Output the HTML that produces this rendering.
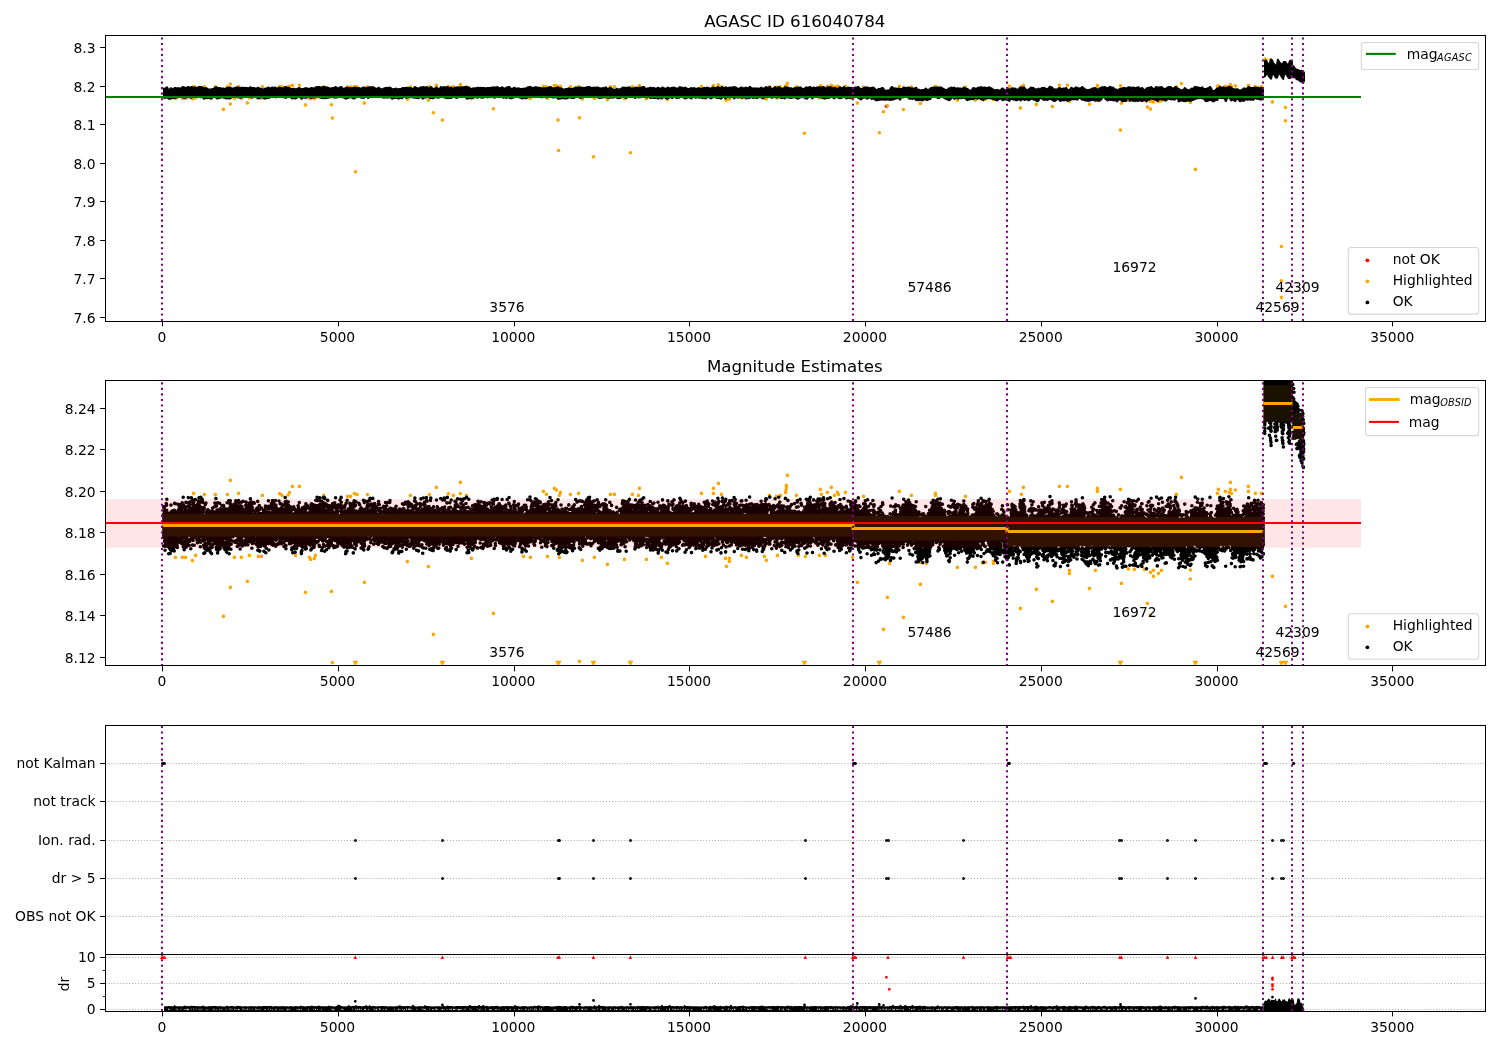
<!DOCTYPE html>
<html lang="en"><head><meta charset="utf-8"><title>AGASC ID 616040784</title>
<style>html,body{margin:0;padding:0;background:#fff}svg{display:block;will-change:transform}</style></head>
<body>
<svg width="1500" height="1050" viewBox="0 0 1500 1050" font-family="'DejaVu Sans','Liberation Sans',sans-serif" fill="#000">
<rect width="1500" height="1050" fill="#fff"/>
<defs>
<clipPath id="c1"><rect x="105.5" y="35.3" width="1380.0" height="285.74"/></clipPath>
<clipPath id="c2"><rect x="105.5" y="380.3" width="1380.0" height="285.66"/></clipPath>
<clipPath id="c3"><rect x="105.5" y="725.3" width="1380.0" height="285.70000000000005"/></clipPath>
</defs>
<g clip-path="url(#c1)">
<circle cx="886.4" cy="106.3" r="1.75" fill="#f00"/><path d="M230.4 84.1h0M193.6 86.5h0M204.4 86.8h0M215.4 86.8h0M227.4 86.8h0M238.6 86.5h0M262.4 86.9h0M279.6 86.6h0M282 86.9h0M289.4 86.4h0M288 86.8h0M292.4 85.2h0M299.4 85.2h0M323.6 86.9h0M347.6 87.1h0M350.6 87.1h0M354.4 86.6h0M357 86.8h0M367.4 86.8h0M410.4 86.9h0M429.4 86.8h0M436.4 85.4h0M448.4 86.6h0M175.4 98.4h0M182.4 98.4h0M185.6 98.4h0M192.4 99h0M195.6 98h0M234.4 98.4h0M241.4 98.4h0M249.4 98h0M258.4 98.2h0M261.4 98.2h0M295.4 98h0M309.4 98.4h0M310.6 98.8h0M314.4 98.6h0M315.4 98h0M407.4 99.2h0M428.4 100.1h0M247.4 102.9h0M230.4 104h0M223.4 109.4h0M305.4 104.9h0M331.4 104.7h0M364.4 103.1h0M433.4 112.7h0M332.4 118h0M460.4 84.5h0M460.4 86.6h0M453.4 86.9h0M466.4 86.9h0M543.4 86.2h0M546.4 86.7h0M554.4 85.6h0M556.4 85.9h0M560.4 86.3h0M559.4 86.9h0M570.4 86.7h0M578.6 86.5h0M610.4 86.7h0M614.4 86.7h0M632.4 86.7h0M639.4 85.6h0M638.4 86.9h0M701.4 86.5h0M713.4 85.6h0M713.4 86.5h0M718.4 84.7h0M721.4 86.7h0M471.4 98.6h0M523.4 98.2h0M530.4 98.4h0M547.4 98.2h0M559.4 98.4h0M582.4 99h0M594.4 98.4h0M607.4 99.7h0M624.4 98.8h0M646.4 98.8h0M661.4 98.4h0M667.4 99.5h0M705.4 98.2h0M725.4 98.6h0M729.4 98.6h0M729.4 99.2h0M726.4 100.1h0M741.4 98h0M746.4 98.4h0M493.4 108.8h0M579.4 117.7h0M787.4 83.2h0M786.4 85h0M786.4 85.4h0M786 85.9h0M785.6 86.4h0M769.4 86.9h0M776.4 87.1h0M780.4 86.9h0M796.4 86.9h0M820.4 85.8h0M821.4 86.7h0M827.4 86.3h0M831.4 85.4h0M837.4 86.3h0M838.4 86.7h0M834.4 86.9h0M845.4 86.3h0M863.4 87.1h0M899.4 86.2h0M911.4 86.9h0M935.4 86.5h0M935.4 86.9h0M965.4 87.1h0M1009.4 86.2h0M1023.4 85.4h0M1021.4 86.7h0M764.4 98.2h0M766.4 99h0M777.4 98h0M798.4 98h0M805.4 98.2h0M819.4 98h0M825.4 98h0M852.4 98.4h0M889.4 99.5h0M920.4 99.3h0M926.4 99.5h0M957.4 100.3h0M975.4 100.3h0M982.4 99.5h0M985.4 99.3h0M993.4 99.2h0M993.4 99.5h0M857.4 103.1h0M920.4 103.4h0M887.4 105.8h0M903.4 109.6h0M883.4 111.8h0M1036.4 104.4h0M1020.4 107.9h0M1059.4 85.2h0M1067.4 85.2h0M1097.4 85.6h0M1097.4 86.2h0M1120.4 85.8h0M1181.4 83.6h0M1176.4 86.7h0M1218.4 85.8h0M1217.4 86.5h0M1225.4 86.2h0M1230.4 84.5h0M1230.4 85.8h0M1229.4 86.3h0M1231.4 86.5h0M1235.4 85.9h0M1248.4 85.2h0M1248.4 86.2h0M1255.4 86.5h0M1261.4 86.5h0M1069.4 100.8h0M1069.4 101.4h0M1095.4 100.8h0M1128.4 100.6h0M1134.4 100.6h0M1144.4 100.6h0M1150.4 101.2h0M1153.4 100.8h0M1153.4 101.9h0M1158.4 101.4h0M1161.4 100.8h0M1190.4 100.8h0M1190.4 102.4h0M1052.4 106.6h0M1089.4 104.2h0M1121.4 103.2h0M1147.4 107h0M1150.4 109.1h0M1272.4 101.9h0M1285.4 107.5h0M355.4 171.7h0M442.4 120.1h0M558 120.1h0M558.6 150.5h0M593.4 156.7h0M630.4 152.8h0M804.4 133.2h0M879.4 132.8h0M1120.4 130.1h0M1195.4 169.4h0M1281.4 246.5h0M1281.4 280.8h0M1281.4 297.4h0M1285.4 120.8h0M1265.2 59h0M1270.3 59.8h0" stroke="#ffa500" stroke-width="3.6" stroke-linecap="round" fill="none"/><path d="M163 87.8 164 87.6 165 87.7 166 86.4 167 86.2 168 86.7 169 88.9 170 87.6 171 87.3 172 87.6 173 88.4 174 87.1 175 87.1 176 87.1 177 87.4 178 87.1 179 87.3 180 87.4 181 87.2 182 86.3 183 85.9 184 86.1 185 87.1 186 86.8 187 86.5 188 85.9 189 86.1 190 86.7 191 86 192 86.1 193 86.4 194 86.8 195 86.3 196 86.4 197 87 198 86.2 199 85.9 200 86.1 201 85.9 202 86.2 203 86.4 204 87.4 205 87.2 206 86.9 207 87.3 208 88.2 209 88.5 210 88.5 211 88.6 212 88 213 87.9 214 87.2 215 86.4 216 86.1 217 86.5 218 86.9 219 87.1 220 87 221 87.6 222 87.4 223 87.4 224 87.4 225 88 226 87.3 227 86.9 228 86.7 229 86.6 230 86.5 231 86.7 232 87.4 233 87.5 234 87.3 235 86.7 236 86.5 237 86.6 238 86.5 239 86.5 240 87.2 241 86.8 242 86.9 243 86.6 244 86.9 245 87.1 246 86.7 247 87.1 248 87.3 249 87 250 86.2 251 86.3 252 86.9 253 87 254 86.9 255 87.1 256 88.1 257 86.8 258 86.7 259 87.3 260 87.5 261 87.9 262 88 263 88.4 264 88.3 265 87.6 266 87.6 267 87.3 268 86.5 269 86.6 270 87.5 271 87 272 86.6 273 86.5 274 87 275 86.5 276 86.6 277 87.7 278 86.9 279 86.6 280 86.9 281 87.1 282 87.3 283 87.4 284 86.4 285 85.9 286 86.1 287 86.7 288 86.8 289 86.8 290 87.6 291 87.8 292 88 293 87.8 294 87.7 295 88 296 88.4 297 87.8 298 87.4 299 86.9 300 87 301 88.2 302 87.9 303 87.9 304 87.7 305 87.3 306 87.1 307 87.5 308 87.5 309 88 310 87.6 311 87.1 312 87.1 313 87.3 314 87.4 315 86.6 316 86.3 317 85.9 318 86.1 319 86.1 320 86 321 86.5 322 86.6 323 86 324 85.9 325 86 326 86.6 327 86.6 328 86.5 329 87 330 87.4 331 87.5 332 87.1 333 87.1 334 87 335 86.1 336 86 337 86.7 338 87.4 339 86.7 340 86.3 341 85.9 342 86.1 343 87.8 344 87.7 345 87.3 346 86.8 347 86.4 348 86.7 349 87.2 350 87 351 87.2 352 87.2 353 87 354 86.5 355 86.7 356 86.7 357 87 358 87.2 359 87 360 87.3 361 87.8 362 87.1 363 86.4 364 86.5 365 86.6 366 87.5 367 86.7 368 86.7 369 86.4 370 86.1 371 86.4 372 86.2 373 86.1 374 86.6 375 87.1 376 87.7 377 87.7 378 86.7 379 86.7 380 87.4 381 87.9 382 88.5 383 87.7 384 87.6 385 86.9 386 86.9 387 86.8 388 87.1 389 86.8 390 86.5 391 86.8 392 88.1 393 88.2 394 88.1 395 87.9 396 87.5 397 87.8 398 88.4 399 88.1 400 88.1 401 88.1 402 87.1 403 87.1 404 87.3 405 86.8 406 86.9 407 86.8 408 86.7 409 87 410 87 411 87.3 412 87.3 413 87.9 414 86.3 415 86 416 86.4 417 87.1 418 87.3 419 87.6 420 86.5 421 86.2 422 86.5 423 86 424 86.1 425 86.8 426 86 427 86 428 86.8 429 87.6 430 86.2 431 86 432 86.5 433 87.7 434 87.7 435 87.4 436 86.4 437 86.4 438 87.4 439 88.2 440 86.2 441 86.1 442 86.5 443 86.4 444 86 445 86.2 446 86.4 447 85.9 448 86 449 87.1 450 86.8 451 86.4 452 86.6 453 88.1 454 87 455 86.6 456 86.7 457 86.2 458 86.2 459 86.8 460 86.3 461 86.4 462 86.5 463 86.2 464 86.1 465 86.3 466 86 467 85.9 468 86.4 469 86.2 470 86.7 471 88.2 472 87.5 473 87.5 474 87.3 475 87.2 476 87.3 477 86.9 478 86.6 479 86.9 480 87 481 86.7 482 87.1 483 87.1 484 86.9 485 86.9 486 87.4 487 87.1 488 87 489 86.9 490 86.9 491 86.8 492 86.4 493 86.6 494 86.3 495 86.4 496 86.6 497 86.1 498 86.3 499 87.1 500 87.3 501 86.7 502 86.3 503 86.5 504 87.6 505 87.5 506 86.8 507 86.3 508 86.3 509 85.9 510 86.1 511 87.6 512 88 513 87.3 514 86.7 515 86.8 516 87.5 517 87.7 518 87.2 519 87.2 520 88 521 88.1 522 87.8 523 88 524 87.4 525 87.4 526 87.4 527 86.4 528 86.3 529 86.2 530 85.8 531 86.1 532 86.9 533 86.8 534 86.8 535 86.2 536 86.2 537 86.3 538 86.7 539 86.7 540 86.7 541 87 542 87.5 543 87.3 544 87.3 545 87.2 546 87.3 547 87.2 548 86.7 549 86.2 550 85.9 551 86.3 552 86.5 553 87.4 554 87.3 555 87 556 86.9 557 86.6 558 86.3 559 86.7 560 87.6 561 87.3 562 87.6 563 88.3 564 88.8 565 88.1 566 88 567 88 568 87.5 569 87.3 570 87.8 571 88.1 572 87.7 573 87.7 574 87.3 575 86.4 576 86.3 577 86.8 578 86.8 579 86.6 580 86.6 581 86.6 582 86.7 583 86.8 584 86.9 585 86.8 586 86.5 587 86.3 588 86 589 86 590 85.9 591 86.7 592 87.1 593 86.7 594 86.6 595 86.7 596 86.7 597 86.3 598 86.6 599 86.9 600 87.3 601 87.6 602 87.2 603 87.1 604 87.2 605 86.5 606 86.3 607 86.9 608 88.3 609 87 610 86.8 611 87.3 612 87.4 613 88.2 614 88.8 615 89 616 87.8 617 87.8 618 88.6 619 88.3 620 88.2 621 87.7 622 86.7 623 86.5 624 86.7 625 86.7 626 86.7 627 86.8 628 86.7 629 86.3 630 86.3 631 87.4 632 87.4 633 87.3 634 87.4 635 86.4 636 86.4 637 87.2 638 87 639 86.7 640 86.4 641 86.7 642 86.2 643 86.1 644 86 645 86.6 646 88 647 87.5 648 87.2 649 87.2 650 86.7 651 86.8 652 87.3 653 87.1 654 86.9 655 87.3 656 88.1 657 87.1 658 86.8 659 87.1 660 87.5 661 87.5 662 86.4 663 86.4 664 87.3 665 87.5 666 87.7 667 86.7 668 86.6 669 87.1 670 87.5 671 87 672 86.7 673 86.7 674 86.4 675 86.7 676 87.6 677 87.4 678 87.5 679 86.3 680 86.1 681 86.4 682 86.7 683 86.8 684 87.3 685 86.6 686 86.7 687 87.6 688 88.1 689 88 690 87.5 691 87 692 87.2 693 87.5 694 87.1 695 87.3 696 87.9 697 87.6 698 87.3 699 87.2 700 87.6 701 87.7 702 87.7 703 87.3 704 86.8 705 86.9 706 87 707 86.6 708 86.8 709 87.1 710 87.5 711 87.6 712 86.6 713 86.6 714 87 715 86.7 716 86.9 717 86.3 718 86.1 719 86.5 720 87.1 721 86.7 722 86 723 86.1 724 87.2 725 86.5 726 86.3 727 86.7 728 87.2 729 86.6 730 86.6 731 86.7 732 86.5 733 86.3 734 85.9 735 86.2 736 86.5 737 87 738 87.9 739 87.5 740 86.9 741 86.5 742 86.5 743 87 744 87.5 745 86.8 746 86.4 747 86.7 748 87.5 749 85.9 750 85.8 751 86.6 752 87.2 753 87.5 754 87.4 755 87.3 756 87.7 757 87.2 758 87.4 759 88.1 760 87 761 86.6 762 86.9 763 87.4 764 87.4 765 86.4 766 86.1 767 86.2 768 87.1 769 86 770 85.8 771 86.4 772 88.1 773 87.5 774 86.6 775 86.1 776 86.4 777 87.4 778 86 779 85.9 780 86.4 781 87.3 782 87.7 783 87.6 784 86.8 785 86.1 786 86.2 787 86.7 788 86.4 789 86.8 790 87.6 791 87.3 792 87.3 793 88.2 794 87.1 795 87.1 796 87.2 797 86.5 798 86.6 799 86.7 800 86.2 801 86.5 802 87.2 803 88.3 804 87.8 805 86.9 806 86.3 807 86.4 808 86.7 809 86.2 810 85.9 811 86 812 87.6 813 86.4 814 86.4 815 87.2 816 86.8 817 86.6 818 86.2 819 86.5 820 86.2 821 86.5 822 86.4 823 86 824 86 825 86.8 826 87.5 827 86.3 828 86.2 829 86.4 830 85.9 831 86.2 832 86.8 833 87.3 834 87.3 835 86.8 836 87.1 837 88 838 87.5 839 86.6 840 86.3 841 86.6 842 87.6 843 86.3 844 86.1 845 86.5 846 87.6 847 87 848 86.6 849 86.8 850 86.9 851 86.7 852 87.3 853 87.1 854 87.4 L854 96.8 853 98.1 852 98.5 851 98.7 850 99.3 849 99.1 848 98.5 847 99.5 846 99.6 845 98.5 844 97.7 843 98.2 842 98.8 841 99 840 99.2 839 99 838 98.7 837 98 836 98.2 835 98.9 834 99.4 833 98.9 832 97.6 831 98.1 830 98.5 829 98.9 828 98.7 827 99 826 98.8 825 99.4 824 99.7 823 99 822 98.7 821 98.8 820 97.9 819 97.6 818 98.2 817 97.9 816 97.8 815 97.6 814 97.7 813 99.5 812 99.5 811 98.2 810 98.3 809 97.7 808 99.2 807 99.7 806 99.2 805 98.8 804 98.5 803 97.9 802 98.3 801 98.2 800 98.4 799 99.1 798 99.8 797 99.4 796 99 795 98.4 794 98.3 793 98.6 792 98.7 791 99 790 99 789 98.5 788 98.6 787 98.2 786 98.6 785 99.5 784 99.3 783 98.4 782 99.2 781 98.9 780 98.5 779 98.1 778 98.2 777 98.6 776 98.7 775 98.1 774 98.3 773 98.2 772 98.9 771 98.6 770 98 769 98 768 97.6 767 97.3 766 97.9 765 98.3 764 98.9 763 99.1 762 99.4 761 98.5 760 97.9 759 98.4 758 98.4 757 99.3 756 99.1 755 98.2 754 99 753 98.9 752 98.5 751 98.3 750 98.8 749 99.3 748 99 747 98.4 746 98.9 745 99 744 97.9 743 98.9 742 98.8 741 98.3 740 98.2 739 98.4 738 98.8 737 98.5 736 98 735 99.2 734 99.4 733 98.4 732 97.9 731 98.2 730 98.2 729 98.4 728 97.7 727 98.4 726 99.5 725 99.4 724 98 723 98.1 722 99.2 721 99.7 720 99.2 719 98.9 718 99 717 99.1 716 98.8 715 98 714 98.3 713 98.3 712 99 711 99.4 710 98.9 709 98.2 708 98.2 707 98.5 706 98.9 705 98.9 704 98.5 703 99.2 702 98.9 701 98.6 700 98.6 699 98.8 698 98.4 697 98.1 696 98.9 695 98.6 694 98.1 693 98.1 692 99.5 691 99.5 690 98.4 689 98.7 688 97.9 687 98.9 686 99.2 685 99.5 684 98.9 683 98.2 682 98.1 681 97 680 98.4 679 98.9 678 98.4 677 99.3 676 99.1 675 97.9 674 97.9 673 99.1 672 99.2 671 98.4 670 98.3 669 98.9 668 99.6 667 99.4 666 99.5 665 99 664 97.4 663 99 662 99.1 661 98.8 660 98.4 659 99.4 658 99.7 657 98.9 656 99 655 98.9 654 98.9 653 99.1 652 98.6 651 99 650 99 649 98.3 648 98 647 98.6 646 98.5 645 97.4 644 97.9 643 98.1 642 98.1 641 98.3 640 98.3 639 98.5 638 98.3 637 98.1 636 98.7 635 98.9 634 98.6 633 97.1 632 96.8 631 96.9 630 97.2 629 97 628 96.7 627 99 626 99.3 625 98.7 624 97.9 623 97.7 622 98 621 98.7 620 99.3 619 98.9 618 99.3 617 99.1 616 98.2 615 98 614 98.8 613 98.5 612 98.4 611 98.8 610 98.7 609 98.7 608 98.7 607 98.5 606 98.4 605 98.3 604 98.3 603 98.5 602 98.8 601 98.6 600 99.2 599 98.7 598 98.8 597 97.9 596 97 595 97.4 594 97.4 593 97.9 592 97.8 591 98.3 590 97.9 589 97.7 588 98 587 97.9 586 97.9 585 97.7 584 97.9 583 98.4 582 98.2 581 99 580 98.8 579 98.7 578 97.8 577 97.2 576 97.4 575 98.7 574 98.7 573 99.2 572 99.1 571 98.7 570 98.6 569 98.5 568 99 567 99.5 566 99.6 565 99.3 564 99.5 563 99 562 99.3 561 99.3 560 99.5 559 99.8 558 99.6 557 99.2 556 98.3 555 98.1 554 98.8 553 98.5 552 98.3 551 98.1 550 97 549 97.2 548 98 547 98.5 546 98.2 545 98.2 544 97.3 543 97.8 542 98.6 541 98.3 540 97.7 539 96.5 538 96.9 537 96.6 536 97.3 535 98.2 534 98.1 533 97.4 532 97.3 531 97.6 530 97.5 529 98.3 528 98.3 527 99.2 526 99.3 525 99.1 524 98.6 523 98.9 522 99.5 521 99.1 520 98.4 519 98.4 518 97.4 517 97.3 516 97.6 515 98.3 514 98.2 513 98.9 512 98.8 511 99.4 510 99.1 509 98.7 508 98.1 507 99 506 99 505 98.2 504 98.8 503 98.8 502 98 501 97.9 500 97.7 499 97.7 498 96.9 497 97.2 496 98.2 495 98.6 494 98.8 493 98.1 492 97.4 491 98.2 490 98.1 489 98.3 488 98.3 487 98.4 486 98.1 485 97.9 484 98.4 483 98.8 482 98.6 481 98.7 480 98.2 479 97.9 478 98.7 477 98.7 476 98.1 475 98.3 474 98.6 473 99.1 472 99 471 98.8 470 98.7 469 99.6 468 99.3 467 99.7 466 99.2 465 98 464 97.9 463 97.5 462 97.8 461 97.3 460 97.7 459 98 458 98.5 457 98.8 456 99 455 98.2 454 97.6 453 98.1 452 98.7 451 99 450 99.3 449 98.9 448 98.8 447 99.2 446 98.8 445 98.9 444 98.1 443 98.2 442 97.5 441 97.3 440 98.1 439 98.8 438 98.8 437 98.6 436 98.3 435 98.2 434 99 433 99.2 432 99.2 431 98.9 430 99 429 98.7 428 97.8 427 98 426 98.8 425 98.5 424 98.7 423 99.7 422 99.5 421 97.8 420 98.4 419 99.1 418 99.2 417 99.1 416 99 415 98.4 414 98.8 413 98.6 412 97.9 411 98.3 410 98.2 409 98.5 408 97.9 407 98.7 406 99 405 98.1 404 97.9 403 98.7 402 99.4 401 99.1 400 99 399 99.7 398 99.4 397 98.8 396 98.7 395 99 394 98.9 393 99.5 392 99.7 391 99 390 98.3 389 98.3 388 98.6 387 98.8 386 98.3 385 98.5 384 98.7 383 98.5 382 98.3 381 97.4 380 97.4 379 97.9 378 98 377 97.9 376 97.4 375 97.4 374 98 373 97.9 372 96.9 371 97.7 370 98.1 369 98.7 368 99 367 98.4 366 97.2 365 98.4 364 99.1 363 98.8 362 98.8 361 98.8 360 98.2 359 97.3 358 97.5 357 98.1 356 98.6 355 98.9 354 99.5 353 99.6 352 98.7 351 98.3 350 98.3 349 98.7 348 99 347 99.3 346 99.8 345 99.6 344 98.6 343 98.4 342 97.9 341 98 340 97.9 339 97.4 338 98.3 337 98.4 336 98.4 335 98.6 334 98.7 333 98.3 332 98 331 98.2 330 98.2 329 98.7 328 98.4 327 99 326 99 325 99.3 324 99.2 323 98.8 322 99.2 321 99.1 320 98.3 319 98.4 318 97.7 317 97.7 316 97.7 315 98.3 314 98.6 313 98.5 312 98.8 311 99.1 310 98.8 309 97.8 308 97.9 307 98.6 306 98.9 305 98.8 304 98.4 303 98.8 302 99.7 301 99.7 300 98.6 299 97.6 298 98.3 297 98.7 296 99.2 295 99.5 294 98.8 293 99.6 292 99.4 291 98.9 290 98 289 97.8 288 97.1 287 98.5 286 98.9 285 98.4 284 98.5 283 97.9 282 97.8 281 97.9 280 97.5 279 97.8 278 98.1 277 97.5 276 98.4 275 98.3 274 97.7 273 98.3 272 98.1 271 98 270 98.5 269 99.1 268 98.8 267 98.9 266 99.6 265 99.4 264 99.4 263 99 262 97.8 261 98.5 260 99.3 259 99.1 258 99.2 257 98.9 256 98 255 97.5 254 97.7 253 98.2 252 98.8 251 98.4 250 97.6 249 97.5 248 98.1 247 97.8 246 98 245 98.1 244 97.6 243 98.2 242 98.3 241 98.5 240 98.9 239 98.3 238 98.2 237 98.5 236 97.7 235 97.7 234 97.6 233 97.3 232 98.4 231 99 230 99.6 229 99.8 228 99 227 99.5 226 99.4 225 99.1 224 98.8 223 98.4 222 98.2 221 98.6 220 98.9 219 98.8 218 99.6 217 99.5 216 98.9 215 97.8 214 97.6 213 98.6 212 99.7 211 99.6 210 99.5 209 98.9 208 98.9 207 99.2 206 98.9 205 99.6 204 99.8 203 99.4 202 97.4 201 98.3 200 98.5 199 97.6 198 97.8 197 97.7 196 96.8 195 98 194 98.2 193 98 192 98.2 191 98.9 190 98.6 189 98.3 188 98.2 187 98.3 186 98.6 185 98.8 184 99.1 183 98.5 182 97.9 181 97.8 180 97.6 179 97.3 178 98.4 177 98.6 176 98.4 175 99 174 99.3 173 98.8 172 99.2 171 99.4 170 99.8 169 99.8 168 99.6 167 98.4 166 98.6 165 99.2 164 98.8 163 98.2z" fill="#000" stroke="none"/><path d="M852 88.2 853 87.1 854 86.9 855 86.5 856 86.6 857 86.6 858 86 859 86.1 860 87.6 861 88 862 88.3 863 87.1 864 87.1 865 86.5 866 86.6 867 86.4 868 86.4 869 87.1 870 87.2 871 87.1 872 86.7 873 86.4 874 86.8 875 87.5 876 88.8 877 89 878 88.1 879 88 880 87.9 881 87.6 882 87 883 86.9 884 87.7 885 89.4 886 89.7 887 89.5 888 89.5 889 89.3 890 87.6 891 86.4 892 86 893 86.3 894 87.6 895 87.4 896 87.3 897 87.9 898 87.6 899 87.5 900 88.1 901 87.9 902 87.7 903 86.4 904 86.3 905 86.9 906 86.7 907 87.1 908 86.5 909 86.5 910 86.9 911 87.3 912 87.5 913 87.5 914 87.6 915 87.2 916 86.7 917 86.9 918 88.9 919 88.6 920 89 921 89.4 922 89 923 89 924 89 925 87.7 926 87.6 927 88.2 928 88.9 929 88.4 930 87.6 931 86.9 932 87 933 86.4 934 86.6 935 86.6 936 86.7 937 86.4 938 86.3 939 86.8 940 86.2 941 86.2 942 87.2 943 87.3 944 88.3 945 88.4 946 89.1 947 89.1 948 87.6 949 87.5 950 87.2 951 86.4 952 86.5 953 87.2 954 86.6 955 86.7 956 87.7 957 87.3 958 87.2 959 87.5 960 87.4 961 87.5 962 88 963 86.8 964 86.6 965 87 966 87.5 967 88 968 88.1 969 88.9 970 89.5 971 89.8 972 87.4 973 87.2 974 87 975 87.5 976 87.7 977 87.2 978 86.5 979 86.7 980 86.4 981 86.1 982 86.4 983 86.7 984 86.6 985 86.6 986 86.7 987 87.2 988 86.6 989 86.2 990 86.4 991 87.2 992 87.3 993 88.4 994 88.7 995 89.6 996 89.1 997 88.9 998 89.1 999 89.5 1000 89.5 1001 88.2 1002 87.5 1003 87.6 1004 88.5 1005 89 1006 89.7 1007 89.4 1008 89.8 L1008 99.1 1007 100.5 1006 100.6 1005 100.4 1004 100.4 1003 101.3 1002 101.2 1001 99.5 1000 100 999 99.8 998 101.4 997 101.4 996 101 995 100.9 994 99.9 993 100.1 992 99.7 991 99.2 990 99.5 989 98.9 988 99 987 99.4 986 99.4 985 99.3 984 101.2 983 101.3 982 100.2 981 100.3 980 99.8 979 98.7 978 100.1 977 100 976 98.6 975 99.5 974 99.9 973 100.3 972 99.8 971 100.2 970 100.2 969 100.6 968 101.1 967 101.3 966 100.5 965 99.2 964 98.9 963 98.4 962 99.3 961 99.2 960 98.7 959 99.6 958 99.5 957 99 956 98.8 955 100 954 100 953 98.4 952 98.8 951 100.3 950 101 949 101.3 948 100.9 947 100.2 946 100 945 99.5 944 99 943 98.3 942 97.3 941 97.7 940 98.8 939 99.1 938 99.3 937 98.9 936 97.6 935 97.2 934 97.3 933 98.1 932 98 931 99.7 930 100.2 929 100.3 928 100.8 927 101.3 926 100.8 925 99.9 924 100.7 923 101.5 922 101.2 921 100.9 920 100.8 919 101 918 101.3 917 101.1 916 101.3 915 100.6 914 98.9 913 100 912 99.9 911 99.4 910 99.9 909 99.4 908 98.8 907 98.1 906 97 905 97.5 904 98.3 903 98.6 902 98 901 100.3 900 100.7 899 100 898 98.8 897 99.3 896 99.4 895 99.8 894 100.6 893 100.4 892 100.5 891 100.9 890 101 889 100.4 888 100.6 887 100.6 886 100.8 885 100.8 884 100.7 883 100.4 882 100.5 881 100.8 880 100.6 879 101.1 878 101.1 877 101.2 876 101.5 875 100.7 874 99.9 873 99.5 872 100 871 100 870 98.5 869 98.6 868 99.5 867 99.8 866 99.2 865 98.2 864 98.8 863 98.7 862 99.9 861 100.5 860 100.2 859 99.2 858 98.9 857 97.9 856 97.8 855 98.4 854 98 853 97.2 852 96.7z" fill="#000" stroke="none"/><path d="M1006 88 1007 87.3 1008 87.3 1009 88.4 1010 88.6 1011 87.5 1012 87.2 1013 87.4 1014 87.5 1015 87.6 1016 87.9 1017 88.6 1018 88.8 1019 87.1 1020 86.5 1021 86.5 1022 86.8 1023 86.5 1024 86.3 1025 86.7 1026 88.2 1027 89.3 1028 88.6 1029 88.2 1030 86.7 1031 86.5 1032 87 1033 86.7 1034 86.9 1035 88.2 1036 88.2 1037 88.4 1038 87.7 1039 87.6 1040 88.4 1041 87.2 1042 86.9 1043 87 1044 86.8 1045 86.9 1046 88.1 1047 88 1048 87.5 1049 86.1 1050 85.7 1051 86 1052 86.5 1053 86.8 1054 88.4 1055 88.2 1056 88.5 1057 88.4 1058 87.5 1059 86.9 1060 87.1 1061 87.8 1062 87.9 1063 87.4 1064 87.5 1065 87.5 1066 87.1 1067 87.3 1068 89.1 1069 89.2 1070 87.7 1071 86.8 1072 86.8 1073 87.7 1074 87.8 1075 86.7 1076 86.3 1077 86.7 1078 87.3 1079 87.3 1080 87.6 1081 86.7 1082 86 1083 86 1084 87.4 1085 87.8 1086 88.7 1087 89.2 1088 88.8 1089 89 1090 88.7 1091 87.9 1092 87.7 1093 87.3 1094 87.2 1095 86.9 1096 87.3 1097 88.3 1098 88.4 1099 87.6 1100 87.3 1101 86.4 1102 86.3 1103 86.6 1104 86 1105 85.9 1106 86.4 1107 87.2 1108 86.9 1109 86.3 1110 85.8 1111 86 1112 86.7 1113 86.5 1114 87.1 1115 88.6 1116 88.5 1117 88.6 1118 89.2 1119 88.3 1120 87.8 1121 87.5 1122 87.5 1123 87.1 1124 86.7 1125 87 1126 87.6 1127 86.9 1128 86.3 1129 86.3 1130 86.4 1131 86.5 1132 87 1133 86.6 1134 86.6 1135 87.3 1136 86.7 1137 86.7 1138 86.3 1139 86.3 1140 87.7 1141 87.2 1142 87 1143 87.3 1144 88.7 1145 89 1146 87.6 1147 87.3 1148 86.8 1149 86.7 1150 86.4 1151 86 1152 86.3 1153 87.4 1154 88.1 1155 86.8 1156 85.9 1157 85.9 1158 86.7 1159 86.2 1160 86.4 1161 86.1 1162 86.1 1163 86.9 1164 87.8 1165 87.9 1166 87.5 1167 86.5 1168 86.2 1169 86 1170 86 1171 86.1 1172 86.9 1173 87.6 1174 86.9 1175 86 1176 85.9 1177 86.6 1178 87.4 1179 88 1180 88.5 1181 89.2 1182 89.3 1183 89.1 1184 87.3 1185 87.1 1186 87.8 1187 88.7 1188 88.7 1189 89.6 1190 88.6 1191 87.7 1192 87.4 1193 87.8 1194 86.3 1195 85.8 1196 86 1197 86.4 1198 86.2 1199 86.7 1200 87 1201 86.9 1202 86.2 1203 86.4 1204 87.9 1205 88.1 1206 87.9 1207 87.3 1208 87.5 1209 86.2 1210 85.9 1211 86.2 1212 88 1213 90 1214 90.1 1215 89.2 1216 88.2 1217 87.5 1218 87.6 1219 86.2 1220 85.8 1221 86.1 1222 86.9 1223 86.2 1224 86.2 1225 87.3 1226 86.7 1227 86.8 1228 86 1229 85.8 1230 86.2 1231 86.3 1232 86.7 1233 88 1234 87.9 1235 88.4 1236 88.4 1237 88.1 1238 88.4 1239 88.9 1240 89.5 1241 89.3 1242 88.8 1243 87.6 1244 87.5 1245 87.5 1246 87.9 1247 87.2 1248 86.1 1249 86 1250 86.6 1251 87 1252 87.1 1253 87.1 1254 86.5 1255 86.5 1256 87.1 1257 86.8 1258 86.4 1259 86.7 1260 87.4 1261 86.8 1262 87 1263 87.3 1264 87.4 L1264 99.7 1263 99.8 1262 100.4 1261 100.5 1260 100.5 1259 100.2 1258 99.5 1257 100 1256 99.4 1255 99.2 1254 100.5 1253 101 1252 100.6 1251 100.8 1250 100.8 1249 100.3 1248 100.7 1247 100.8 1246 100.3 1245 101 1244 102.1 1243 102 1242 101.3 1241 102.2 1240 102.2 1239 101.7 1238 100.4 1237 99.5 1236 101.9 1235 102.2 1234 101.5 1233 100.6 1232 101.5 1231 101.6 1230 100.5 1229 98.6 1228 98.4 1227 101.3 1226 102.1 1225 101.9 1224 99.2 1223 99.1 1222 99.2 1221 98.9 1220 99.1 1219 98.5 1218 100.9 1217 101.1 1216 100.8 1215 101.8 1214 102.4 1213 102.2 1212 102.1 1211 101.3 1210 101.1 1209 101.3 1208 101.8 1207 102.2 1206 101.9 1205 101.9 1204 100.6 1203 99.3 1202 99.4 1201 98.8 1200 99.3 1199 99.1 1198 99.2 1197 99.3 1196 99.7 1195 100.3 1194 100.4 1193 100.9 1192 101.3 1191 101.8 1190 102 1189 101.4 1188 101.7 1187 101.6 1186 102.2 1185 102.3 1184 101.8 1183 102.2 1182 101.6 1181 101.5 1180 102.1 1179 102.4 1178 102.3 1177 99.3 1176 99.4 1175 100.7 1174 100.7 1173 100.1 1172 100.6 1171 100.3 1170 100.3 1169 100 1168 99.6 1167 101.3 1166 101.5 1165 101.6 1164 100.9 1163 100.6 1162 100.6 1161 100.2 1160 100.1 1159 100.9 1158 101.9 1157 102 1156 101.1 1155 100.9 1154 99.7 1153 99.9 1152 100.1 1151 99.6 1150 100.6 1149 100.4 1148 101.2 1147 102.5 1146 102.5 1145 100.8 1144 101.2 1143 101.5 1142 102.2 1141 101.9 1140 101.3 1139 101.5 1138 102.2 1137 101.8 1136 101.8 1135 101.9 1134 101.4 1133 101.9 1132 101.5 1131 101.3 1130 101.9 1129 101.6 1128 98.7 1127 101.5 1126 102.1 1125 102 1124 102.1 1123 102.2 1122 102.3 1121 101.3 1120 100.6 1119 100.5 1118 101.9 1117 102.4 1116 102 1115 101.1 1114 101.5 1113 101.5 1112 100.7 1111 100.9 1110 100.9 1109 100.6 1108 101.6 1107 101.5 1106 100.3 1105 100.1 1104 98.2 1103 98.4 1102 99.9 1101 101 1100 101.8 1099 101.8 1098 101.9 1097 101.3 1096 101.5 1095 101.6 1094 101.1 1093 100.9 1092 100.8 1091 101.6 1090 101.4 1089 101.8 1088 102 1087 101.5 1086 101.7 1085 101.3 1084 101.2 1083 100.5 1082 100.8 1081 100.2 1080 98.7 1079 99.3 1078 100.3 1077 100.8 1076 100.3 1075 100 1074 100.5 1073 100.2 1072 100.1 1071 101 1070 100.8 1069 101.3 1068 102 1067 101.7 1066 101.1 1065 101.2 1064 101.2 1063 101.4 1062 101.1 1061 102 1060 102.1 1059 101 1058 99.9 1057 100.5 1056 101.6 1055 102.1 1054 102 1053 101.6 1052 100.7 1051 100.2 1050 99.9 1049 100 1048 101 1047 101 1046 100.6 1045 100.7 1044 101 1043 100.5 1042 100.1 1041 98.8 1040 99.8 1039 101.7 1038 102.1 1037 102.3 1036 101.9 1035 100.4 1034 101 1033 100.5 1032 99.6 1031 99.9 1030 100.8 1029 101.2 1028 101.2 1027 100.6 1026 100.2 1025 101 1024 101.1 1023 99.9 1022 100.4 1021 101.4 1020 101.3 1019 100.3 1018 100.8 1017 101.3 1016 101.6 1015 100.8 1014 100.4 1013 100.7 1012 99.9 1011 100 1010 101.7 1009 101.9 1008 101 1007 100.9 1006 100.2z" fill="#000" stroke="none"/><path d="M1264 60.8 1265 59.6 1266 59.4 1267 60 1268 61.9 1269 63.2 1270 59.2 1271 58.6 1272 58.7 1273 60.1 1274 62.5 1275 63.5 1276 64.8 1277 58.7 1278 58.7 1279 59.4 1280 61.5 1281 62.5 1282 63.6 1283 61.3 1284 61.1 1285 61 1286 61.2 1287 62.8 1288 63.8 1289 60.6 1290 59.8 1291 59.8 1292 60.3 1293 61.7 L1293 74 1292 74.2 1291 78.4 1290 79.3 1289 79.1 1288 78.7 1287 77.3 1286 75.2 1285 75 1284 79.8 1283 79.9 1282 79 1281 77.7 1280 75.6 1279 74.8 1278 78 1277 78.7 1276 78.7 1275 77.9 1274 76.6 1273 74.6 1272 79.3 1271 79.7 1270 79.2 1269 77.8 1268 76.7 1267 74.6 1266 76.6 1265 77.5 1264 77.3z" fill="#000" stroke="none"/><path d="M1292 65.1 1293 64.9 1294 65.4 1295 66.4 1296 68.5 1297 68.6 1298 68.9 1299 69.3 1300 70.1 1301 69.9 1302 69.8 1303 70.3 1304 70.8 1305 72.8 L1305 80.9 1304 83.6 1303 83.7 1302 83.1 1301 82.7 1300 82 1299 81.6 1298 80.5 1297 80.3 1296 79.9 1295 78.4 1294 78.2 1293 78.3 1292 77.2z" fill="#000" stroke="none"/><path d="M105.5 97H1361" stroke="#008000" stroke-width="2" fill="none"/>
<path d="M162 321.04V35.3" stroke="#800080" stroke-width="2" stroke-dasharray="2.083 3.4375" fill="none"/><path d="M853 321.04V35.3" stroke="#800080" stroke-width="2" stroke-dasharray="2.083 3.4375" fill="none"/><path d="M1007 321.04V35.3" stroke="#800080" stroke-width="2" stroke-dasharray="2.083 3.4375" fill="none"/><path d="M1263 321.04V35.3" stroke="#800080" stroke-width="2" stroke-dasharray="2.083 3.4375" fill="none"/><path d="M1292 321.04V35.3" stroke="#800080" stroke-width="2" stroke-dasharray="2.083 3.4375" fill="none"/><path d="M1303 321.04V35.3" stroke="#800080" stroke-width="2" stroke-dasharray="2.083 3.4375" fill="none"/>
</g>
<rect x="105.5" y="35.5" width="1380.0" height="286.0" fill="none" stroke="#000" stroke-width="1"/>
<path d="M162.5 321.5V326.4" stroke="#000" stroke-width="1"/><text x="161.8" y="341.5" font-size="13.89" text-anchor="middle">0</text><path d="M338.5 321.5V326.4" stroke="#000" stroke-width="1"/><text x="337.5" y="341.5" font-size="13.89" text-anchor="middle">5000</text><path d="M514.5 321.5V326.4" stroke="#000" stroke-width="1"/><text x="513.3" y="341.5" font-size="13.89" text-anchor="middle">10000</text><path d="M689.5 321.5V326.4" stroke="#000" stroke-width="1"/><text x="689.1" y="341.5" font-size="13.89" text-anchor="middle">15000</text><path d="M865.5 321.5V326.4" stroke="#000" stroke-width="1"/><text x="864.9" y="341.5" font-size="13.89" text-anchor="middle">20000</text><path d="M1041.5 321.5V326.4" stroke="#000" stroke-width="1"/><text x="1040.7" y="341.5" font-size="13.89" text-anchor="middle">25000</text><path d="M1217.5 321.5V326.4" stroke="#000" stroke-width="1"/><text x="1216.5" y="341.5" font-size="13.89" text-anchor="middle">30000</text><path d="M1392.5 321.5V326.4" stroke="#000" stroke-width="1"/><text x="1392.3" y="341.5" font-size="13.89" text-anchor="middle">35000</text>
<path d="M105.5 317.5H100.2" stroke="#000" stroke-width="1"/><text x="95.6" y="322.8" font-size="13.89" text-anchor="end">7.6</text><path d="M105.5 278.5H100.2" stroke="#000" stroke-width="1"/><text x="95.6" y="283.8" font-size="13.89" text-anchor="end">7.7</text><path d="M105.5 240.5H100.2" stroke="#000" stroke-width="1"/><text x="95.6" y="245.8" font-size="13.89" text-anchor="end">7.8</text><path d="M105.5 201.5H100.2" stroke="#000" stroke-width="1"/><text x="95.6" y="206.8" font-size="13.89" text-anchor="end">7.9</text><path d="M105.5 163.5H100.2" stroke="#000" stroke-width="1"/><text x="95.6" y="168.8" font-size="13.89" text-anchor="end">8.0</text><path d="M105.5 124.5H100.2" stroke="#000" stroke-width="1"/><text x="95.6" y="129.8" font-size="13.89" text-anchor="end">8.1</text><path d="M105.5 86.5H100.2" stroke="#000" stroke-width="1"/><text x="95.6" y="91.8" font-size="13.89" text-anchor="end">8.2</text><path d="M105.5 47.5H100.2" stroke="#000" stroke-width="1"/><text x="95.6" y="52.8" font-size="13.89" text-anchor="end">8.3</text>
<text x="794.8" y="27" font-size="16.67" text-anchor="middle">AGASC ID 616040784</text>
<text x="507" y="312" font-size="13.89" text-anchor="middle">3576</text>
<text x="929.5" y="292" font-size="13.89" text-anchor="middle">57486</text>
<text x="1134.5" y="272" font-size="13.89" text-anchor="middle">16972</text>
<text x="1297.5" y="292" font-size="13.89" text-anchor="middle">42309</text>
<text x="1277.5" y="312" font-size="13.89" text-anchor="middle">42569</text>
<rect x="1361.3" y="42.5" width="117.4" height="27.0" rx="2.8" fill="#fff" fill-opacity="0.8" stroke="#ccc" stroke-opacity="0.8" stroke-width="1.1"/>
<path d="M1366.9 53.9h27.8" stroke="#008000" stroke-width="2.1" stroke-linecap="square"/>
<text x="1406.85" y="58.8" font-size="13.89">mag<tspan font-size="9.72" font-style="italic" dy="2.1" dx="-0.6" letter-spacing="0.2">AGASC</tspan></text>
<rect x="1348.3" y="247.5" width="130.4" height="66.6" rx="2.8" fill="#fff" fill-opacity="0.8" stroke="#ccc" stroke-opacity="0.8" stroke-width="1.1"/>
<circle cx="1367.4" cy="260.3" r="1.9" fill="#f00"/>
<text x="1392.7" y="263.7" font-size="13.89" text-anchor="start">not OK</text>
<circle cx="1367.4" cy="281.4" r="1.9" fill="#ffa500"/>
<text x="1392.7" y="284.8" font-size="13.89" text-anchor="start">Highlighted</text>
<circle cx="1367.4" cy="302.4" r="1.9" fill="#000"/>
<text x="1392.7" y="305.8" font-size="13.89" text-anchor="start">OK</text>
<g clip-path="url(#c2)">
<rect x="162.2" y="513.9" width="692" height="23" fill="#000"/><rect x="851.8" y="516.6" width="156.4" height="25" fill="#000"/><rect x="1005.8" y="517.6" width="259" height="28" fill="#000"/><rect x="1263.4" y="376" width="29.6" height="45.8" fill="#000"/><path d="M230.4 480.4h0M193.6 493.4h0M204.4 494.6h0M215.4 494.6h0M227.4 494.6h0M238.6 493.4h0M262.4 495.4h0M279.6 493.6h0M282 495.4h0M289.4 492.6h0M288 495h0M292.4 486.4h0M299.4 486.4h0M323.6 495.4h0M347.6 496.4h0M350.6 496.4h0M354.4 493.6h0M357 494.6h0M367.4 494.6h0M410.4 495.4h0M429.4 494.6h0M436.4 487.4h0M448.4 493.6h0M175.4 557.4h0M182.4 557.4h0M185.6 557.4h0M192.4 560.6h0M195.6 555.4h0M234.4 557.4h0M241.4 557.4h0M249.4 555.4h0M258.4 556.4h0M261.4 556.4h0M295.4 555.4h0M309.4 557.4h0M310.6 559.4h0M314.4 558.4h0M315.4 555.4h0M407.4 561.6h0M428.4 566.6h0M247.4 581.4h0M230.4 587.4h0M223.4 616.4h0M305.4 592.4h0M331.4 591.4h0M364.4 582.4h0M433.4 634.4h0M332.4 662.6h0M460.4 482.4h0M460.4 493.6h0M453.4 495.4h0M466.4 495.4h0M543.4 491.4h0M546.4 494.4h0M554.4 488.4h0M556.4 490h0M560.4 492.4h0M559.4 495.4h0M570.4 494.4h0M578.6 493.4h0M610.4 494.4h0M614.4 494.4h0M632.4 494.4h0M639.4 488.4h0M638.4 495.4h0M701.4 493.4h0M713.4 488.4h0M713.4 493.4h0M718.4 483.4h0M721.4 494.4h0M471.4 558.4h0M523.4 556.4h0M530.4 557.4h0M547.4 556.4h0M559.4 557.4h0M582.4 560.4h0M594.4 557.4h0M607.4 564.4h0M624.4 559.4h0M646.4 559.4h0M661.4 557.4h0M667.4 563.4h0M705.4 556.4h0M725.4 558.4h0M729.4 558.4h0M729.4 561.4h0M726.4 566.4h0M741.4 555.4h0M746.4 557.4h0M493.4 613.4h0M579.4 661.4h0M787.4 475.4h0M786.4 485.4h0M786.4 487.4h0M786 490h0M785.6 492.6h0M769.4 495.4h0M776.4 496.4h0M780.4 495.4h0M796.4 495.4h0M820.4 489.4h0M821.4 494.4h0M827.4 492.4h0M831.4 487.4h0M837.4 492.4h0M838.4 494.4h0M834.4 495.4h0M845.4 492.4h0M863.4 496.4h0M899.4 491.4h0M911.4 495.4h0M935.4 493.4h0M935.4 495.4h0M965.4 496.4h0M1009.4 491.4h0M1023.4 487.4h0M1021.4 494.4h0M764.4 556.4h0M766.4 560.4h0M777.4 555.4h0M798.4 555.4h0M805.4 556.4h0M819.4 555.4h0M825.4 555.4h0M852.4 557.4h0M889.4 563.4h0M920.4 562.4h0M926.4 563.4h0M957.4 567.4h0M975.4 567.4h0M982.4 563h0M985.4 562.4h0M993.4 561.4h0M993.4 563.4h0M857.4 582.4h0M920.4 584.4h0M887.4 597.4h0M903.4 617.4h0M883.4 629.4h0M1036.4 589.4h0M1020.4 608.4h0M1059.4 486.4h0M1067.4 486.4h0M1097.4 488.4h0M1097.4 491.4h0M1120.4 489.4h0M1181.4 477.4h0M1176.4 494.4h0M1218.4 489.4h0M1217.4 493.4h0M1225.4 491.4h0M1230.4 482.4h0M1230.4 489.4h0M1229.4 492.4h0M1231.4 493.4h0M1235.4 490h0M1248.4 486.4h0M1248.4 491.4h0M1255.4 493.4h0M1261.4 493.4h0M1069.4 570.4h0M1069.4 573.4h0M1095.4 570.4h0M1128.4 569h0M1134.4 569.4h0M1144.4 569.4h0M1150.4 572.4h0M1153.4 570.4h0M1153.4 576.4h0M1158.4 573.4h0M1161.4 570.4h0M1190.4 570h0M1190.4 579h0M1052.4 601.4h0M1089.4 588.4h0M1121.4 583.4h0M1147.4 603.4h0M1150.4 615h0M1272.4 576.4h0M1285.4 606.4h0M1265.2 345.1h0M1270.3 349.4h0" stroke="#ffa500" stroke-width="3.6" stroke-linecap="round" fill="none"/><path d="M163.6 514h0M163.6 507.1h0M163.6 546h0M163.9 515h0M163.9 506.5h0M164 535.8h0M164 537.6h0M164.2 507.8h0M164.3 511.1h0M164.4 536.6h0M164.5 537.2h0M164.6 536.4h0M164.6 540.7h0M164.6 541.6h0M164.7 537.5h0M164.7 536h0M164.9 514.7h0M164.9 513.1h0M165 550.3h0M165 514.4h0M165.1 546.2h0M165.2 510.9h0M165.5 538.6h0M165.5 543.4h0M165.5 536.8h0M165.6 513.3h0M165.7 536.6h0M165.8 511.4h0M165.9 513.9h0M165.9 512.6h0M166 537.7h0M166 538.4h0M166.1 514.1h0M166.2 537.4h0M166.3 503.6h0M166.5 539.2h0M166.5 536.9h0M166.5 545.2h0M166.6 505.2h0M166.7 510.2h0M166.8 537.7h0M166.8 541.5h0M166.8 541.4h0M166.8 499.2h0M167 536.7h0M167 546.2h0M167.1 542h0M167.1 542.6h0M167.2 536h0M167.4 544.7h0M167.7 544.8h0M167.7 537.6h0M167.7 541.1h0M167.8 538.6h0M168.2 538.7h0M168.4 513.2h0M168.4 538.9h0M168.5 541.9h0M168.5 537h0M168.7 553.7h0M168.8 540.3h0M169 536.2h0M169.3 548.2h0M169.5 536h0M169.7 538.2h0M169.8 537.7h0M170.1 541.1h0M170.1 553.5h0M170.1 513.5h0M170.2 544.8h0M170.2 536.9h0M170.5 537.7h0M170.5 541.7h0M170.5 549.8h0M170.6 550h0M170.7 546.8h0M170.9 537.6h0M170.9 540.8h0M171 505.1h0M171.2 511.9h0M171.2 515h0M171.2 548.4h0M171.3 547.2h0M171.3 545.3h0M171.6 540h0M171.7 536h0M171.7 550.6h0M171.7 541.3h0M171.9 539.9h0M171.9 540.9h0M171.9 539.8h0M172 536.5h0M172.4 540.8h0M172.5 544.1h0M172.5 513.6h0M172.5 537.9h0M172.5 541.3h0M172.6 542h0M172.6 510.7h0M173 540.4h0M173.1 540.2h0M173.4 548h0M173.4 540.7h0M173.5 548.5h0M173.6 538.8h0M173.6 536.5h0M173.6 536.9h0M173.6 538.4h0M173.8 537h0M173.9 538.7h0M174 537.7h0M174 543.8h0M174.1 545.4h0M174.2 550.9h0M174.2 541.5h0M174.2 537.4h0M174.2 543.2h0M174.3 547.1h0M174.3 543.2h0M174.4 510.3h0M174.5 542h0M174.6 503.4h0M174.6 515.2h0M174.7 541h0M175.1 514.6h0M175.1 536.9h0M175.5 512.4h0M175.6 545.8h0M175.6 503.8h0M175.7 514.3h0M175.7 535.9h0M175.7 543.7h0M175.8 537h0M175.9 542.4h0M175.9 539.1h0M176 537h0M176 537.4h0M176.3 546.3h0M176.3 512.2h0M176.4 536.7h0M176.5 539.6h0M176.5 538.1h0M176.8 512.4h0M176.8 513.8h0M177.1 545.3h0M177.3 547.4h0M177.3 538.8h0M177.4 536.5h0M177.5 535.8h0M177.5 513.6h0M177.9 504.2h0M177.9 536.3h0M178 538.6h0M178 539.6h0M178.1 542.3h0M178.1 510.8h0M178.2 513.3h0M178.3 536.8h0M178.4 540.2h0M178.5 509.8h0M178.6 539.7h0M179 513h0M179.2 505.9h0M179.2 505.8h0M179.3 504.7h0M179.6 508.1h0M179.7 511.6h0M179.8 512.7h0M179.8 539.9h0M179.9 535.7h0M180 510.8h0M180.1 514.8h0M180.1 510.6h0M180.1 540.3h0M180.5 508.7h0M180.5 542.6h0M180.6 514.6h0M180.7 535.7h0M180.7 504.5h0M180.9 507.9h0M181 541h0M181 514.6h0M181 542.6h0M181.2 535.7h0M181.3 515h0M181.4 536.8h0M181.4 510.2h0M181.4 506h0M181.7 543.6h0M181.7 508.6h0M181.7 536.6h0M181.7 542.1h0M181.8 535.4h0M182.1 538.6h0M182.1 513.8h0M182.2 502.7h0M182.6 514.5h0M182.6 512h0M183.2 497.3h0M183.3 546.9h0M183.4 536.9h0M183.6 513.8h0M183.7 542.4h0M183.7 505.2h0M183.8 514.6h0M183.9 507.6h0M184 514.7h0M184.2 549.8h0M184.4 515.2h0M184.5 543h0M184.5 541.1h0M184.6 540.8h0M184.7 545.1h0M185 509.9h0M185 509h0M185 535.9h0M185 511.3h0M185.1 506.8h0M185.1 542.9h0M185.2 508.3h0M185.2 509.2h0M185.5 512.6h0M185.6 537.7h0M185.6 508.6h0M185.6 512.4h0M185.7 536.6h0M185.7 543.4h0M185.9 502.4h0M185.9 535.8h0M186 514.1h0M186 513.4h0M186.2 540.7h0M186.3 547.1h0M186.5 542.4h0M186.7 540.2h0M186.8 513.4h0M186.9 538.4h0M186.9 540.8h0M187.2 513.3h0M187.4 502.7h0M187.6 513.2h0M187.9 544.9h0M188 510.7h0M188.1 506.4h0M188.2 512.5h0M188.3 497.6h0M188.5 510.7h0M188.7 541.6h0M188.7 502.9h0M189 545.4h0M189.1 509.8h0M189.1 506.8h0M189.2 510.2h0M189.4 540.4h0M189.4 511.2h0M189.6 541.5h0M189.6 539.7h0M189.6 514.8h0M189.8 511.4h0M189.9 513.5h0M190.1 511.9h0M190.1 508.6h0M190.1 504.3h0M190.1 512.2h0M190.2 501.7h0M190.2 509.1h0M190.6 509.8h0M190.7 510.4h0M190.8 548.8h0M190.8 512h0M190.9 515.1h0M191 511.3h0M191.2 514.1h0M191.3 536.9h0M191.4 497.9h0M191.5 508h0M191.8 538.3h0M191.8 514.3h0M191.9 537.5h0M192.2 535.5h0M192.3 538.5h0M192.4 545.1h0M192.6 510.3h0M192.6 514.3h0M192.9 500.1h0M193 540.4h0M193 538.5h0M193.2 509.1h0M193.2 504.9h0M193.2 536h0M193.3 510h0M193.4 514.1h0M193.5 509.2h0M193.5 502.9h0M193.7 536.8h0M193.7 535.6h0M193.8 502.6h0M193.9 511.6h0M194 509.1h0M194 509.8h0M194.1 513.2h0M194.1 507.6h0M194.2 545.3h0M194.3 507.4h0M194.4 537h0M194.4 505.2h0M194.8 510.1h0M194.9 509.7h0M194.9 513.5h0M195.3 499.5h0M195.3 537.4h0M195.4 513.1h0M195.5 511.4h0M195.6 535.6h0M195.6 514.1h0M195.7 514h0M195.8 509.7h0M195.8 514h0M196 509.5h0M196.1 511.5h0M196.1 507.3h0M196.2 505.9h0M196.2 512.2h0M196.6 506.7h0M196.8 506.4h0M196.8 514.9h0M197 513.4h0M197 511.6h0M197 540.3h0M197.4 542.8h0M197.5 506.7h0M197.6 509h0M197.8 512.5h0M197.9 503.8h0M197.9 542.6h0M197.9 510.1h0M198 509.2h0M198 513.2h0M198 510.3h0M198 511.3h0M198.2 501h0M198.4 536.4h0M198.5 514.6h0M198.6 514h0M198.7 506.4h0M198.7 514h0M198.8 508.1h0M198.9 514.2h0M198.9 538.9h0M199 497.7h0M199 501.5h0M199.1 510.5h0M199.1 513.4h0M199.2 508h0M199.3 540.2h0M199.3 505.4h0M199.4 511.2h0M199.4 513.5h0M199.5 509.8h0M199.6 507.4h0M199.7 506.5h0M199.8 513.4h0M199.8 507.7h0M199.9 501.2h0M199.9 513h0M200 508.2h0M200.1 515.2h0M200.3 546.7h0M200.4 502.1h0M200.4 510.8h0M200.5 509.2h0M200.5 508.4h0M200.5 512.1h0M200.7 512.6h0M200.8 497.4h0M200.8 542h0M200.8 542.2h0M200.9 514.9h0M201.1 513.8h0M201.3 508.8h0M201.3 509.3h0M201.4 536.7h0M201.4 507.2h0M201.5 514.3h0M201.7 512.6h0M201.8 514h0M201.8 513.1h0M201.9 510h0M202 540.7h0M202.1 540.4h0M202.2 499.2h0M202.6 535.7h0M202.6 501.4h0M202.7 536.5h0M202.7 502.5h0M202.7 510.1h0M203.1 537h0M203.3 512.2h0M203.6 545.2h0M203.7 538.4h0M203.9 553.4h0M204 507.4h0M204.1 507.7h0M204.1 509.5h0M204.1 508.6h0M204.1 540.8h0M204.1 547.4h0M204.2 508.5h0M204.8 552.8h0M204.8 545.6h0M205 543h0M205.1 549h0M205.3 504.6h0M205.4 547.5h0M205.7 537.1h0M205.8 544.6h0M205.9 503.1h0M206.1 543.6h0M206.3 538.9h0M206.4 545.3h0M206.5 512.4h0M206.6 546.1h0M206.6 514.6h0M206.8 538.1h0M206.9 513.4h0M207.2 550.3h0M207.3 514.5h0M207.4 537h0M207.4 537.7h0M207.5 548.5h0M207.5 539h0M207.5 512h0M207.5 535.6h0M207.8 509.9h0M207.8 514.8h0M207.9 539h0M207.9 544h0M208.1 513.5h0M208.3 539.5h0M208.4 541h0M208.4 538.4h0M208.8 535.7h0M208.8 536.1h0M208.8 539.4h0M209.1 536.4h0M209.4 542.3h0M209.5 511.1h0M209.7 538.6h0M209.7 538.3h0M209.7 542.7h0M209.7 542.5h0M209.8 550.4h0M209.9 540.2h0M210 547.5h0M210.2 537.2h0M210.2 535.7h0M210.3 536.4h0M210.3 538.5h0M210.3 552.1h0M210.5 540.4h0M210.6 538.1h0M210.6 547h0M210.6 536.5h0M210.6 538.2h0M210.9 512.1h0M211 544.7h0M211 540.9h0M211.1 536h0M211.1 539h0M211.2 546.8h0M211.3 535.4h0M211.4 513.4h0M211.4 535.9h0M211.6 553.6h0M211.9 511.2h0M212.1 546.1h0M212.1 547.4h0M212.5 535.5h0M212.5 536h0M212.6 538.7h0M212.6 508h0M212.7 539.1h0M212.7 513.4h0M212.9 535.4h0M213 544.4h0M213 536.5h0M213.3 511.5h0M213.4 540.4h0M213.4 513.1h0M213.8 538.9h0M213.9 512h0M214.1 537.9h0M214.2 535.7h0M214.4 540.7h0M214.5 537h0M214.6 536.2h0M214.8 506.6h0M214.8 541.4h0M214.9 503.1h0M215.1 539.9h0M215.1 538.7h0M215.3 512.7h0M215.4 513.8h0M215.5 537.9h0M215.7 542.8h0M215.7 537.9h0M215.8 543.6h0M215.9 498.6h0M215.9 537.4h0M215.9 538.8h0M216.2 547.3h0M216.4 539.9h0M216.5 539h0M216.6 549.5h0M216.6 535.5h0M216.6 506h0M216.7 515.3h0M216.9 510.1h0M216.9 537.2h0M217.1 549.4h0M217.1 539.8h0M217.3 549.2h0M217.6 536.9h0M217.6 552.9h0M217.6 510.4h0M217.7 502.8h0M217.7 513.3h0M217.9 536h0M218 514h0M218.1 550.3h0M218.2 547.1h0M218.2 545.2h0M218.4 541.7h0M218.5 536.6h0M218.7 539.7h0M218.7 540.8h0M218.8 511.6h0M218.8 542h0M218.8 514.1h0M219.1 513h0M219.2 537.9h0M219.3 512h0M219.6 538.1h0M219.6 512.9h0M219.6 503.2h0M219.7 514.1h0M219.9 512.1h0M220.1 515.1h0M220.2 548.6h0M220.2 508.7h0M220.3 546.2h0M220.4 544.9h0M220.4 537.2h0M220.6 536.3h0M221.1 514.7h0M221.2 510h0M221.3 542h0M221.4 542.5h0M221.5 545.2h0M221.6 538.8h0M221.6 536.2h0M221.7 545.1h0M221.8 514.4h0M221.8 538.5h0M221.8 509.3h0M221.9 505.6h0M222 535.5h0M222.1 535.6h0M222.1 542.7h0M222.2 535.6h0M222.3 540h0M222.4 544h0M222.6 535.9h0M222.9 545.8h0M223.1 535.7h0M223.2 543.1h0M223.2 505.5h0M223.4 511.8h0M223.4 509.2h0M223.5 537.3h0M223.6 505.5h0M223.6 542.2h0M223.7 538.2h0M223.7 542.8h0M223.8 536.4h0M223.8 513.6h0M223.9 536.1h0M223.9 535.5h0M224 545.3h0M224.1 548.1h0M224.1 507.7h0M224.2 543.9h0M224.2 536.8h0M224.3 509.5h0M224.8 514.4h0M224.8 511.8h0M224.9 538.6h0M224.9 543.3h0M224.9 514.4h0M224.9 512.2h0M225.1 537.3h0M225.1 545.6h0M225.1 549.7h0M225.2 543.7h0M225.6 544.1h0M225.6 536h0M225.7 537.7h0M225.7 535.9h0M225.9 543.7h0M226.1 537.4h0M226.2 542.2h0M226.2 536.2h0M226.3 548.2h0M226.3 539h0M226.4 537.8h0M226.5 546.5h0M226.6 535.5h0M226.6 552.1h0M226.7 514.9h0M226.9 537.9h0M226.9 509.8h0M226.9 546.8h0M226.9 548.6h0M227 536.5h0M227.1 502.8h0M227.1 509h0M227.3 536.6h0M227.4 510.7h0M227.5 514.7h0M227.5 510.1h0M227.6 511.4h0M227.6 537.4h0M227.6 512h0M227.8 510.7h0M228 541.4h0M228.1 542.6h0M228.1 512.7h0M228.2 539.4h0M228.2 511.7h0M228.5 548.9h0M228.5 544h0M228.7 500.9h0M228.8 546.5h0M229 512.8h0M229.2 553.8h0M229.4 508.7h0M229.5 541.2h0M229.5 514.6h0M229.7 536.7h0M229.7 538.8h0M229.7 503.4h0M229.7 509.3h0M229.8 511.4h0M229.9 514.6h0M229.9 535.6h0M230 507.4h0M230 542.4h0M230.1 513h0M230.2 544.5h0M230.2 540.8h0M230.3 500.8h0M230.3 509.9h0M230.6 509.1h0M230.7 511.7h0M230.8 505h0M230.9 549.2h0M231.1 544.3h0M231.1 536.3h0M231.1 512.5h0M231.2 504.4h0M231.3 508.8h0M231.3 540.2h0M231.4 512.7h0M231.4 536.7h0M231.4 512.3h0M231.4 511.5h0M231.6 511.4h0M232.1 514.4h0M232.3 506h0M232.3 514.4h0M232.5 512.2h0M232.5 507.9h0M232.6 512.8h0M232.6 509.9h0M232.9 508h0M232.9 506h0M233.1 506.5h0M233.1 536.6h0M233.3 513.5h0M233.3 507.3h0M233.3 512.7h0M233.5 511.2h0M233.8 541.7h0M234.1 541.2h0M234.3 512.2h0M234.3 507.8h0M234.5 511.4h0M234.7 514.2h0M234.8 542.3h0M234.8 503.8h0M234.8 513.7h0M235.5 507.6h0M235.6 504.5h0M235.7 514.2h0M235.8 500.8h0M235.9 511.1h0M236 510.1h0M236.1 512h0M236.2 505.5h0M236.2 502.3h0M236.3 514.6h0M236.4 540.4h0M236.5 542.7h0M236.6 514.2h0M236.7 513.1h0M236.8 501.4h0M236.9 535.9h0M237 507.3h0M237 508.1h0M237.2 546.5h0M237.3 510.7h0M237.4 513.7h0M237.6 509.4h0M237.7 511.6h0M237.7 514.4h0M237.8 512.1h0M238 511.9h0M238.1 509.4h0M238.1 514.4h0M238.2 505.8h0M238.4 511.2h0M238.4 513.6h0M238.5 509.5h0M238.5 500.6h0M238.7 514.4h0M238.7 508.7h0M238.8 539.1h0M238.8 538.3h0M238.8 511.7h0M238.9 502.5h0M238.9 545.3h0M238.9 513.8h0M239 540.2h0M239 506.9h0M239 510.8h0M239 538.3h0M239 510.8h0M239.1 539.4h0M239.1 507.9h0M239.2 535.9h0M239.3 536.4h0M239.4 540.8h0M239.4 511.9h0M239.4 510.6h0M239.6 538.1h0M239.7 543.7h0M239.8 514.5h0M239.8 537.9h0M239.9 506.7h0M240.1 549h0M240.2 539.8h0M240.4 505.8h0M240.4 542.6h0M240.5 539.6h0M240.6 543.6h0M240.8 544.7h0M241 536h0M241.1 511.8h0M241.1 540.8h0M241.1 539.3h0M241.3 509.6h0M241.4 542.5h0M241.4 540.8h0M241.4 538.8h0M241.4 502.3h0M241.5 539.8h0M241.6 535.4h0M241.8 536.7h0M241.8 509.3h0M241.9 506.5h0M242 535.6h0M242 512.8h0M242.3 545.1h0M242.3 545.9h0M242.6 535.9h0M243 536h0M243 514.4h0M243.1 514.7h0M243.1 541.6h0M243.1 501.2h0M243.1 512.5h0M243.4 509.6h0M243.4 542h0M243.5 542.6h0M243.6 509.5h0M243.8 514.9h0M244 511.3h0M244.1 512.1h0M244.1 512.3h0M244.3 510.4h0M244.4 512.6h0M244.8 512.9h0M245 540.3h0M245.2 536.4h0M245.4 545h0M245.8 505.3h0M245.8 543.9h0M245.8 543.9h0M246 502.1h0M246 537.2h0M246.1 543.7h0M246.1 508.3h0M246.1 505.7h0M246.2 513.4h0M246.4 536.4h0M246.4 535.5h0M246.5 541.1h0M246.5 508.4h0M247.1 535.7h0M247.2 512.2h0M247.2 540.5h0M247.2 541.8h0M247.2 535.9h0M247.4 512.7h0M247.4 511.7h0M247.5 508.2h0M247.8 514.3h0M247.8 541.6h0M247.9 544.7h0M248.2 505h0M248.3 539.4h0M248.4 513.5h0M248.4 535.9h0M248.4 514.1h0M248.7 507.7h0M248.8 510.1h0M248.8 513.7h0M249 508.9h0M249.2 515h0M249.3 503h0M249.5 511.9h0M249.6 538.2h0M249.7 510.2h0M249.8 512.8h0M249.8 511.8h0M249.9 505.4h0M250 512.1h0M250 510.4h0M250 513.1h0M250 506.2h0M250.2 506.9h0M250.2 541.8h0M250.3 509.3h0M250.4 508.7h0M250.4 498.9h0M250.4 505.3h0M250.8 511.4h0M250.9 509.5h0M250.9 509.1h0M250.9 512.9h0M251 515.3h0M251.1 536.7h0M251.1 539.2h0M251.1 514.6h0M251.3 540.9h0M251.3 502h0M251.6 514.7h0M251.7 514.1h0M251.8 504.3h0M251.8 515.1h0M251.9 548.2h0M252.2 507.4h0M252.3 509.9h0M252.4 543.4h0M252.5 510.8h0M252.8 536.1h0M252.8 535.9h0M253 540.9h0M253.3 541h0M253.3 539.8h0M253.5 536.6h0M253.6 542.9h0M253.6 536.5h0M253.6 537.1h0M253.7 514.5h0M253.7 515.3h0M253.8 502.6h0M253.8 514.3h0M254.1 538.4h0M254.2 540.8h0M254.3 503.2h0M254.4 514.9h0M254.6 511.1h0M254.9 539.1h0M255 541h0M255 513.6h0M255.1 535.5h0M255.3 513.9h0M255.8 539.3h0M256.1 509.3h0M256.5 544.4h0M256.6 508.9h0M256.7 510.5h0M256.8 539.9h0M257.2 508h0M257.4 543.4h0M257.7 501.4h0M257.7 515h0M257.7 537.6h0M257.8 536.7h0M257.8 550.3h0M257.9 508.6h0M257.9 544h0M258 546.8h0M258.4 514.1h0M258.5 550.3h0M258.6 509.5h0M258.6 513.1h0M258.8 540.4h0M258.9 540.8h0M259 544.9h0M259.2 514.8h0M259.2 513.3h0M259.2 545.5h0M259.3 505.6h0M259.3 535.7h0M259.5 535.7h0M259.6 537.1h0M259.7 551.2h0M259.7 536.4h0M259.8 551h0M259.8 509.6h0M259.9 539.2h0M260.2 541.8h0M260.2 514.5h0M260.4 541.9h0M260.4 546.4h0M260.5 515.2h0M260.5 545.1h0M260.5 537.7h0M260.8 543.6h0M260.9 541.3h0M261 515h0M261.1 539.4h0M261.2 513.5h0M261.2 536.5h0M261.2 538h0M261.3 538.9h0M261.4 540.9h0M261.4 535.7h0M261.4 508.1h0M261.7 540h0M261.8 513.7h0M262.2 542h0M262.2 540.4h0M262.3 539.1h0M262.5 536.8h0M262.9 544.9h0M263 542.1h0M263.2 538.3h0M263.3 514.3h0M263.4 540.7h0M263.5 537.2h0M263.6 544.1h0M263.6 535.9h0M263.6 512.1h0M263.6 542.7h0M263.6 510.3h0M263.8 514.1h0M263.8 514.3h0M263.9 514.4h0M263.9 551.3h0M264.3 511.3h0M264.3 546h0M264.4 537.6h0M264.7 539.3h0M264.9 538.9h0M264.9 515.3h0M265 512.1h0M265 544.3h0M265 542.1h0M265.1 537.2h0M265.2 540h0M265.2 545.5h0M265.3 542.6h0M265.3 537.9h0M265.4 508.1h0M265.5 539.2h0M265.5 506.1h0M265.6 543h0M265.7 538.4h0M265.8 552.8h0M266.1 543.4h0M266.2 537.5h0M266.2 548.3h0M266.3 539.2h0M266.4 537.1h0M266.6 514.6h0M266.8 511.6h0M267 515h0M267.1 538.4h0M267.5 537.7h0M267.5 541.5h0M267.7 508.3h0M267.7 512.3h0M268 506.6h0M268.1 515h0M268.2 543.7h0M268.4 500.8h0M268.4 541.6h0M268.5 537h0M268.6 512.7h0M268.7 515.3h0M268.7 537.2h0M268.8 541.9h0M268.8 512.7h0M268.9 512.1h0M268.9 550h0M268.9 512.6h0M269.1 506.3h0M269.1 507.5h0M269.2 508.4h0M269.3 536.5h0M269.3 506.7h0M269.3 538.4h0M269.4 538.1h0M269.5 514.5h0M269.5 542.1h0M269.7 513.5h0M270 508.7h0M270.1 538.9h0M270.2 506h0M270.2 542h0M270.3 507.4h0M270.3 535.7h0M270.6 514.8h0M270.9 539h0M271.2 536h0M271.3 507.8h0M271.4 544.1h0M271.4 503.3h0M271.5 512.7h0M271.6 507.3h0M271.6 514.2h0M271.8 508.3h0M271.8 541.3h0M271.8 544.4h0M271.8 508.3h0M271.9 505.1h0M272 512.5h0M272.4 540.8h0M272.5 500.5h0M272.7 540.4h0M272.8 509.8h0M272.9 543.2h0M272.9 545.3h0M273 507.2h0M273.1 543.2h0M273.2 511.5h0M273.3 504.5h0M273.3 508.7h0M273.4 514.6h0M273.4 537.6h0M273.5 503.3h0M274.2 537.3h0M274.3 537h0M274.6 513.5h0M274.7 512.5h0M274.8 537.8h0M274.9 513.4h0M275.1 535.7h0M275.4 500.6h0M275.4 536.1h0M275.4 506.2h0M275.5 544.2h0M275.6 514.2h0M275.6 514.4h0M275.7 546.3h0M275.8 510.8h0M275.8 540.3h0M275.8 505h0M275.9 536.9h0M275.9 505.2h0M275.9 510.6h0M276.1 510.2h0M276.2 540h0M276.3 514.6h0M276.4 515.1h0M276.4 536.5h0M276.5 508h0M276.6 538.7h0M276.8 510.9h0M277.2 514.3h0M277.6 510.5h0M277.7 510.9h0M277.7 512h0M277.8 538.1h0M277.8 511.3h0M277.8 536.6h0M278 512.8h0M278 536.6h0M278 543.9h0M278 536.5h0M278.2 544.3h0M278.4 543.6h0M278.5 535.8h0M278.6 537.1h0M279 501h0M279.1 512.6h0M279.1 513h0M279.2 512.7h0M279.2 510.3h0M279.3 514.6h0M279.6 512.3h0M279.6 509h0M279.6 541.5h0M279.6 513.7h0M279.7 515.2h0M279.7 510.5h0M279.9 536.8h0M280 536.4h0M280 510h0M280 514.8h0M280.2 503.8h0M280.3 536.4h0M280.4 512.2h0M280.4 509.9h0M280.4 510.3h0M280.5 539.5h0M280.5 538.3h0M280.8 538.8h0M280.9 540.1h0M281.2 503.9h0M281.2 536.4h0M281.3 543.8h0M281.3 537.3h0M281.4 536.9h0M281.4 511.7h0M281.5 507.7h0M281.6 510.4h0M282.3 512.9h0M282.7 511.8h0M282.7 505.5h0M282.8 511.6h0M282.9 537h0M283.1 542.5h0M283.1 539h0M283.1 509h0M283.2 509.2h0M283.6 514.5h0M283.7 513.9h0M283.8 542.6h0M283.8 514.1h0M283.9 513.3h0M284 546.4h0M284.1 514.1h0M284.3 509.8h0M284.3 535.6h0M284.6 513.2h0M284.9 504.1h0M284.9 511.5h0M285.1 515.2h0M285.2 497.5h0M285.2 504.7h0M285.2 501.8h0M285.4 511.4h0M285.5 536.4h0M285.5 508.2h0M285.5 514.6h0M285.6 539h0M285.6 512.2h0M285.7 545.4h0M285.7 540.1h0M285.9 510h0M286 545.5h0M286 548.8h0M286 509.7h0M286.1 506.2h0M286.1 514.4h0M286.1 511.6h0M286.2 535.7h0M286.2 513.1h0M286.4 514.4h0M286.4 506.7h0M286.4 501.4h0M286.5 515.2h0M286.5 514.1h0M286.5 513.2h0M286.5 538.3h0M286.5 512.4h0M286.8 502.7h0M287 512h0M287.1 540.4h0M287.2 513.5h0M287.3 540.3h0M287.3 505.3h0M287.4 514.2h0M287.8 513.7h0M287.9 511.2h0M288 510h0M288 509.6h0M288.1 535.9h0M288.4 502h0M288.6 505.6h0M288.7 509.9h0M288.7 535.5h0M289.1 539.3h0M289.1 540.9h0M289.2 506.7h0M289.4 513.2h0M289.6 512.6h0M289.6 543.7h0M289.8 514.5h0M289.8 542h0M289.8 541.8h0M289.9 512.7h0M289.9 540.9h0M290 514.8h0M290 543.8h0M290.2 512.5h0M290.2 507.8h0M290.3 506.7h0M290.6 536.3h0M290.7 538.2h0M290.7 515h0M290.8 511.5h0M290.9 510.8h0M291 543.4h0M291.1 510.8h0M291.1 513.3h0M291.2 535.6h0M291.3 537.1h0M291.3 538.5h0M291.4 510.3h0M291.4 537.1h0M291.7 537.4h0M291.7 549.7h0M291.9 548h0M291.9 515.2h0M291.9 509h0M292.3 539.2h0M292.3 537.7h0M292.5 508.6h0M292.8 552.7h0M292.8 538.7h0M292.8 540.6h0M292.8 508.8h0M293 547.2h0M293.3 547.5h0M293.4 514.9h0M293.5 536.1h0M293.6 539.6h0M293.7 506.9h0M293.7 538.3h0M293.9 509.5h0M294 540.1h0M294.1 513.9h0M294.1 542.2h0M294.4 515.1h0M294.4 546.4h0M294.4 548.8h0M294.5 542.7h0M294.6 539.5h0M294.7 536.1h0M294.9 509h0M295.2 552.2h0M295.2 537.9h0M295.3 540.3h0M295.5 537.8h0M295.6 543h0M295.7 544.2h0M295.8 510.9h0M295.9 541.7h0M296 539.8h0M296 545.1h0M296.2 537h0M296.2 540.2h0M296.2 514.3h0M296.3 538.8h0M296.4 539.9h0M296.5 548.5h0M296.5 541.7h0M296.6 511.7h0M296.6 539.5h0M296.6 536.1h0M296.7 515.3h0M297.2 536.5h0M297.2 512.2h0M297.2 536.3h0M297.2 514.5h0M297.4 542.7h0M297.4 537.8h0M297.5 543.8h0M297.6 515.2h0M297.7 542.3h0M297.8 539h0M297.8 545.6h0M297.8 537.9h0M298.1 505.7h0M298.4 541.9h0M298.4 508.9h0M298.4 536.4h0M298.6 536.5h0M298.6 507.8h0M298.7 536.1h0M298.7 539.4h0M298.9 541.5h0M299.2 512.2h0M299.2 540.9h0M299.3 502.6h0M299.5 535.4h0M299.5 539.1h0M299.5 541h0M299.5 540.2h0M299.9 539h0M300.1 544.5h0M300.1 538.8h0M300.6 544.7h0M300.6 539.6h0M301 545.8h0M301 509.8h0M301 537.7h0M301.2 515h0M301.2 535.7h0M301.3 551.9h0M301.3 536.2h0M301.4 553.6h0M301.5 538.4h0M301.5 535.8h0M301.6 536.3h0M301.6 544.6h0M301.8 514.7h0M301.8 509.6h0M301.9 513.6h0M302 550.6h0M302 515.1h0M302 542.5h0M302.1 544.5h0M302.1 547h0M302.1 543.3h0M302.1 541.2h0M302.1 538.5h0M302.3 513.6h0M302.3 546.2h0M302.3 535.5h0M302.4 514.1h0M302.5 515.3h0M302.6 511.8h0M302.6 507.9h0M302.6 513.6h0M302.8 540.6h0M303 514.8h0M303.1 543h0M303.1 535.9h0M303.3 543.7h0M303.3 515.2h0M303.4 539.3h0M303.4 547h0M303.4 509.9h0M303.9 536.8h0M304 508.6h0M304 538.9h0M304 537.2h0M304.2 540.6h0M304.3 540.4h0M304.3 541.4h0M304.4 535.5h0M304.4 514.6h0M304.5 536.1h0M304.5 513.4h0M304.6 512.3h0M304.6 506.7h0M304.7 540.5h0M304.8 509.4h0M305 539.5h0M305.1 538.1h0M305.4 537.4h0M305.6 543.7h0M305.6 538.4h0M305.6 549.1h0M305.6 507.9h0M305.6 537h0M305.6 509.8h0M305.7 513.1h0M305.8 537.3h0M305.8 536.8h0M305.8 546.2h0M305.9 542.7h0M305.9 503.9h0M306 535.6h0M306.3 548.6h0M306.6 536.3h0M306.7 507.5h0M306.8 536.8h0M306.8 514h0M307 540.7h0M307.3 513.1h0M307.7 543.4h0M307.8 506.1h0M308 541.3h0M308.5 540.3h0M308.5 537.1h0M308.6 538.5h0M308.6 537.8h0M308.6 515.1h0M308.8 536.1h0M308.9 541.1h0M309 535.8h0M309.4 538.5h0M309.5 543.4h0M309.6 509.1h0M309.7 514h0M309.7 508.2h0M309.7 512.5h0M309.8 536.2h0M309.9 545h0M310 515.1h0M310.4 538h0M310.5 515.1h0M310.5 541.6h0M310.7 545.1h0M310.9 549.9h0M310.9 511.3h0M310.9 511.3h0M311 544h0M311 507.6h0M311.1 504.5h0M311.2 542.3h0M311.2 514.6h0M311.5 538.9h0M311.5 548.8h0M311.5 535.7h0M311.5 503.8h0M311.6 536.5h0M311.6 513.7h0M311.7 513.3h0M311.7 512.4h0M311.9 538h0M312 510.9h0M312 507.9h0M312.1 505.2h0M312.2 536.9h0M312.4 538.5h0M312.5 511.5h0M312.6 504.5h0M312.6 536.8h0M312.6 508.4h0M312.7 540.3h0M312.8 513.5h0M312.8 537.4h0M313.1 510.6h0M313.2 536.6h0M313.2 539.7h0M313.2 514.1h0M313.3 538.2h0M313.3 537.1h0M313.4 544.9h0M313.5 545h0M313.6 536.1h0M313.6 547.4h0M313.7 542h0M314 514h0M314 537.7h0M314 509.2h0M314.2 545.1h0M314.2 546.9h0M314.3 511.2h0M314.4 511h0M314.5 505.4h0M314.6 514.5h0M314.7 507.5h0M314.7 513.1h0M314.9 513h0M315.1 509.7h0M315.2 505.5h0M315.3 541h0M315.4 513.6h0M315.5 543.1h0M315.5 537.6h0M315.6 513.3h0M315.8 512.8h0M315.8 500.3h0M316 535.7h0M316 507.7h0M316.2 510.4h0M316.4 510.4h0M316.6 537.1h0M316.6 505.9h0M316.7 535.7h0M316.8 536.4h0M316.9 542.1h0M316.9 514.8h0M317 536.3h0M317.1 507.4h0M317.1 497.3h0M317.1 542.3h0M317.2 500.6h0M317.4 508.7h0M317.5 509.4h0M317.6 505.8h0M317.7 509.6h0M317.8 508.7h0M318 541.5h0M318 512h0M318.2 507.2h0M318.4 513.1h0M318.4 513.7h0M318.8 537h0M318.9 498.6h0M318.9 509.1h0M319 537.6h0M319 512.4h0M319.1 545.2h0M319.2 510.8h0M319.3 509.8h0M319.3 535.6h0M319.3 513.6h0M319.3 514.4h0M319.4 545.7h0M319.5 537.6h0M319.5 546.4h0M319.6 539.4h0M319.8 497.7h0M319.8 511.8h0M319.9 504.3h0M319.9 513.8h0M319.9 504.6h0M319.9 514.8h0M320 507.8h0M320 512.1h0M320 500.7h0M320 511.3h0M320.1 508.6h0M320.1 538.2h0M320.2 535.7h0M320.2 538.2h0M320.2 512.7h0M320.3 511.4h0M320.6 513.3h0M321 537.4h0M321 515.2h0M321 506.9h0M321.3 510.7h0M321.3 509.6h0M321.5 550.5h0M321.6 509.5h0M321.7 537h0M321.7 511.6h0M321.7 538.6h0M321.8 501.3h0M321.9 537.1h0M321.9 504.8h0M322 535.8h0M322 550.4h0M322.1 509.1h0M322.2 547.8h0M322.2 538h0M322.5 509.4h0M322.5 512.1h0M322.6 511.2h0M322.6 536h0M322.7 512.8h0M322.7 540.9h0M322.7 510.1h0M322.8 536.5h0M323 537.1h0M323 535.7h0M323.1 507.8h0M323.2 511.2h0M323.2 503h0M323.3 513.8h0M323.3 515.3h0M323.3 497.7h0M323.3 506.2h0M323.3 511.6h0M323.5 544.6h0M323.6 514.8h0M323.9 511.5h0M323.9 503.2h0M323.9 512.5h0M324 539.9h0M324.1 506.1h0M324.1 509.7h0M324.2 512.3h0M324.2 497.2h0M324.2 511h0M324.2 513.6h0M324.3 512h0M324.4 503.3h0M324.5 539.2h0M324.5 515h0M324.6 538.1h0M324.6 539.9h0M324.6 509.8h0M324.6 551.3h0M324.8 498.6h0M324.8 536.9h0M324.9 546.2h0M325 536.4h0M325.4 537.8h0M325.6 537.3h0M325.6 510.5h0M325.7 540.7h0M325.8 505.8h0M325.8 536.2h0M325.8 504.1h0M326.2 535.8h0M326.3 504.3h0M326.3 512.6h0M326.4 506.8h0M326.5 549.8h0M326.5 515.1h0M326.5 541.4h0M326.7 513.3h0M326.9 513.5h0M327.2 545.2h0M327.7 500.4h0M327.9 512.6h0M327.9 536.5h0M328.1 511.8h0M328.1 542.9h0M328.2 505.8h0M328.3 510.1h0M328.4 509.3h0M328.6 505.5h0M328.8 506.7h0M328.9 547.8h0M329.1 536.8h0M329.2 509.9h0M329.4 507.6h0M329.5 508.4h0M329.5 540.3h0M329.7 505.7h0M329.8 514.5h0M329.9 544.6h0M330.2 508.7h0M330.2 514.6h0M330.3 545.4h0M330.3 506.6h0M330.4 540.9h0M330.5 544.9h0M330.7 539.3h0M330.8 540.9h0M331 506.2h0M331.1 509h0M331.1 545.1h0M331.1 538.4h0M331.3 541.8h0M331.3 537.4h0M331.4 536.9h0M331.4 513h0M331.4 513h0M331.5 506.3h0M331.5 544.2h0M331.7 512.3h0M331.7 536.2h0M331.9 507.8h0M332 513.7h0M332.1 510h0M332.1 539.4h0M332.2 506.3h0M332.5 537.8h0M332.5 503.7h0M332.6 514.1h0M333.1 545.5h0M333.3 538.8h0M333.3 513.1h0M333.4 512.9h0M333.4 512.8h0M333.6 503.4h0M333.7 537.2h0M333.9 547.6h0M334 514.1h0M334 514.5h0M334.1 538.4h0M334.1 536.7h0M334.3 512.4h0M334.5 504.2h0M334.5 540.2h0M334.7 512.9h0M334.7 502.8h0M334.8 507.6h0M334.9 536h0M335 547.2h0M335.1 540.6h0M335.1 512.5h0M335.2 536.3h0M335.4 515.3h0M335.4 506.5h0M335.4 535.9h0M335.5 507.4h0M335.6 497.8h0M335.6 514.4h0M335.8 512.8h0M335.8 546.2h0M336.2 513h0M336.3 508.4h0M336.4 535.5h0M336.4 546.8h0M336.7 505.5h0M336.7 510.6h0M336.8 506.1h0M336.9 535.5h0M336.9 538.3h0M337 511.8h0M337 509.9h0M337.1 511h0M337.1 511h0M337.2 540.8h0M337.3 513.9h0M337.3 514.2h0M337.5 538.6h0M337.5 510.6h0M337.5 546.3h0M337.6 507.7h0M337.7 506.6h0M337.7 536.9h0M337.8 542.4h0M337.8 511h0M337.9 543.6h0M337.9 542.1h0M338.1 506.7h0M338.1 505.6h0M338.2 536.8h0M338.4 541.4h0M338.4 540.5h0M338.5 540.8h0M338.6 504.8h0M339 536h0M339.2 507.3h0M339.4 536.4h0M339.7 507h0M339.7 537.9h0M339.7 535.9h0M339.9 535.6h0M340 500h0M340 535.7h0M340.2 543.6h0M340.3 511.1h0M340.5 536h0M340.7 543.8h0M340.8 544.1h0M341.1 505.4h0M341.1 538.2h0M341.1 497.4h0M341.2 507.1h0M341.3 539.2h0M341.3 502.3h0M341.3 544h0M341.4 535.8h0M341.6 509.3h0M341.6 542.8h0M341.7 513.9h0M341.8 506.8h0M341.9 541.7h0M341.9 541.7h0M342.2 536.8h0M342.2 541.4h0M342.2 539h0M342.3 506.8h0M342.3 513.4h0M342.4 511.5h0M342.5 543.8h0M342.5 541.4h0M342.5 539.4h0M342.6 535.9h0M342.8 507.7h0M342.9 536.3h0M342.9 513.3h0M343 546.2h0M343.4 541.1h0M343.4 515.3h0M343.4 514.6h0M343.5 537.5h0M343.5 540.5h0M343.6 513.4h0M343.7 536.7h0M343.7 542.3h0M343.8 535.4h0M344 547.1h0M344 543.4h0M344.7 512.6h0M344.8 539.7h0M344.8 507.3h0M344.8 538.5h0M344.8 514.9h0M345 539.1h0M345 505.2h0M345.1 510.7h0M345.1 511.6h0M345.2 535.6h0M345.2 545.3h0M345.3 538.4h0M345.4 539.9h0M345.5 513.7h0M345.6 535.7h0M345.6 512.9h0M345.6 553.7h0M345.8 514.6h0M345.9 551.7h0M345.9 553.2h0M346 545.1h0M346.1 540.5h0M346.2 514.5h0M346.2 536.2h0M346.2 536.9h0M346.2 503.3h0M346.3 540.6h0M346.4 542.9h0M346.5 551h0M346.7 537.2h0M346.7 535.4h0M346.7 540.9h0M346.8 511.9h0M346.9 535.7h0M346.9 537.6h0M347 540.8h0M347 540.3h0M347.1 500.4h0M347.1 551.1h0M347.1 542.5h0M347.3 547.5h0M347.7 512.5h0M348 540.6h0M348 537.1h0M348.3 509h0M348.4 535.6h0M348.5 545.9h0M348.6 510h0M348.6 510.5h0M349 509.6h0M349.2 547.5h0M349.2 538.5h0M349.3 512.4h0M349.4 536.2h0M349.5 542.6h0M349.6 535.9h0M349.6 538.6h0M349.7 539.8h0M349.7 543.9h0M349.9 503.3h0M350 510.7h0M350 508.9h0M350 538.6h0M350.2 543.4h0M350.3 505.6h0M350.5 545.1h0M350.5 540.7h0M350.6 536.5h0M350.6 507.2h0M350.8 510h0M350.9 545.6h0M351 541.1h0M351.2 512.5h0M351.5 504.1h0M351.5 510.4h0M351.5 513.9h0M351.6 536.4h0M351.6 513.6h0M351.7 535.8h0M351.7 535.9h0M351.8 508.3h0M351.9 511.5h0M352.1 546h0M352.1 539.3h0M352.2 547.2h0M352.3 535.6h0M352.3 513.2h0M352.4 538.1h0M352.7 505.2h0M352.9 511.3h0M352.9 514.9h0M353 514.1h0M353 540h0M353 513.3h0M353.2 510.7h0M353.3 510.2h0M353.3 511.5h0M353.3 552.9h0M353.5 513.6h0M353.7 537.1h0M353.8 513h0M353.8 511.6h0M353.8 540.6h0M353.9 541.1h0M353.9 502.3h0M354 539.9h0M354.1 506.9h0M354.2 500.9h0M354.2 504.3h0M354.2 536.7h0M354.3 539.1h0M354.3 514.9h0M354.3 511.5h0M354.6 543.6h0M354.8 512.6h0M354.8 542h0M354.8 512.6h0M354.9 548.5h0M355 514.4h0M355 511.9h0M355.1 548.9h0M355.1 537.1h0M355.2 537.3h0M355.3 512.3h0M355.3 512h0M355.4 536.2h0M355.5 505.5h0M355.6 514.6h0M355.6 537h0M355.7 536.9h0M355.7 538h0M355.8 542h0M355.9 511.8h0M356 511h0M356 501.9h0M356.3 515.4h0M356.3 537.2h0M356.3 543.2h0M356.3 545.4h0M356.4 536.4h0M356.4 514.2h0M356.6 513.6h0M356.8 511.4h0M356.8 535.6h0M356.9 538.1h0M357 514.6h0M357.2 539.5h0M357.4 542h0M357.4 536.7h0M357.4 512.5h0M357.6 537.2h0M357.8 535.6h0M358.1 537h0M358.5 512.3h0M358.5 539.3h0M358.8 513.7h0M358.9 503.3h0M358.9 513.9h0M358.9 512.7h0M358.9 511.5h0M358.9 535.5h0M359 515.1h0M359 515.2h0M359.2 538.5h0M359.5 513h0M359.6 541h0M359.7 504.8h0M360 515.1h0M360 510.4h0M360.1 509.2h0M360.1 541.3h0M360.3 539.2h0M360.4 509.3h0M360.5 538.9h0M360.8 540h0M360.8 537h0M360.9 515h0M361.1 548.1h0M361.1 507.9h0M361.1 543.2h0M361.2 535.4h0M361.2 540.6h0M361.6 508.7h0M361.8 548.2h0M361.8 538.2h0M362.1 536.6h0M362.2 535.9h0M362.4 547.3h0M362.4 513.5h0M362.5 544.5h0M362.6 512.5h0M362.6 537h0M362.8 509.4h0M362.9 540.6h0M362.9 535.6h0M363 514.6h0M363.2 515.1h0M363.3 536.2h0M363.4 500.2h0M363.7 514.4h0M363.7 538.8h0M363.8 549.9h0M364.2 514.7h0M364.2 514.8h0M364.3 502.6h0M364.3 538.9h0M364.3 544.1h0M364.3 541.3h0M364.5 511.7h0M364.5 546.1h0M364.5 536h0M364.5 500.9h0M364.7 540.1h0M364.7 513.2h0M364.9 540.3h0M364.9 512.6h0M365 510.3h0M365 539.4h0M365.1 540h0M365.5 536.1h0M365.5 511.4h0M365.6 539.8h0M365.8 508.7h0M366.3 537.5h0M366.4 513.8h0M366.8 515h0M367 515h0M367.2 506h0M367.2 506.3h0M367.4 501.5h0M367.5 510.6h0M367.6 511.6h0M367.7 538.9h0M367.8 512h0M367.8 513.5h0M367.8 504.3h0M368.1 507.2h0M368.1 549.2h0M368.1 510.3h0M368.3 548.9h0M368.6 511.6h0M368.7 500.7h0M368.7 506.9h0M368.8 506.9h0M368.9 538.7h0M369 514.7h0M369.1 546.7h0M369.1 505.5h0M369.2 511.7h0M369.4 538.8h0M369.4 511.2h0M369.5 500.6h0M370 513.9h0M370 498.4h0M370.1 513.8h0M370.1 515.3h0M370.5 515h0M370.6 514.5h0M370.7 510.6h0M370.7 505.3h0M370.8 542.6h0M370.9 504.4h0M370.9 514.1h0M371.1 540.1h0M371.4 511.2h0M371.4 505.2h0M371.5 536h0M371.5 511.3h0M371.6 511.1h0M371.7 514.7h0M371.7 504h0M371.7 512.5h0M371.8 509.1h0M372.1 514.5h0M372.2 515.1h0M372.3 511.5h0M372.4 506.3h0M372.4 514.4h0M372.4 509.3h0M372.4 506h0M372.5 505.8h0M372.5 512h0M372.7 514.2h0M372.8 498.4h0M373 513.6h0M373 506.7h0M373.1 514h0M373.1 539.5h0M373.2 509.5h0M373.3 513.6h0M373.4 515.1h0M373.5 511.7h0M373.6 506.5h0M373.7 544.3h0M373.8 508h0M374.1 513.7h0M374.1 509.4h0M374.1 514.9h0M374.3 508.1h0M374.4 515.3h0M374.6 538.8h0M374.6 503.6h0M374.7 539.1h0M374.7 541h0M374.7 538.6h0M374.7 537.8h0M374.8 538.7h0M374.8 506.4h0M374.9 505.4h0M374.9 515.2h0M374.9 514.2h0M375 537.3h0M375 538.4h0M375.1 513.7h0M375.3 535.5h0M375.4 514.8h0M375.5 514.4h0M375.6 514.9h0M375.7 512.2h0M375.9 515.1h0M375.9 512.7h0M376 535.6h0M376.2 506.9h0M376.3 539.3h0M376.5 514.8h0M376.8 507h0M377 543.5h0M377 508.4h0M377.1 514.3h0M377.4 509.9h0M377.7 536.2h0M377.7 537.5h0M377.9 539.5h0M378.1 540.9h0M378.4 504.1h0M378.4 509.9h0M378.4 544.4h0M378.4 538.6h0M378.4 535.9h0M378.5 538.5h0M378.6 501.5h0M378.6 536.1h0M379.1 543.1h0M379.1 508.7h0M379.3 504.5h0M379.4 514.5h0M379.5 538.4h0M379.5 537.6h0M379.6 535.8h0M379.6 509.2h0M379.7 541.1h0M379.7 539.3h0M379.8 513.3h0M379.8 511.2h0M380 536.2h0M380.3 538.3h0M380.5 514.7h0M380.5 512.9h0M380.7 508.2h0M381 513h0M381.1 514.4h0M381.3 511.9h0M381.8 541.2h0M381.8 542.1h0M381.8 535.6h0M381.9 541.1h0M381.9 541.1h0M382.2 539.7h0M382.2 538.6h0M382.7 546.6h0M382.7 537.7h0M383.6 506.4h0M383.7 535.8h0M383.8 507.8h0M384 539.6h0M384.1 511.9h0M384.3 510.2h0M384.3 537.7h0M384.3 547.7h0M384.4 547.6h0M384.4 539.1h0M384.5 543.3h0M384.5 512.9h0M384.7 513.6h0M384.7 510.9h0M385.1 541.1h0M385.3 507.9h0M385.5 507.3h0M385.5 502.5h0M385.6 512.2h0M385.6 513.6h0M385.9 509.5h0M386 538.4h0M386 510.3h0M386 537.2h0M386.2 511.9h0M386.2 543.5h0M386.2 509.6h0M386.5 536.6h0M386.5 536.3h0M386.6 514.3h0M386.7 505.7h0M387.1 548.4h0M387.1 502.5h0M387.1 539.4h0M387.1 513.6h0M387.2 537.9h0M387.5 537h0M387.6 515h0M388 514.9h0M388.2 547.1h0M388.2 514.2h0M388.3 543h0M388.4 513.8h0M388.5 513.3h0M388.7 539.8h0M388.8 542.1h0M388.8 510.4h0M388.8 537.2h0M389.2 509.4h0M389.5 543.2h0M389.6 542.3h0M389.6 510.9h0M389.6 535.4h0M389.7 544.7h0M389.7 502.5h0M389.8 535.9h0M389.9 536h0M389.9 515h0M389.9 538h0M390 500.5h0M390.1 535.8h0M390.1 539.1h0M390.1 535.9h0M390.3 508.2h0M390.3 542.4h0M390.4 541.5h0M390.5 508.7h0M390.5 546.4h0M390.6 508.3h0M390.6 539.5h0M390.7 511.1h0M390.9 540h0M391 509.4h0M391 510.1h0M391 539.2h0M391 543.1h0M391 537.7h0M391 540.6h0M391.6 540.9h0M391.8 514.2h0M391.9 538.1h0M392.1 542h0M392.1 535.4h0M392.1 552.8h0M392.2 509.1h0M392.3 536.4h0M392.3 536.2h0M392.4 539h0M392.4 543.6h0M392.4 552.7h0M392.7 511.9h0M392.8 551.6h0M393.1 536h0M393.5 510.6h0M393.6 536.9h0M393.7 509.1h0M393.7 513.3h0M393.7 541h0M394 548.9h0M394.2 509h0M394.3 536.7h0M394.5 540.3h0M394.8 542.2h0M394.9 542.1h0M395 508.5h0M395.1 513.7h0M395.2 549.2h0M395.3 548.2h0M395.3 542.7h0M395.4 511.9h0M395.7 546h0M395.7 514.3h0M396.1 514.8h0M396.1 506.3h0M396.2 536.3h0M396.2 537.6h0M396.4 539.6h0M396.4 536.1h0M396.5 538.6h0M396.6 548.7h0M396.6 540.6h0M396.7 544.9h0M396.8 544h0M396.9 510.3h0M396.9 542.2h0M397 539.6h0M397 539h0M397.2 540.2h0M397.2 538.4h0M397.5 542.4h0M397.6 547.6h0M397.7 536.1h0M397.8 539h0M397.9 510.8h0M398 539.4h0M398 513.7h0M398 546.1h0M398.1 544.1h0M398.1 538.2h0M398.2 540.7h0M398.3 537h0M398.3 541.3h0M398.4 537.7h0M398.4 541.5h0M398.6 541.4h0M398.7 535.9h0M398.8 536h0M398.8 553.1h0M398.9 551.3h0M399 512.9h0M399 538.5h0M399 512.1h0M399.1 514.1h0M399.2 536.5h0M399.2 537h0M399.2 540.2h0M399.4 539.5h0M399.5 509h0M399.7 535.5h0M399.7 541h0M399.7 545.1h0M399.7 541.7h0M399.8 545.6h0M400.1 536.8h0M400.4 541.4h0M400.6 515.1h0M401.1 537h0M401.1 535.5h0M401.2 540.4h0M401.2 537.9h0M401.4 535.5h0M401.4 511.5h0M401.5 540.6h0M401.7 514.4h0M401.8 541.8h0M401.8 536.9h0M401.8 551.4h0M401.9 512.9h0M402 544.7h0M402 537.4h0M402.1 513.2h0M402.4 539.3h0M402.4 547.1h0M402.5 503.8h0M402.7 509h0M402.7 539.9h0M402.7 535.5h0M402.8 544.8h0M402.9 537.7h0M403 513.4h0M403.1 513.7h0M403.1 535.8h0M403.4 536.3h0M403.5 508.5h0M403.6 504.5h0M404 513.4h0M404.2 509.7h0M404.5 511h0M404.5 510.2h0M404.6 544.3h0M404.7 542.2h0M404.9 504h0M405.1 511.1h0M405.3 513h0M405.4 502.3h0M405.6 515.3h0M405.6 537.4h0M405.8 536.2h0M406 536.2h0M406 512.1h0M406.1 539.9h0M406.2 514.5h0M406.2 539.3h0M406.3 549.2h0M406.5 544.1h0M406.7 514.4h0M406.7 538.2h0M406.8 514h0M406.9 543h0M406.9 513.1h0M406.9 545.2h0M407.1 535.5h0M407.3 536.7h0M407.3 502.3h0M407.3 537.5h0M407.4 540.5h0M407.5 514.4h0M407.7 510.2h0M408 536.9h0M408 540.8h0M408.1 501.8h0M408.1 504.9h0M408.2 513.9h0M408.3 507.1h0M408.4 510.8h0M408.7 505.7h0M408.8 514.4h0M408.8 513.9h0M409 544.2h0M409.1 546.5h0M409.1 544.2h0M409.3 511.2h0M409.4 505.4h0M409.5 514h0M409.8 503.2h0M409.9 535.9h0M410 511.3h0M410.1 511.8h0M410.3 513.3h0M410.4 514.9h0M410.6 535.7h0M410.6 546h0M410.6 511.4h0M410.8 537.9h0M411.1 545.5h0M411.1 512.8h0M411.3 542.8h0M411.4 536.7h0M411.5 504.6h0M411.6 512.5h0M411.6 510.6h0M411.7 514.8h0M411.8 506.8h0M411.9 541.3h0M412.1 537.6h0M412.1 514.9h0M412.2 514.1h0M412.3 512.9h0M412.5 512h0M412.5 539.4h0M412.6 510.4h0M412.8 541.3h0M412.8 544.5h0M412.8 543.8h0M412.9 514.3h0M413 539.4h0M413 510.7h0M413.2 535.8h0M413.3 514.3h0M413.3 507.9h0M413.6 512.1h0M413.6 542.5h0M413.7 548.3h0M414 513.2h0M414.2 543h0M414.5 539h0M414.5 543.2h0M414.6 501h0M414.7 538.6h0M414.7 546.3h0M414.8 505.9h0M414.9 546.2h0M414.9 498.1h0M415.2 539.4h0M415.3 540.9h0M415.4 513.4h0M415.4 508.2h0M415.4 501.6h0M415.5 536h0M415.6 507.6h0M415.8 514.5h0M415.8 535.7h0M415.9 536.8h0M415.9 536.9h0M416 542.7h0M416.1 539h0M416.3 539.5h0M416.6 550.3h0M416.7 512.8h0M416.8 504.4h0M416.8 514.2h0M416.9 511.1h0M416.9 512.3h0M417 535.5h0M417 537h0M417.1 540.1h0M417.1 535.4h0M417.1 542.4h0M417.2 537.5h0M417.2 538.3h0M417.3 503.9h0M417.3 511.9h0M417.8 541.8h0M417.8 540.4h0M417.9 514h0M417.9 545.3h0M418 513.1h0M418.1 544h0M418.1 541h0M418.4 550.9h0M418.4 537.6h0M418.6 543.2h0M418.7 508.7h0M418.8 514h0M419.2 537.8h0M419.4 540.6h0M419.4 538.4h0M419.5 510.4h0M419.5 511.9h0M419.7 536h0M419.7 538.9h0M419.8 537.6h0M419.8 546h0M420 537h0M420 514.8h0M420.2 536.8h0M420.3 503.6h0M420.3 537.8h0M420.4 514.9h0M420.5 536.3h0M420.6 512.2h0M420.6 506.2h0M420.8 511.2h0M420.9 510.2h0M420.9 514.4h0M420.9 539.5h0M421 498.9h0M421.1 510.7h0M421.2 513.9h0M421.4 536.6h0M421.4 511.1h0M421.6 537.3h0M421.6 538.9h0M421.8 537.3h0M421.9 544.8h0M422.3 537.7h0M422.5 547.5h0M422.6 509.2h0M422.6 514.1h0M422.7 553.2h0M422.9 513.7h0M423 514.4h0M423.2 511.5h0M423.2 537.8h0M423.2 538.2h0M423.3 498h0M423.3 504.5h0M423.4 538h0M423.4 539.9h0M423.5 512.3h0M423.6 548h0M424.2 511.3h0M424.3 537.6h0M424.4 502.3h0M424.5 537.3h0M424.8 539.2h0M424.9 514.2h0M424.9 506.8h0M424.9 540.9h0M424.9 514.5h0M424.9 504.5h0M425.2 539.6h0M425.3 510.7h0M425.5 540.1h0M425.6 509.4h0M425.7 511.2h0M425.8 548.2h0M425.9 507.9h0M425.9 540.8h0M426 536.7h0M426 536.9h0M426 511.6h0M426.1 510.9h0M426.2 512.4h0M426.4 497.5h0M426.6 500.4h0M426.7 515.1h0M426.7 507.2h0M426.7 513h0M426.8 514.2h0M426.8 544h0M426.8 512.8h0M427 511.9h0M427.1 501.3h0M427.2 538.5h0M427.6 514.1h0M427.8 512.6h0M427.8 537.6h0M427.9 506.9h0M428 540h0M428 537h0M428.1 511.8h0M428.2 507.1h0M428.3 540.2h0M428.4 537.6h0M428.5 515.1h0M428.6 514.4h0M428.7 508.1h0M428.7 513.6h0M428.8 542.7h0M428.9 509.6h0M429 514.9h0M429 545.6h0M429 506.5h0M429.2 509.7h0M429.5 543.2h0M429.5 543.6h0M429.7 538.7h0M429.8 549.4h0M429.8 536.1h0M429.9 514h0M429.9 511.5h0M430.1 537.4h0M430.2 510h0M430.3 509.7h0M430.5 500.4h0M430.6 511.3h0M430.7 537.6h0M430.8 540.7h0M430.8 539.3h0M430.8 535.7h0M430.8 498h0M431 508.7h0M431.1 543.9h0M431.2 536.3h0M431.4 514.9h0M431.5 548.7h0M431.6 515h0M431.8 550.3h0M431.8 512.8h0M431.8 549.3h0M431.9 538.8h0M431.9 538h0M432 542.8h0M432 514.4h0M432.3 509.2h0M432.3 542.2h0M432.3 508.9h0M432.4 511.9h0M432.6 513.6h0M432.6 536h0M432.7 548.4h0M432.7 539.6h0M432.8 514.3h0M432.8 538.9h0M432.9 536.5h0M432.9 515h0M433 539.5h0M433.2 511.8h0M433.2 550.6h0M433.3 548.6h0M433.4 539.8h0M433.5 506.8h0M433.5 538.4h0M433.9 538.2h0M433.9 547.8h0M434.1 545.5h0M434.1 546.8h0M434.2 536.9h0M434.2 539.4h0M434.6 539.9h0M434.7 542.5h0M434.7 510.4h0M434.8 540.7h0M434.8 539.6h0M434.8 541.1h0M434.8 537.1h0M434.9 512.7h0M435.3 535.5h0M435.4 512.7h0M435.4 513.5h0M435.5 542.7h0M435.7 545.8h0M435.7 542.5h0M435.8 514.8h0M436.4 539.5h0M436.5 500h0M436.5 540.1h0M436.7 515.2h0M436.8 541.1h0M437 536.8h0M437.1 544.1h0M437.2 510.5h0M437.3 506.8h0M437.4 539.1h0M437.4 511.3h0M437.4 507.4h0M437.5 511.8h0M437.7 548.2h0M437.8 536.4h0M437.8 542.5h0M437.9 514.7h0M437.9 515.4h0M438 537.5h0M438.1 511.1h0M438.2 542.8h0M438.2 514.1h0M438.5 514.6h0M438.8 509.9h0M438.8 548.1h0M438.8 538.6h0M439 540.9h0M439.1 511.1h0M439.1 511.4h0M439.3 544.1h0M439.4 539.8h0M439.4 514.8h0M439.4 535.9h0M439.6 509.5h0M440 540.2h0M440.1 509.1h0M440.1 514h0M440.2 539.9h0M440.4 538h0M440.5 539h0M440.7 498.5h0M440.8 537.5h0M440.8 509h0M440.8 509.7h0M440.8 535.9h0M440.8 535.5h0M441 536.9h0M441.1 537.1h0M441.3 538.6h0M441.4 513.9h0M441.4 536.5h0M441.6 509.9h0M441.7 541.4h0M441.8 537h0M441.9 540.1h0M442 539.2h0M442 513.8h0M442.2 513.4h0M442.3 507.8h0M442.4 541.2h0M442.6 513.5h0M442.6 499.9h0M442.7 512.9h0M442.8 538.4h0M442.9 513.6h0M443 538.3h0M443 541.7h0M443.2 512.5h0M443.4 545.3h0M443.5 543.8h0M443.6 537.6h0M443.8 508.4h0M443.9 540.7h0M444 515.2h0M444 538.2h0M444.1 515h0M444.1 541.1h0M444.2 498h0M444.5 499.9h0M444.6 536.9h0M444.6 535.5h0M444.6 513.5h0M444.7 507h0M445 515.1h0M445 510h0M445.1 510.7h0M445.2 510h0M445.3 514.6h0M445.3 515.3h0M445.4 548.9h0M445.5 513.6h0M445.5 537.6h0M445.8 513.1h0M445.9 535.9h0M446 543.6h0M446.2 512.2h0M446.2 512.3h0M446.5 547.6h0M446.6 535.7h0M446.8 538.7h0M446.9 502.9h0M446.9 512.8h0M447 514.1h0M447 515.3h0M447.1 550.2h0M447.1 513.5h0M447.2 515.1h0M447.2 513.6h0M447.2 497.5h0M447.3 497.4h0M447.3 513.6h0M447.4 541.6h0M448 540.6h0M448.1 537.8h0M448.2 543.6h0M448.3 543.9h0M448.4 538h0M448.5 540.8h0M448.5 509.5h0M448.6 514.5h0M448.7 542.2h0M448.7 512.5h0M448.8 514h0M448.9 507.8h0M449.2 510.6h0M449.2 511.5h0M449.2 513.9h0M449.3 537.1h0M449.5 536.3h0M449.7 549.9h0M449.8 502.8h0M449.9 539.4h0M450.1 538.3h0M450.2 551.1h0M450.5 507.3h0M450.6 545.8h0M450.6 543.4h0M450.7 539.5h0M450.8 512.5h0M451 547.7h0M451.2 500h0M451.3 537.4h0M451.3 542.3h0M451.3 512.1h0M451.4 538.6h0M451.5 542.1h0M451.5 543.1h0M451.5 536.3h0M451.5 540.7h0M451.6 548.2h0M451.6 541.2h0M451.7 541.1h0M452 541.5h0M452.1 535.6h0M452.3 512.7h0M452.3 538.2h0M452.5 538.9h0M452.7 537.7h0M453 544.5h0M453 513.9h0M453 536.8h0M453 510.2h0M453.2 536.5h0M453.3 535.6h0M453.4 538h0M453.5 509h0M453.5 537.9h0M453.7 510.6h0M453.7 539.8h0M454 537.6h0M454.2 513.6h0M454.3 540.5h0M454.3 510.2h0M454.4 541.7h0M454.4 537.3h0M454.5 536.8h0M454.8 511.1h0M454.8 539.2h0M454.8 535.6h0M454.9 537.7h0M455 507.9h0M455 501.4h0M455.3 535.9h0M455.3 505.3h0M455.4 541.6h0M455.6 510.5h0M455.6 537.4h0M455.7 536.6h0M455.9 501.8h0M456.2 542.7h0M456.2 549.6h0M456.3 540.7h0M456.3 511.1h0M456.4 504.2h0M456.4 537.9h0M456.5 506.7h0M456.6 536.4h0M456.7 514.5h0M456.9 541.3h0M457 537.9h0M457.1 504.8h0M457.2 512.2h0M457.4 539.7h0M457.5 498.7h0M457.5 511.6h0M457.6 514.2h0M457.7 512.5h0M457.7 539.6h0M458 538.3h0M458 546.5h0M458 540.5h0M458.1 514.8h0M458.2 513.6h0M458.6 512.6h0M458.6 541.9h0M458.7 541.5h0M458.7 513.6h0M458.7 536.4h0M458.8 540h0M458.9 513h0M459 514.8h0M459 506.7h0M459.2 543.3h0M459.2 540h0M459.3 515.2h0M459.4 541.1h0M459.5 541.2h0M460 536.5h0M460 542.1h0M460.3 499.3h0M460.4 513.9h0M460.4 536.1h0M460.7 514.1h0M460.8 510.8h0M460.9 503.4h0M461 508.3h0M461.2 513.4h0M461.5 538.8h0M461.5 514h0M461.6 514.8h0M461.6 540.8h0M461.6 541.1h0M461.8 513.5h0M461.8 507.3h0M461.8 512.4h0M462.2 514.6h0M462.2 543h0M462.4 515.2h0M462.4 500.9h0M462.6 514.7h0M462.8 539.1h0M462.9 499.2h0M462.9 513.3h0M463 513.9h0M463.3 505h0M463.5 508.1h0M463.7 541.1h0M463.7 537.5h0M463.7 535.4h0M463.8 538.6h0M463.8 512.3h0M463.9 539.5h0M463.9 538h0M464 535.5h0M464.1 540.2h0M464.2 511.2h0M464.2 513.8h0M464.3 510h0M464.3 498.7h0M464.4 539.8h0M464.5 538.9h0M464.6 515.3h0M464.6 515h0M464.6 544.3h0M464.8 511.3h0M464.8 509.1h0M465 540.4h0M465.1 512.4h0M465.7 507.7h0M465.9 540h0M466 503.5h0M466.1 535.5h0M466.3 515.1h0M466.4 512.4h0M466.4 497.6h0M466.6 497.3h0M466.7 539.7h0M467 552.8h0M467 513.4h0M467.1 547.2h0M467.2 512.5h0M467.2 537.4h0M467.3 543.3h0M467.4 538.5h0M467.4 513.6h0M467.8 511.6h0M467.8 537.6h0M467.9 537.9h0M468.1 542.6h0M468.1 540.3h0M468.1 507.2h0M468.1 536h0M468.2 537.5h0M468.2 514.1h0M468.3 550.3h0M468.3 540.3h0M468.5 512.3h0M468.5 543.9h0M468.7 543.2h0M468.7 552.4h0M468.8 499.3h0M468.9 544h0M469.2 514.4h0M469.2 542.3h0M469.3 512.6h0M469.3 541.3h0M469.4 539.5h0M469.5 541.1h0M469.6 546.5h0M469.8 538.3h0M469.8 536.1h0M469.9 512.8h0M470 541.6h0M470.2 539.7h0M470.4 509h0M470.8 544.1h0M470.9 548.2h0M470.9 539.7h0M471.4 540.1h0M471.6 511.6h0M471.6 512h0M471.7 537h0M471.7 515.1h0M471.8 542.5h0M471.9 544.6h0M472 541.2h0M472.1 539.6h0M472.1 513.6h0M472.2 541.3h0M472.5 536.7h0M472.5 505.9h0M472.6 515.2h0M472.6 550h0M472.8 540.5h0M472.8 543.3h0M472.8 538h0M472.9 537.1h0M472.9 536.6h0M472.9 538h0M472.9 544.2h0M473.2 548.6h0M473.5 536.1h0M473.6 509.2h0M473.8 505.2h0M474.2 506.4h0M474.3 542.1h0M474.5 546.1h0M474.7 536h0M474.8 504.7h0M474.8 506h0M475 539.4h0M475.1 513.4h0M475.2 511.7h0M475.3 542.5h0M475.4 538.6h0M475.4 539.7h0M475.4 515.3h0M475.4 509.7h0M475.5 509.3h0M475.7 515.2h0M475.9 514.7h0M476 510.1h0M476 536h0M476.1 514.1h0M476.2 513.4h0M476.3 507.4h0M476.4 504.7h0M476.7 511h0M476.9 537.8h0M476.9 512.7h0M477 536.9h0M477.1 536.4h0M477.1 512h0M477.1 547.9h0M477.2 538.1h0M477.5 508.2h0M477.5 511.8h0M477.7 514.8h0M477.7 548h0M477.8 514.3h0M477.9 537h0M477.9 514.5h0M478 512.7h0M478 501.4h0M478.1 509.1h0M478.2 507.8h0M478.6 506.3h0M478.7 511h0M478.9 513.1h0M479 507.2h0M479 504.6h0M479.1 512.6h0M479.5 510.5h0M479.7 535.6h0M480.1 539.3h0M480.1 511.8h0M480.2 543h0M480.4 510.1h0M480.5 535.9h0M480.7 536.1h0M480.7 536h0M480.9 501.7h0M480.9 547.5h0M481.1 514h0M481.3 536h0M481.3 511.5h0M481.4 511.2h0M481.5 538.6h0M481.6 506.4h0M481.8 509h0M481.8 539.5h0M481.8 514.2h0M482 538.8h0M482.1 513.2h0M482.1 515.2h0M482.4 512.3h0M482.5 512.4h0M482.8 548.5h0M482.8 537h0M482.9 508.7h0M483.1 537.7h0M483.2 538h0M483.2 545.8h0M483.3 547.4h0M483.6 510.9h0M483.6 509.1h0M483.7 515.3h0M483.7 544h0M483.8 514.4h0M483.8 514.7h0M483.9 502.6h0M483.9 514.4h0M483.9 514.6h0M483.9 546.1h0M484 506.4h0M484.4 512.1h0M484.5 514.7h0M484.5 538.2h0M484.5 512.6h0M484.6 538.8h0M484.7 502.8h0M484.7 515.2h0M484.7 504.5h0M484.8 507.7h0M485.2 540.3h0M485.3 539h0M485.3 509.7h0M485.4 537.4h0M486.1 543.2h0M486.4 510h0M486.4 505.3h0M486.5 510.3h0M486.5 514.5h0M486.6 545.3h0M486.8 509.1h0M486.8 511.5h0M486.9 542.6h0M486.9 536.5h0M487.1 537.9h0M487.2 513.9h0M487.3 546h0M487.3 536h0M487.5 535.9h0M487.5 546.2h0M487.6 503.3h0M487.6 509.3h0M487.6 514.5h0M487.8 537.5h0M487.8 515.2h0M488 535.5h0M488 510.2h0M488.1 536h0M488.2 541.4h0M488.4 510.3h0M488.5 536h0M488.7 536.2h0M488.7 537.2h0M489.1 503.8h0M489.3 545.8h0M489.3 538.3h0M489.4 510.7h0M489.5 502.7h0M489.6 536.8h0M489.7 514.8h0M489.8 541.1h0M489.9 536.1h0M490 542.9h0M490 512.5h0M490.3 503.3h0M490.3 511.8h0M490.6 537.8h0M490.7 545.3h0M490.8 542.2h0M490.8 542h0M490.9 540.1h0M490.9 539.9h0M491 537.9h0M491.2 506.7h0M491.2 511.2h0M491.5 511.5h0M491.7 509.1h0M491.8 514.5h0M491.8 515.3h0M491.9 540.5h0M491.9 509.7h0M492 536.7h0M492.1 536.4h0M492.1 500h0M492.3 538.9h0M492.3 538.4h0M492.7 540.4h0M492.7 512.5h0M492.8 513.8h0M492.9 508.7h0M492.9 503.2h0M493.4 504.1h0M493.5 537h0M493.6 514.1h0M493.7 509.2h0M493.7 514.1h0M493.7 508.5h0M493.8 537.8h0M493.8 513.5h0M493.8 501h0M493.9 514.6h0M494.2 512.2h0M494.2 511.3h0M494.2 548.5h0M494.2 512.9h0M494.3 499.3h0M494.6 515.3h0M495 510.6h0M495.2 508.3h0M495.2 507.3h0M495.3 543.6h0M495.3 539.6h0M495.4 512.1h0M495.4 545.6h0M495.5 512.8h0M495.7 511h0M495.8 508h0M496 508.5h0M496 511.1h0M496.1 511.4h0M496.2 509h0M496.2 515h0M496.3 508.6h0M496.5 535.6h0M496.5 512.6h0M496.6 515h0M496.6 511.3h0M496.8 539.9h0M496.8 508.8h0M497.1 499.5h0M497.2 506.2h0M497.2 514.2h0M497.2 507.1h0M497.3 498.6h0M497.3 513.9h0M497.5 513.6h0M497.5 538.4h0M497.8 514h0M497.9 515.1h0M498 535.9h0M498 507.1h0M498.2 536.9h0M498.4 504.8h0M498.7 515.1h0M498.7 512.5h0M498.9 507.8h0M499.2 503.9h0M499.4 510.8h0M499.5 512.2h0M499.5 542.8h0M499.7 513.2h0M499.7 508.4h0M499.8 541.4h0M500 511h0M500.1 512.8h0M500.1 505.4h0M500.1 507.1h0M500.4 539h0M500.4 537.2h0M500.5 513h0M500.6 513h0M500.7 538.4h0M500.8 512.3h0M500.8 514.7h0M500.8 506.7h0M500.9 535.6h0M500.9 540.1h0M501 513.9h0M501.3 513.8h0M501.3 543.5h0M501.7 536.7h0M501.7 514h0M501.7 535.7h0M501.8 539h0M501.8 511.7h0M501.8 543.8h0M501.8 513.1h0M501.9 511.2h0M502 537.9h0M502.1 499.5h0M502.3 513.9h0M502.4 512.4h0M502.4 539.3h0M502.4 541.5h0M502.5 513.9h0M502.6 512.1h0M502.6 508.4h0M502.9 513.4h0M503 543.8h0M503.2 515.1h0M503.2 538.3h0M503.3 542.7h0M503.5 548.5h0M503.6 546h0M503.6 506.5h0M503.8 512h0M503.8 538.6h0M504 536.7h0M504 512h0M504.4 508.5h0M504.7 540.7h0M504.8 512.1h0M504.8 536.4h0M504.8 538.5h0M505 538.8h0M505 513.4h0M505.1 537.4h0M505.2 544.3h0M505.3 537.5h0M505.4 539.2h0M505.5 505.6h0M505.6 535.5h0M505.7 506.5h0M505.7 538.9h0M505.8 536.7h0M505.8 505h0M505.9 537.1h0M506.1 548.1h0M506.3 539.4h0M506.3 537.6h0M506.5 542.2h0M506.5 550h0M506.5 548.5h0M506.6 537.5h0M506.9 513.4h0M506.9 540.6h0M507 509.8h0M507.2 499.5h0M507.4 543.9h0M507.5 543.1h0M507.5 535.4h0M507.7 514.7h0M507.7 544.1h0M508.2 514.5h0M508.3 541.8h0M508.4 536.2h0M508.4 540.3h0M508.4 545h0M508.6 539.9h0M508.6 512.9h0M508.7 513.4h0M508.8 503h0M508.9 511.5h0M509.1 512.4h0M509.1 497.5h0M509.1 538.7h0M509.1 547.9h0M509.1 547.3h0M509.2 503.9h0M509.2 535.7h0M509.5 543.8h0M509.6 515.1h0M509.6 540.8h0M509.7 547.9h0M509.7 539h0M510 513.3h0M510.2 536.1h0M510.3 537h0M510.4 510.1h0M510.4 535.4h0M510.5 537.9h0M510.5 506.4h0M510.6 540.8h0M510.8 551.3h0M510.8 538.5h0M511 541.9h0M511.1 507.4h0M511.3 514.8h0M511.3 541.3h0M511.5 512.4h0M511.6 544h0M511.6 536.5h0M511.9 543.5h0M511.9 537h0M512.1 515.1h0M512.2 539.1h0M512.2 537h0M512.2 515h0M512.3 536.5h0M512.3 535.7h0M512.4 539.3h0M512.6 549.2h0M512.8 536.9h0M512.8 536.6h0M512.9 511.3h0M513.2 537.5h0M513.2 543.2h0M513.3 545.3h0M513.3 540.1h0M513.3 536.8h0M513.3 539.5h0M513.3 538.7h0M513.5 511.6h0M513.6 504.8h0M513.7 512.3h0M513.8 538.7h0M513.9 512h0M513.9 541.6h0M514 509.7h0M514.2 537.2h0M514.2 514.8h0M514.3 544.3h0M514.3 501.6h0M514.4 536.4h0M514.5 508.7h0M514.6 539.7h0M514.6 545.9h0M514.7 507.3h0M514.8 540.2h0M514.8 537.1h0M514.9 536.7h0M515 535.4h0M515.1 509h0M515.1 535.9h0M515.2 538.5h0M515.2 543.5h0M515.2 542.6h0M515.4 505.4h0M515.5 510.9h0M515.8 514.5h0M515.9 513.6h0M515.9 537.5h0M516 540.3h0M516.1 538.9h0M516.1 537.9h0M516.3 540.2h0M516.5 514.7h0M516.6 513.9h0M516.7 537.8h0M516.8 536.8h0M516.8 514.5h0M516.9 512.5h0M517 540.2h0M517.1 538.6h0M517.2 535.7h0M517.5 537.2h0M517.7 540.2h0M517.8 539h0M517.9 505.7h0M518 540.5h0M518.1 505.1h0M518.5 504h0M518.6 535.8h0M518.9 512h0M519 509.1h0M519.1 540.6h0M519.1 512.7h0M519.1 508.9h0M519.3 511.1h0M519.6 546.7h0M519.7 536h0M519.8 538.9h0M519.8 508.9h0M520 540.6h0M520.1 541.3h0M520.3 512.6h0M520.3 539.5h0M520.4 544.4h0M520.4 537.3h0M520.5 511h0M520.8 535.5h0M521.2 539h0M521.3 538.1h0M521.3 513.7h0M521.4 539.6h0M521.8 512.2h0M521.8 508.1h0M521.8 538.7h0M521.9 552h0M522 513.1h0M522.1 507.6h0M522.1 549.2h0M522.1 548.3h0M522.2 539.1h0M522.4 511.4h0M522.5 538.3h0M522.9 540.8h0M522.9 509.6h0M523 541.6h0M523 542.3h0M523.1 541.6h0M523.5 540.1h0M523.8 535.7h0M524 536.3h0M524 543.8h0M524.1 538.5h0M524.1 541.1h0M524.2 540.9h0M524.3 536.1h0M524.3 505.3h0M524.5 541.7h0M524.6 540.5h0M524.7 509.1h0M524.7 540h0M524.9 539.9h0M525 549.9h0M525.1 537.8h0M525.5 546.1h0M525.5 514.2h0M525.5 537.9h0M525.6 508.1h0M525.6 505.2h0M525.6 514h0M525.9 541.7h0M526.2 535.9h0M526.2 507.1h0M526.3 539.8h0M526.3 551.3h0M526.4 509.6h0M526.4 540.3h0M526.5 539.2h0M526.5 513.7h0M526.5 545.2h0M526.6 544.7h0M526.7 541.7h0M527.3 535.8h0M527.3 511.8h0M527.4 537.5h0M527.6 499.7h0M527.9 536.2h0M528 536.3h0M528 538.3h0M528.1 539.4h0M528.2 513.5h0M528.4 512.9h0M528.5 546h0M528.6 542.3h0M528.6 511.6h0M528.7 537h0M528.7 540.2h0M528.8 512.8h0M529.6 536.6h0M529.6 511.4h0M529.6 513.4h0M530 497.1h0M530.1 536.8h0M530.4 541.4h0M530.4 513.7h0M530.5 515.2h0M530.6 512h0M530.6 500.2h0M530.7 512.5h0M530.8 538.4h0M530.9 509.8h0M530.9 536.4h0M530.9 512.9h0M531.2 541.7h0M531.3 506.8h0M531.5 539.2h0M531.5 508.1h0M531.7 539.3h0M531.7 505.6h0M531.9 507.7h0M531.9 509.1h0M532.1 511.6h0M532.1 504.6h0M532.1 537.4h0M532.2 503.1h0M532.2 506.6h0M532.3 513.7h0M532.3 515.2h0M532.4 503.7h0M532.4 506.2h0M532.5 512.3h0M532.5 510.8h0M532.5 510.4h0M532.9 514h0M532.9 506.2h0M533.1 503.6h0M533.5 502h0M533.6 512.3h0M533.8 535.6h0M533.9 510.8h0M534 514.3h0M534 515h0M534.1 537h0M534.1 544.2h0M534.3 504.7h0M534.3 541.3h0M534.4 535.5h0M534.4 509.9h0M534.5 511.7h0M534.5 514.8h0M534.5 504.5h0M534.6 545.2h0M534.9 504.8h0M534.9 505.3h0M534.9 538h0M535.1 510.1h0M535.2 511.1h0M535.3 541.2h0M535.3 512h0M535.4 498.7h0M535.5 512.5h0M535.8 502.6h0M536 513.5h0M536.1 505.9h0M536.2 538.2h0M536.2 513.2h0M536.4 499.2h0M536.5 500h0M536.6 514.6h0M536.6 515h0M536.7 500.1h0M536.8 507.1h0M536.8 512.3h0M537 501.8h0M537.1 515.3h0M537.2 503.2h0M537.2 510.3h0M537.2 510.7h0M537.5 512.8h0M537.6 514.6h0M537.8 538.1h0M538.1 505.9h0M538.2 507.7h0M538.4 511.8h0M538.5 501.4h0M538.5 512.4h0M538.6 511.2h0M538.8 512.8h0M539.3 512.5h0M539.4 515h0M539.4 511.2h0M539.6 511.5h0M539.8 535.5h0M539.9 513.2h0M539.9 502.7h0M539.9 501.8h0M540 538.3h0M540 514.3h0M540 538h0M540.1 512.2h0M540.1 514.2h0M540.3 512.4h0M540.3 502.6h0M540.3 509.3h0M540.4 539.2h0M540.5 542.8h0M540.5 513.6h0M540.5 510.3h0M541 506.8h0M541.1 539.8h0M541.5 513.2h0M541.5 511.4h0M541.8 547.2h0M541.8 512.4h0M541.9 535.6h0M542 535.6h0M542 514.1h0M542.2 506.2h0M542.2 511.8h0M542.5 514.4h0M542.5 513.3h0M542.6 513h0M542.6 512.3h0M542.8 536h0M542.8 509.1h0M543.2 541.3h0M543.3 513.4h0M543.4 511.1h0M543.5 504.7h0M543.6 536.8h0M543.9 505.8h0M544.1 505.4h0M544.1 510.5h0M544.2 510.3h0M544.2 538h0M544.3 505.9h0M544.3 509h0M544.5 539.5h0M544.7 507.2h0M544.8 510.5h0M544.9 542h0M545.3 504.4h0M545.3 538h0M545.3 512.4h0M545.4 515.3h0M545.4 543.5h0M545.5 545.7h0M545.5 514.8h0M545.6 539.7h0M545.9 536.8h0M546 514.3h0M546.6 536.6h0M546.6 513.2h0M546.6 508.2h0M546.7 507.5h0M547 546.6h0M547 504.2h0M547.1 542.5h0M547.1 509.1h0M547.1 540.5h0M547.2 540.9h0M547.2 505.1h0M547.3 542.9h0M547.3 536.8h0M547.4 509h0M548 504.1h0M548 542.5h0M548 508.9h0M548.1 539h0M548.3 537.2h0M548.3 507.9h0M548.3 505.1h0M548.4 501.9h0M548.5 513.2h0M548.6 514.5h0M548.8 508.6h0M548.8 513.8h0M549 512.7h0M549 537.4h0M549.1 514.7h0M549.2 504.4h0M549.4 508.3h0M549.4 509.6h0M549.5 510.6h0M549.6 513.4h0M549.6 513.8h0M549.7 513.2h0M549.8 538.5h0M550 497.6h0M550 536.5h0M550.1 511.4h0M550.4 513.8h0M550.4 514.8h0M550.7 539.1h0M551.4 505h0M551.5 500.6h0M551.6 514.9h0M551.7 514.5h0M551.7 545.6h0M552 541.4h0M552.2 513.3h0M552.2 536.3h0M552.2 513.6h0M552.2 514.9h0M552.3 539h0M552.6 507.9h0M552.6 505.4h0M552.6 539.6h0M552.8 536.3h0M552.9 508.2h0M553 510.9h0M553 514h0M553.3 512.4h0M553.4 536.4h0M553.5 540.5h0M553.6 512.7h0M553.6 544.9h0M553.6 505h0M553.7 542.1h0M553.8 538h0M553.8 548.2h0M554.1 507.5h0M554.1 540.5h0M554.1 544.6h0M554.1 541.3h0M554.1 512.7h0M554.4 508h0M554.4 511.4h0M554.5 514.9h0M554.6 508.7h0M554.8 536.9h0M554.9 535.8h0M555 513.7h0M555.1 536.5h0M555.4 509.7h0M555.4 503.6h0M555.5 543h0M555.5 512.7h0M555.7 538.2h0M555.7 512.8h0M555.8 502.6h0M555.9 539.7h0M555.9 505.8h0M556 539.6h0M556.1 539.2h0M556.1 509.5h0M556.1 512.1h0M556.3 514.3h0M556.5 543.2h0M556.8 539.6h0M556.8 536.5h0M556.9 512.6h0M557.3 550.3h0M557.3 509h0M557.3 514.6h0M557.3 536.9h0M557.5 538.9h0M557.6 541.6h0M557.7 549.3h0M558 540.4h0M558 499.8h0M558.1 514h0M558.2 513.1h0M558.2 512h0M558.3 538.1h0M558.4 537.5h0M558.5 536.2h0M558.5 541.3h0M558.6 538.9h0M558.7 553.8h0M558.7 537.9h0M558.7 538.2h0M558.8 536.3h0M558.8 540.9h0M558.8 510.4h0M558.9 537.9h0M558.9 540.9h0M559 540.8h0M559.1 546.3h0M559.2 542.7h0M559.4 539.9h0M559.6 542.5h0M559.6 542.4h0M559.6 544.9h0M559.6 515.2h0M559.7 548.8h0M559.7 535.8h0M559.8 551.3h0M559.9 550.5h0M559.9 545.7h0M560 511.9h0M560 538.4h0M560 543.3h0M560.1 512.9h0M560.3 552.2h0M560.4 542.3h0M560.5 540.3h0M560.7 548.9h0M560.8 540.9h0M560.9 542.3h0M561 538.8h0M561 536.1h0M561 538.8h0M561 538.9h0M561 551h0M561 541.2h0M561 505h0M561.2 535.9h0M561.3 550.3h0M561.3 536.6h0M561.4 538.8h0M561.6 514.2h0M561.7 551.4h0M561.8 541.5h0M561.8 536.9h0M561.9 538.1h0M561.9 541.6h0M562 547.5h0M562 538.5h0M562.1 541.7h0M562.1 509h0M562.1 536.8h0M562.3 542.2h0M562.5 538.1h0M562.5 543h0M562.6 544.6h0M562.9 541.1h0M563 538.7h0M563.1 511.3h0M563.1 539.7h0M563.8 542.5h0M563.9 541.4h0M564 551.6h0M564 540.6h0M564.1 513.8h0M564.3 546.9h0M564.3 552.2h0M564.4 536.2h0M564.4 514.6h0M564.6 540.8h0M564.6 546.1h0M565.1 540h0M565.1 536.1h0M565.1 537.5h0M565.2 511.7h0M565.4 509.4h0M565.6 537.8h0M565.6 514.1h0M565.6 508.6h0M565.6 543.9h0M565.7 538.7h0M565.7 550.4h0M565.9 537h0M566.3 540h0M566.4 552.7h0M566.4 512.4h0M566.6 508.4h0M566.7 513.5h0M566.8 547h0M566.9 542.7h0M566.9 535.9h0M567 552h0M567.1 512.3h0M567.1 513.4h0M567.4 536.1h0M567.4 542.7h0M567.6 535.9h0M567.6 515.2h0M567.7 515.2h0M567.8 542.2h0M568.4 513.2h0M568.4 537.3h0M568.7 539h0M568.8 504.9h0M568.8 543.1h0M568.9 541.6h0M568.9 544.5h0M568.9 514.5h0M569.1 535.9h0M569.4 541.5h0M569.4 509.5h0M569.5 539.5h0M569.5 538h0M569.6 547.5h0M569.6 539.9h0M569.6 546.8h0M569.7 544.7h0M569.9 536.8h0M569.9 537.2h0M570.1 536.4h0M570.2 537.5h0M570.3 537.4h0M570.5 536.1h0M570.6 547.9h0M570.6 509h0M570.8 513.9h0M570.9 514.1h0M571.1 535.7h0M571.2 541.1h0M571.4 535.7h0M571.4 539.1h0M571.5 509.6h0M571.6 540.4h0M571.6 513.2h0M572 546h0M572 545.8h0M572.1 535.8h0M572.3 548.8h0M572.5 514.5h0M572.5 547.9h0M572.6 550.7h0M572.6 506.8h0M572.8 513.9h0M572.8 538.8h0M572.9 509.8h0M573.1 515.2h0M573.1 535.6h0M573.1 510.9h0M573.5 507.6h0M573.6 545h0M573.8 509.5h0M574 542.1h0M574.1 535.7h0M574.1 542.1h0M574.3 515.3h0M574.3 504.9h0M574.4 536.1h0M574.5 512.7h0M574.5 537.7h0M574.5 548.3h0M575 538.2h0M575.1 509.7h0M575.1 513.8h0M575.2 536.7h0M575.3 538.7h0M575.4 511.8h0M575.6 499.6h0M575.8 536.9h0M575.9 514.4h0M575.9 509.8h0M576.1 536.9h0M576.2 537.4h0M576.4 536.2h0M576.5 535.7h0M576.5 511.3h0M576.6 510.9h0M576.7 515h0M576.8 510.3h0M576.8 535.5h0M577 539.7h0M577 502.1h0M577.2 510.2h0M577.4 513.1h0M577.6 515.3h0M577.6 511h0M577.7 536.8h0M577.7 513.8h0M577.8 537.6h0M577.9 512.6h0M578 538.1h0M578.2 508.7h0M578.3 540.2h0M578.4 535.8h0M578.9 501.1h0M579 538.6h0M579.2 537.7h0M579.3 547.9h0M579.3 512.8h0M579.4 539.9h0M579.5 510.6h0M579.5 544h0M579.6 510.3h0M579.7 512.8h0M579.8 542.2h0M579.8 509.3h0M579.8 513.4h0M580 509.9h0M580.2 510.6h0M580.2 535.9h0M580.3 536h0M580.3 539.6h0M580.3 513h0M580.4 509.3h0M580.5 500.7h0M580.5 537.7h0M580.6 537.6h0M580.7 512.2h0M580.7 540.7h0M580.7 549.5h0M580.8 538.1h0M580.9 512.3h0M580.9 515.1h0M580.9 541.9h0M581 536.5h0M581.1 543.7h0M581.2 514.3h0M581.2 507.6h0M581.4 538.4h0M581.4 506.6h0M581.6 541.8h0M581.6 515.3h0M581.7 508.2h0M581.8 539.7h0M581.8 512.8h0M582 539.7h0M582 539.1h0M582 535.8h0M582.3 535.7h0M582.3 501.4h0M582.3 510.7h0M582.4 514.1h0M582.7 542h0M582.7 546.2h0M582.7 509.4h0M582.9 513.4h0M583.3 511h0M583.3 512.4h0M583.4 536.7h0M583.4 543.9h0M583.5 538.1h0M583.9 511.2h0M583.9 543.2h0M584.5 515.1h0M584.6 505.1h0M584.6 513.6h0M584.7 502.3h0M584.7 539.6h0M584.8 511.8h0M584.9 509.9h0M585.3 511h0M585.4 541.4h0M585.4 539.6h0M585.5 542.8h0M585.7 508.2h0M585.7 513h0M585.9 508.3h0M586 513.9h0M586.1 506.5h0M586.1 510.4h0M586.2 509.3h0M586.3 506.9h0M586.6 543.9h0M586.6 502.3h0M586.6 513.1h0M586.7 511.6h0M586.8 499.7h0M586.9 513.4h0M587 512.8h0M587.6 505.3h0M587.6 513.1h0M587.6 515.1h0M587.6 537.8h0M587.8 514.8h0M587.9 543.9h0M587.9 514.6h0M588.1 507.2h0M588.3 497.8h0M588.6 514.6h0M588.6 515h0M588.6 511.6h0M588.7 501.1h0M588.7 509.8h0M588.8 537.5h0M588.8 500.9h0M588.9 514.2h0M589.1 498.8h0M589.1 510.8h0M589.2 514.8h0M589.2 512.3h0M589.2 514.6h0M589.4 513.9h0M589.5 506.1h0M589.5 504.3h0M589.6 497.2h0M589.6 507.5h0M589.6 543.3h0M589.7 507.7h0M589.7 508.5h0M589.7 504.5h0M589.8 511.4h0M589.8 506.9h0M589.9 512.7h0M589.9 513.2h0M590.1 501.3h0M590.1 515.4h0M590.2 509.2h0M590.3 514.6h0M590.3 512.8h0M590.3 511.4h0M590.4 504.8h0M590.7 538.6h0M590.9 512.1h0M590.9 544.3h0M591 506.6h0M591 545.8h0M591 508.6h0M591.2 537.6h0M591.3 509.3h0M591.3 537.3h0M591.4 508.2h0M591.6 513.4h0M591.7 514.4h0M591.7 503.8h0M591.8 514.1h0M591.9 515h0M591.9 536.9h0M592.1 537h0M592.7 514.9h0M592.7 543.3h0M592.9 514.1h0M592.9 507.1h0M593.2 512.1h0M593.2 505h0M593.3 512.6h0M593.5 501.3h0M593.5 538.2h0M593.6 505.6h0M593.7 511h0M593.8 514.3h0M593.8 538.2h0M593.8 513.8h0M594.2 501h0M594.2 536.3h0M594.4 538.4h0M594.5 541.4h0M594.5 538.9h0M594.6 508.1h0M594.6 537.1h0M594.6 505.3h0M594.7 512.3h0M594.7 537.2h0M594.8 513.5h0M595 538.6h0M595 508.1h0M595.1 537.6h0M595.2 510.3h0M595.8 509.3h0M595.9 514.9h0M596 507.3h0M596 510.7h0M596.1 536.3h0M596.3 536.4h0M596.5 507.3h0M596.9 540.4h0M597 509h0M597.1 499.8h0M597.2 539.1h0M597.2 536.5h0M597.2 505h0M597.4 505.6h0M597.5 537.1h0M597.7 507h0M597.7 510.2h0M597.7 538.1h0M598.1 514.5h0M598.2 541.3h0M598.3 548.4h0M598.4 502.4h0M598.5 542.8h0M598.6 542.8h0M598.6 514.2h0M598.6 506.5h0M598.7 512.5h0M598.8 539h0M599 537.2h0M599 515.4h0M599.2 511.4h0M599.3 538.1h0M599.6 535.8h0M599.9 538.6h0M599.9 506.6h0M599.9 515h0M599.9 550.1h0M600 539.8h0M600.1 536h0M600.1 505.2h0M600.1 514.2h0M600.3 513.2h0M600.3 540.4h0M600.5 536.9h0M600.6 536.5h0M600.7 546.7h0M600.8 539.3h0M600.9 535.5h0M601 536.7h0M601 540.9h0M601.2 543.7h0M601.2 535.9h0M601.8 541.7h0M601.9 545.6h0M602 542.1h0M602.1 548.4h0M602.1 544.8h0M602.3 548h0M602.3 504.4h0M602.3 512.6h0M602.4 535.9h0M602.4 541.2h0M602.4 539.4h0M602.5 538.7h0M602.6 542h0M602.7 514.4h0M602.9 538.4h0M603 504h0M603.2 512.1h0M603.2 536h0M603.4 542.5h0M603.9 509.8h0M603.9 541.9h0M604.1 507.4h0M604.1 508.8h0M604.2 545.6h0M604.3 514.2h0M604.3 537.6h0M604.4 504h0M604.4 546.1h0M604.6 513.7h0M605 539.5h0M605.1 504.4h0M605.1 514h0M605.1 511.5h0M605.3 543.4h0M605.6 546.5h0M605.7 499.8h0M605.7 510h0M605.8 507.2h0M605.8 513.3h0M605.9 538.7h0M605.9 542.8h0M605.9 543.1h0M606.2 538.8h0M606.3 514.3h0M606.3 510.4h0M606.4 505.4h0M606.4 538.7h0M606.8 546.9h0M606.9 537.6h0M606.9 543.1h0M606.9 545.6h0M606.9 509.1h0M607.7 512.8h0M607.7 512.9h0M607.9 513.6h0M607.9 538h0M608.2 510.6h0M608.2 537h0M608.2 547.7h0M608.4 535.8h0M608.4 542.7h0M608.5 538.9h0M608.5 538.4h0M608.6 544.1h0M608.6 541.6h0M608.7 515h0M608.8 536.5h0M608.9 542h0M608.9 512.2h0M609.4 539.3h0M609.5 548.4h0M609.8 502.4h0M609.9 542.1h0M610 536.9h0M610.1 510.9h0M610.4 536.4h0M610.4 536.7h0M610.5 537.7h0M610.6 545.3h0M610.7 543.9h0M610.8 542.6h0M610.9 540.4h0M611.1 548.4h0M611.1 536.9h0M611.3 513.5h0M611.4 536.9h0M611.6 536.1h0M611.6 505.4h0M611.8 539h0M611.9 544.1h0M611.9 513.8h0M612.2 537.5h0M612.3 537.9h0M612.3 514.9h0M612.3 536.9h0M612.4 536.2h0M612.4 542.5h0M612.4 545.5h0M612.6 537.6h0M612.7 545h0M612.8 545.5h0M612.8 540.3h0M612.9 539.3h0M613.2 512.1h0M613.2 535.7h0M613.2 542.4h0M613.4 541.5h0M613.5 537.4h0M613.7 547.7h0M613.7 540.3h0M613.8 548.2h0M613.8 513.3h0M614 542.2h0M614.1 536.5h0M614.1 535.9h0M614.2 535.5h0M614.2 545.3h0M614.6 513.9h0M614.7 544.1h0M614.7 541.5h0M614.8 535.4h0M614.8 540.3h0M614.9 538.5h0M615.1 539.2h0M615.2 542.1h0M615.3 514.9h0M615.3 544.3h0M615.3 515.1h0M615.4 537.9h0M615.5 535.9h0M615.6 540.6h0M615.8 536.7h0M615.8 538.5h0M615.8 536.5h0M616 540h0M616 539.5h0M616 536.6h0M616.1 535.8h0M616.2 535.5h0M616.5 545.3h0M616.5 539.5h0M616.6 514.7h0M616.6 507.4h0M617.1 512.2h0M617.1 547.2h0M617.2 541.6h0M617.3 539.3h0M617.3 537.4h0M617.5 535.9h0M617.8 551.3h0M617.9 550.5h0M618.1 538.9h0M618.3 540.8h0M618.6 535.5h0M618.9 538.6h0M619 535.4h0M619.2 515.2h0M619.7 509.6h0M619.7 510.4h0M619.9 551.1h0M620.3 510.2h0M620.5 540.2h0M620.7 509h0M621 540.9h0M621 544.7h0M621 515.1h0M621.2 510.9h0M621.3 544.8h0M621.3 541.4h0M621.4 538.6h0M621.4 515.1h0M621.5 514.9h0M621.6 544.1h0M621.7 513.6h0M621.7 512.8h0M621.7 535.6h0M621.9 540.2h0M622.1 543.4h0M622.1 509.3h0M622.3 503.8h0M622.4 514.7h0M622.4 512.4h0M622.5 541.3h0M622.6 535.6h0M622.6 502.1h0M622.6 508.1h0M622.8 500.9h0M623.3 508.3h0M623.6 507.2h0M623.6 536.9h0M623.6 514.7h0M623.7 543.5h0M623.8 539.4h0M623.9 506.6h0M623.9 512.5h0M623.9 513.5h0M624 511.1h0M624.2 541.6h0M624.2 510.5h0M624.2 504.7h0M624.3 514h0M624.4 508.4h0M624.5 538.9h0M624.6 501.3h0M624.7 508.6h0M625 507.1h0M625.1 546.8h0M625.1 537.1h0M625.2 539.4h0M625.6 514.1h0M625.7 540.8h0M625.7 512.5h0M625.9 511.8h0M625.9 501.7h0M626 509.3h0M626.1 515.1h0M626.2 551.2h0M626.2 507.8h0M626.4 515h0M626.6 541.8h0M626.8 509.9h0M626.9 512.7h0M626.9 502.7h0M627 512.2h0M627 505.9h0M627.1 513.7h0M627.2 512.8h0M627.2 502.5h0M627.3 514.5h0M627.5 536.6h0M627.5 510.2h0M627.6 506.4h0M627.8 505.7h0M627.9 511.4h0M628 508.8h0M628 513.4h0M628.1 501.6h0M628.2 514h0M628.6 538h0M628.7 507.5h0M628.8 538.2h0M629.2 508.2h0M629.3 512.9h0M629.4 499.4h0M629.5 536.2h0M629.5 535.6h0M629.6 514.4h0M629.7 504.8h0M629.8 539.8h0M629.8 539.9h0M629.8 514.5h0M629.9 505.8h0M630.1 511.8h0M630.3 536.5h0M630.3 515.1h0M630.5 505.2h0M630.6 536.5h0M630.8 509h0M630.8 511.5h0M630.9 514.1h0M631 514.2h0M631.1 514.5h0M631.3 535.6h0M631.4 538.2h0M631.4 505.5h0M631.6 505.1h0M631.6 511.2h0M631.9 513.1h0M632.2 514.1h0M632.3 507.1h0M632.4 514.7h0M632.4 512.3h0M632.5 537.7h0M632.6 512.4h0M632.8 505.7h0M633 505.3h0M633.1 512.7h0M633.2 507.6h0M633.4 537.8h0M633.5 513.2h0M633.6 537.8h0M633.8 540.6h0M633.8 539.2h0M634 535.6h0M634 511.2h0M634 539.4h0M634.1 536.3h0M634.1 537.2h0M634.1 536.1h0M634.2 511.8h0M634.3 508.2h0M634.4 512.8h0M634.5 509.3h0M634.7 506.7h0M634.8 536.5h0M634.8 510.1h0M634.8 514h0M634.9 548.9h0M635.1 514h0M635.1 538.4h0M635.3 513.7h0M635.3 546.8h0M635.3 538.3h0M635.5 543.8h0M635.5 500h0M635.8 547.7h0M635.8 505.2h0M636 509.4h0M636.1 514.5h0M636.2 539.1h0M636.3 508.2h0M636.5 539.6h0M636.5 541.9h0M636.6 510.4h0M636.6 544.6h0M636.7 510.4h0M637.2 511.8h0M637.3 515h0M637.4 515.4h0M637.4 506.7h0M637.6 540.8h0M637.7 514.2h0M637.7 503.9h0M637.7 513.7h0M637.8 514.2h0M637.9 511.7h0M638.1 508.7h0M638.2 537.6h0M638.4 540.7h0M638.4 512.4h0M638.5 536.4h0M638.8 547h0M638.8 502.1h0M639.1 513.8h0M639.2 515h0M639.2 507.6h0M639.4 506.4h0M639.6 537.8h0M639.8 545.9h0M639.8 544.6h0M639.9 500.2h0M639.9 500.2h0M639.9 538.3h0M640.2 514.6h0M640.3 536h0M640.3 514.7h0M640.3 505.5h0M640.4 543h0M640.6 508.7h0M640.8 537h0M640.8 511.3h0M641 515.1h0M641.1 513.3h0M641.2 513.1h0M641.2 545.8h0M641.2 513h0M641.2 514.7h0M641.5 508.5h0M641.5 542.1h0M641.5 507.1h0M641.6 540.9h0M641.6 514.6h0M641.8 537.3h0M642 502.7h0M642 539h0M642 537.2h0M642.2 539.8h0M642.2 499.1h0M642.2 514.7h0M642.3 507.1h0M642.7 507.7h0M642.7 507.9h0M642.7 513.9h0M643.1 511.8h0M643.2 541.8h0M643.2 541.8h0M643.2 510.1h0M643.3 544.7h0M643.4 514.1h0M643.4 505.4h0M643.4 541.1h0M643.5 508.4h0M643.6 513.1h0M643.7 497.7h0M643.7 537.9h0M643.7 512.3h0M643.8 513.3h0M644.1 510.6h0M644.4 512.9h0M644.7 505.3h0M644.8 510.4h0M644.9 512h0M644.9 507.7h0M645 514.3h0M645.2 512.2h0M645.4 540.7h0M645.8 513.9h0M645.8 510.7h0M646 515.1h0M646.5 510.9h0M646.6 547.5h0M646.7 539.4h0M646.8 544.5h0M647.1 508.5h0M647.2 542.6h0M647.2 513.8h0M647.3 513.3h0M647.5 507.8h0M647.9 504.6h0M648 543.9h0M648.2 507.5h0M648.4 544h0M648.5 535.8h0M648.7 514.4h0M648.9 535.7h0M648.9 513.6h0M649.4 546h0M649.6 506.3h0M649.7 505.7h0M649.7 510.1h0M649.7 539.9h0M649.8 536.6h0M649.8 542h0M649.9 547h0M650.2 538.3h0M650.2 501.5h0M650.2 547.7h0M650.5 541.8h0M650.5 550h0M650.6 536.7h0M650.8 507.6h0M650.8 541.4h0M650.9 507.3h0M651.1 512h0M651.2 540.5h0M651.4 510.9h0M651.6 547.3h0M651.9 537.5h0M651.9 540h0M652 545.1h0M652.2 539.1h0M652.4 508.7h0M652.4 513.7h0M652.4 540.9h0M652.5 545.7h0M652.5 515.4h0M652.6 543.7h0M652.6 508.3h0M652.6 507.2h0M652.8 541.1h0M652.8 537.8h0M652.8 503.8h0M652.8 540.4h0M652.9 514h0M653.2 550h0M653.3 512.2h0M653.4 549.6h0M653.4 536.7h0M653.6 547.6h0M653.8 538.6h0M653.8 541.2h0M653.9 509.5h0M653.9 503h0M654.2 512.2h0M654.4 546.4h0M654.6 541.7h0M654.7 549h0M654.9 544h0M655 536.3h0M655 542.7h0M655 539.9h0M655.1 539h0M655.2 514.2h0M655.3 513.4h0M655.5 514.3h0M655.6 508.8h0M655.9 549.2h0M656.2 546.1h0M656.3 510.5h0M656.6 536h0M656.8 514.9h0M656.8 537.8h0M656.9 540.4h0M657.1 543.7h0M657.2 513.9h0M657.3 535.9h0M657.5 510.9h0M657.7 512.3h0M657.8 549.9h0M657.8 538.4h0M658 539.9h0M658 539.5h0M658 502.2h0M658 540.6h0M658.1 509.2h0M658.2 553.1h0M658.4 508.5h0M658.6 550.4h0M658.8 543.4h0M658.9 539.9h0M658.9 542.4h0M659 537.2h0M659.1 515.2h0M659.2 538.5h0M659.2 543h0M659.2 535.7h0M659.2 513h0M659.3 539.6h0M659.6 535.5h0M659.7 546h0M659.7 536.2h0M659.7 505.8h0M659.8 513.4h0M659.9 536.2h0M660 543h0M660.4 537h0M660.9 535.8h0M660.9 548.2h0M661.1 535.6h0M661.2 508.5h0M661.3 547.4h0M661.4 545.3h0M661.5 547h0M661.5 512.6h0M661.7 515.3h0M661.7 509.9h0M661.8 513.5h0M662.1 537.7h0M662.1 507.3h0M662.1 508.6h0M662.3 512.8h0M662.4 508.5h0M662.4 550.3h0M662.5 499.9h0M662.7 543.9h0M662.7 513h0M662.9 510.9h0M662.9 512.1h0M662.9 536.1h0M663 513.8h0M663 511.9h0M663.1 505.2h0M663.7 536.3h0M663.8 505.3h0M663.9 505.5h0M663.9 512.9h0M664 513.6h0M664 512.4h0M664.2 540.8h0M664.3 537h0M664.3 511.6h0M664.3 507.8h0M664.7 535.5h0M664.8 506h0M665 509.8h0M665.1 512.3h0M665.2 542.7h0M665.4 514.1h0M665.5 537.4h0M665.6 540.5h0M665.6 513.6h0M665.7 513.5h0M665.7 507.1h0M665.7 544.3h0M665.8 514.5h0M666 552h0M666.2 510.9h0M666.3 540.2h0M666.4 538.3h0M666.4 542.1h0M666.5 540.2h0M666.6 540.6h0M666.6 537.9h0M666.7 535.9h0M666.9 513.4h0M667 538.9h0M667.2 511.9h0M667.3 535.5h0M667.5 541.3h0M667.5 536h0M667.6 539.7h0M667.6 552.6h0M667.7 536.5h0M667.8 500.9h0M667.8 540.4h0M667.8 538.3h0M667.9 535.5h0M668.1 510.6h0M668.2 508h0M668.2 536.5h0M668.2 542h0M668.2 506.9h0M668.4 538.1h0M668.4 549.5h0M668.6 511.3h0M668.7 513h0M668.8 535.9h0M668.8 535.7h0M668.9 512.4h0M669 544.4h0M669 504.3h0M669.1 540.3h0M669.1 513.6h0M669.2 538.8h0M669.2 547.4h0M669.3 541.6h0M669.8 539.2h0M670 536.5h0M670.1 543.9h0M670.2 541.6h0M670.3 538.3h0M670.6 536h0M670.6 546.6h0M670.7 513h0M670.9 539.6h0M671 535.9h0M671.5 543.2h0M671.5 505.1h0M671.6 543.7h0M672 501.7h0M672 545.1h0M672 513.5h0M672.2 505.4h0M672.3 537.8h0M672.3 513.9h0M672.4 537.5h0M672.5 550.8h0M672.5 535.5h0M672.6 542.5h0M672.9 508.7h0M673 504h0M673.2 509.4h0M673.2 538h0M673.3 544.8h0M673.5 541.2h0M673.7 543.8h0M673.7 543.6h0M674 539.6h0M674 499.9h0M674 541h0M674.1 535.5h0M674.1 508.9h0M674.8 539.9h0M674.8 512.3h0M675.1 541.5h0M675.6 542.8h0M675.6 512.8h0M675.6 511.6h0M675.6 544.5h0M675.7 543h0M676 512.4h0M676.1 506.6h0M676.2 536.4h0M676.3 512.5h0M676.3 512.5h0M676.4 546.8h0M676.5 506.2h0M676.5 535.8h0M676.5 512.3h0M676.6 509.9h0M676.7 512h0M676.7 512.4h0M676.7 550.9h0M676.7 514.3h0M676.9 514.7h0M676.9 512h0M677.1 505.7h0M677.2 538.1h0M677.2 510.2h0M677.5 505.7h0M677.6 513.8h0M677.6 541.8h0M677.8 507h0M677.8 535.8h0M678 512.3h0M678 507.6h0M678 537.8h0M678.1 514.6h0M678.1 543.5h0M678.3 540.1h0M678.3 511.7h0M678.3 512.7h0M678.4 537.1h0M678.8 505.4h0M678.8 515.3h0M678.8 506.3h0M678.8 512.9h0M678.9 542h0M679 548.8h0M679.2 515.3h0M679.2 537.8h0M679.3 538.2h0M679.4 515.3h0M679.5 542.1h0M679.6 503.1h0M679.6 507h0M679.7 511.3h0M679.7 511.2h0M679.9 512.7h0M679.9 498.4h0M680 508.6h0M680 536.4h0M680.1 536.7h0M680.1 511.7h0M680.3 508.9h0M680.5 499.6h0M680.5 535.7h0M680.8 538.6h0M680.8 513.3h0M680.9 506.3h0M681.1 515.4h0M681.1 536.1h0M681.2 513.6h0M681.2 514.4h0M681.5 535.7h0M681.5 501.6h0M681.8 501.9h0M681.9 513.2h0M682.1 507.7h0M682.5 537.9h0M682.5 514.1h0M682.5 514.7h0M682.6 545.2h0M682.8 505.8h0M682.9 502.6h0M682.9 535.7h0M682.9 537.3h0M683 511.4h0M683 506.4h0M683 512.2h0M683.1 513.1h0M683.1 510.8h0M683.4 544.3h0M683.4 511.5h0M683.5 515.4h0M683.6 535.7h0M683.7 544.6h0M683.8 513.6h0M684 540.2h0M684 513.8h0M684.1 510.5h0M684.3 509.2h0M684.3 511h0M684.4 509.8h0M684.4 540.3h0M684.6 512.3h0M684.7 513.1h0M684.8 545h0M685 513.1h0M685.1 507.3h0M685.1 552.3h0M685.3 535.8h0M685.4 501.1h0M685.4 537h0M685.5 537.6h0M685.5 513.9h0M685.7 514.4h0M685.9 541.3h0M685.9 511.4h0M686.1 544.4h0M686.2 543.4h0M686.2 536.5h0M686.3 505.5h0M686.4 549.7h0M686.6 513h0M686.6 511.2h0M686.7 506.9h0M686.7 537.6h0M686.7 541.2h0M687 507.5h0M687.3 536.6h0M687.4 536.9h0M687.4 514.5h0M687.5 538.3h0M687.5 509h0M687.7 512.3h0M687.7 536.9h0M687.7 513.6h0M687.9 541.3h0M688 514.8h0M688 541.8h0M688.1 515.3h0M688.2 541.2h0M688.2 538.4h0M688.7 512.1h0M688.7 508.8h0M688.9 543.8h0M689 545.5h0M689 515.1h0M689.1 513.6h0M689.1 511.1h0M689.2 547.6h0M689.3 513.5h0M689.4 537.7h0M689.5 515.2h0M689.6 543.4h0M689.6 539.1h0M689.7 535.5h0M689.8 514.3h0M689.9 536.5h0M690 536.3h0M690.1 515h0M690.1 537.8h0M690.2 513.7h0M690.4 542.8h0M690.4 542.9h0M690.4 510.5h0M690.5 514.7h0M690.5 545.7h0M690.6 544.8h0M690.7 542.3h0M690.7 544.8h0M690.9 541.5h0M691.1 505.3h0M691.2 508.2h0M691.2 503.4h0M691.5 509.9h0M691.5 541.4h0M691.5 552.6h0M691.5 535.7h0M691.6 539.1h0M691.7 535.4h0M691.7 540.2h0M692.1 507h0M692.2 537.7h0M692.3 513.9h0M692.4 513.8h0M692.5 513.9h0M692.6 536.1h0M692.7 508h0M692.7 542.6h0M693.2 514.1h0M693.3 542.9h0M693.3 507.1h0M693.4 514.9h0M693.5 544.9h0M693.6 541.9h0M693.9 540h0M694.1 508.5h0M694.1 542.9h0M694.2 503.8h0M694.5 537.9h0M694.7 505.7h0M695.1 543.1h0M695.1 535.5h0M695.2 538.5h0M695.3 538.3h0M695.4 513.4h0M695.8 548.6h0M695.9 536.9h0M695.9 511.2h0M696 508.4h0M696 511h0M696.1 545.9h0M696.2 511.9h0M696.3 543.8h0M696.5 538.3h0M696.6 536.1h0M696.6 509.7h0M696.7 541.2h0M696.8 542.4h0M696.9 543h0M697 512h0M697.1 514.3h0M697.3 537.8h0M697.3 506.3h0M697.7 536.3h0M697.7 511.3h0M697.9 537h0M697.9 510.3h0M698.1 539.1h0M698.1 545.9h0M698.1 544.7h0M698.2 514.3h0M698.2 536.1h0M698.2 512.5h0M698.3 513.3h0M698.5 508.3h0M698.5 514.4h0M698.7 504.3h0M698.9 507.8h0M699 507.1h0M699.1 536.2h0M699.1 512.1h0M699.2 539.1h0M699.3 548.3h0M699.5 541h0M699.7 508.5h0M699.7 511.2h0M699.8 515h0M700 514.1h0M700 513.3h0M700.2 511.2h0M700.3 510.6h0M700.4 540.6h0M700.4 506.5h0M700.5 545.9h0M700.6 508.3h0M700.6 547.6h0M700.8 511.2h0M700.8 536.2h0M700.8 538.6h0M701.2 508.3h0M701.3 544.9h0M701.3 538.6h0M701.4 512.4h0M701.4 538.5h0M701.5 507h0M702 542.8h0M702 512.5h0M702.2 514.5h0M702.3 537.5h0M702.4 512.5h0M702.6 510.4h0M702.7 538h0M702.8 546.6h0M702.8 550.3h0M703 548.3h0M703.1 544.2h0M703.1 514.5h0M703.4 537h0M703.5 507.5h0M703.6 544.4h0M703.7 511.3h0M703.7 544.4h0M703.7 512.1h0M703.7 512.4h0M703.8 539.4h0M703.8 536.3h0M704.1 542.4h0M704.1 514.6h0M704.2 535.9h0M704.2 502.2h0M704.3 513.6h0M704.3 542h0M704.5 513.6h0M704.7 535.5h0M704.7 512h0M705.3 502.6h0M705.4 512h0M705.5 540.7h0M705.5 537.1h0M705.5 504.8h0M705.5 549.2h0M705.6 509.4h0M705.6 508.9h0M705.6 510.2h0M705.6 538h0M705.7 541.3h0M705.8 514.1h0M705.8 536.8h0M705.8 536.9h0M705.8 537.6h0M705.8 514.1h0M706 539.4h0M706 504h0M706.3 539.8h0M706.4 507.9h0M706.4 508.9h0M706.5 541.5h0M706.7 506.9h0M706.7 546.9h0M707.1 536.8h0M707.2 501h0M707.3 543h0M707.4 538.7h0M707.4 535.5h0M707.4 536.7h0M707.6 510.6h0M707.7 510.9h0M707.7 514.4h0M707.8 542h0M707.8 544.9h0M707.9 514.6h0M707.9 538.3h0M708 512.8h0M708.1 537h0M708.3 506.3h0M708.3 537.6h0M708.3 513.2h0M708.4 540.3h0M708.5 538.2h0M708.6 513.9h0M708.6 545.5h0M708.6 541.8h0M708.7 536.2h0M708.8 536.5h0M708.9 503.9h0M709.2 536h0M709.7 537h0M710 537.9h0M710.1 538.5h0M710.1 538h0M710.5 510.4h0M710.5 544.1h0M710.6 513.2h0M710.7 508.7h0M710.8 511.4h0M711 513.5h0M711 551.7h0M711.1 511h0M711.3 512.8h0M711.9 538.5h0M712 548h0M712 537.9h0M712.1 541.2h0M712.2 538.7h0M712.3 512h0M712.4 544.9h0M712.4 537.3h0M712.5 501h0M712.6 512.6h0M712.8 504.6h0M713 539.6h0M713.2 511.3h0M713.3 512.7h0M713.4 512.5h0M713.4 543.2h0M713.5 542.8h0M713.5 543.9h0M713.9 504.2h0M714.2 545.5h0M714.3 504.5h0M714.3 539.8h0M714.4 503.1h0M714.5 504.9h0M714.5 541.1h0M714.8 510h0M714.9 542.4h0M715.1 513h0M715.2 512.8h0M715.2 502h0M715.6 513.5h0M715.6 536.2h0M715.7 504.9h0M715.7 513.4h0M715.7 515.1h0M715.7 515h0M715.8 542h0M715.9 536.4h0M716 515.1h0M716.1 540.3h0M716.1 506.4h0M716.2 544h0M716.2 503.9h0M716.2 514.8h0M716.3 541.8h0M716.4 544.4h0M716.4 513.7h0M716.6 535.7h0M716.8 511.4h0M716.8 544.7h0M716.8 550.1h0M717.2 514.5h0M717.2 513.6h0M717.3 540.7h0M717.3 508.3h0M717.4 510.5h0M717.4 543h0M717.4 510.3h0M717.5 535.6h0M717.5 514h0M717.6 505.9h0M717.7 539.1h0M717.8 514.2h0M717.8 512.1h0M717.9 514.3h0M717.9 498.3h0M717.9 540.6h0M717.9 503.5h0M718.1 503.5h0M718.3 535.5h0M718.3 513.3h0M718.4 549.5h0M718.5 511.9h0M718.6 536.7h0M718.6 508.7h0M718.7 507.6h0M718.8 501.4h0M718.8 513.6h0M718.9 543.7h0M719.1 507.4h0M719.2 512.9h0M719.4 536.1h0M719.5 536.6h0M719.6 538.7h0M719.6 509.9h0M719.7 509.7h0M719.9 538.5h0M719.9 509.3h0M720.2 508.9h0M720.3 514.7h0M720.4 511.3h0M720.7 511.1h0M720.8 512.2h0M721 552.9h0M721.1 506.7h0M721.2 513.4h0M721.2 511.4h0M721.3 512.4h0M721.3 511.3h0M721.4 535.5h0M721.4 547.7h0M721.4 509.1h0M721.4 539h0M721.5 512.5h0M721.6 510.4h0M721.9 511.4h0M722 514.3h0M722 510h0M722.1 507.6h0M722.2 514.7h0M722.2 537h0M722.3 501.5h0M722.4 498h0M722.5 506.5h0M722.5 542h0M722.7 538.7h0M722.7 535.9h0M722.7 501.1h0M723.1 538.4h0M723.1 510.6h0M723.2 514.8h0M723.2 511.5h0M723.4 545h0M723.7 504.6h0M723.9 514.7h0M724 514.4h0M724.3 539.4h0M724.6 515.3h0M724.9 537.7h0M724.9 509.4h0M725.2 501.6h0M725.4 511.1h0M725.5 514.1h0M725.6 552.1h0M725.6 551.7h0M725.7 513.9h0M725.7 515.4h0M725.8 506h0M725.8 499.4h0M725.9 512.8h0M726 546.9h0M726.1 512.1h0M726.2 515h0M726.3 514.5h0M726.4 541.7h0M726.4 513.4h0M726.5 537.5h0M726.7 509.9h0M727 542.6h0M727.1 537.9h0M727.1 512.7h0M727.2 539.4h0M727.2 513.8h0M727.3 538.7h0M727.4 509.2h0M727.6 511.8h0M727.7 504.8h0M727.8 514.1h0M728 540.3h0M728.1 542.1h0M728.2 509.6h0M728.7 503.6h0M728.8 513.5h0M728.9 513.6h0M728.9 539h0M729 539.8h0M729 503.7h0M729.3 546h0M729.5 515h0M729.6 500.9h0M729.9 509.8h0M729.9 503.9h0M729.9 507.5h0M730 513.5h0M730.2 537.6h0M730.2 513.5h0M730.4 515.2h0M730.5 513.4h0M730.8 508.5h0M730.8 514.4h0M730.9 514.3h0M731.2 544.9h0M731.3 539.5h0M731.3 512.7h0M731.6 542.1h0M731.7 514.2h0M731.7 508.9h0M731.8 500.6h0M731.9 542.2h0M732.1 510.4h0M732.2 539.3h0M732.2 539.3h0M732.4 515.1h0M732.5 541.6h0M732.7 537h0M733.1 513.4h0M733.4 511.1h0M733.5 538.1h0M733.6 537.1h0M733.7 512.1h0M734 539.7h0M734.1 497.6h0M734.2 502.6h0M734.2 505.1h0M734.2 512.1h0M734.2 541.4h0M734.3 551.6h0M734.6 502.6h0M734.7 508.5h0M735 515.2h0M735.1 542.4h0M735.1 515.2h0M735.2 499.5h0M735.4 506.4h0M735.6 536.7h0M735.8 514.5h0M735.9 536h0M735.9 506.6h0M736 514.8h0M736 512.9h0M736 537.4h0M736.1 538.1h0M736.2 536.3h0M736.2 507.9h0M736.2 515h0M736.3 539.1h0M736.3 543h0M736.4 537h0M736.5 503.2h0M736.6 544.9h0M736.7 536h0M736.7 539.4h0M736.8 538.5h0M736.8 509.6h0M736.8 509.4h0M736.8 535.5h0M736.9 538h0M737.1 515.1h0M737.1 535.8h0M737.3 537.9h0M737.3 510.5h0M737.4 515.1h0M737.6 513.2h0M737.6 513.1h0M737.7 539.6h0M737.8 536h0M737.8 509h0M737.8 548.5h0M737.9 536.3h0M737.9 540h0M737.9 537.7h0M738 537.5h0M738.2 514.6h0M738.2 535.8h0M738.3 538.8h0M738.4 515.4h0M738.4 541.6h0M738.6 544.9h0M738.7 537.9h0M738.8 536.7h0M739 545.9h0M739.2 508.8h0M739.3 505.9h0M739.4 537.2h0M739.5 542.9h0M739.5 535.7h0M739.6 512.1h0M739.7 509.8h0M739.9 542.3h0M740.2 537.1h0M740.5 510.2h0M740.6 545.8h0M740.7 512.3h0M740.7 513.8h0M740.8 505.1h0M740.8 536.7h0M741 512.4h0M741.1 501h0M741.2 542.7h0M741.2 541h0M741.2 540.4h0M741.3 513.2h0M741.4 542.7h0M741.5 510h0M741.6 536.7h0M741.6 536.1h0M741.8 500.9h0M742 537.9h0M742 514.3h0M742.1 541.2h0M742.3 543h0M742.4 543.5h0M742.5 537.6h0M742.6 505.2h0M742.6 549.2h0M742.8 541.6h0M743 545h0M743.3 540.6h0M743.3 510.5h0M743.3 540.1h0M743.5 543.6h0M743.8 507.8h0M744.1 505.9h0M744.2 511.7h0M744.3 535.9h0M744.3 536.7h0M744.3 541.6h0M744.5 535.9h0M744.5 540.3h0M744.5 536h0M744.9 541.6h0M745.1 538.7h0M745.3 535.6h0M745.4 549.4h0M745.5 510.1h0M745.5 545.3h0M745.6 507.5h0M745.8 539.6h0M746 541.7h0M746.1 540.8h0M746.1 500.2h0M746.2 540.2h0M746.3 537.4h0M746.4 538.9h0M746.4 504.8h0M746.6 536.7h0M746.6 507.2h0M746.7 507.5h0M746.8 537.4h0M746.8 512.1h0M747 508.1h0M747.3 537.9h0M747.3 539.3h0M747.6 542.6h0M747.7 514.9h0M747.7 505.9h0M747.8 513.5h0M747.9 539.1h0M747.9 508.6h0M747.9 515.3h0M747.9 548.2h0M748.1 515.4h0M748.1 510.9h0M748.4 537.9h0M748.5 545.7h0M748.6 514.5h0M748.8 550.8h0M748.8 506.5h0M748.9 540.5h0M748.9 513.7h0M749 537.2h0M749.2 514.1h0M749.3 535.7h0M749.5 504.2h0M749.5 538h0M749.6 497h0M749.6 514.9h0M749.7 536.5h0M749.7 537.4h0M749.9 542.7h0M750 548h0M750 538.7h0M750.2 510.6h0M750.5 535.8h0M750.6 513.7h0M750.9 537.2h0M751 515.3h0M751 508.4h0M751 512.3h0M751.1 512.4h0M751.2 544.1h0M751.4 509.1h0M751.4 509.7h0M751.5 503.8h0M751.5 540.9h0M751.5 536.7h0M751.5 514.5h0M751.6 542.8h0M751.7 541h0M751.8 543.9h0M751.8 539.8h0M752 508.9h0M752 512.2h0M752.1 507.2h0M752.2 546.7h0M752.5 512.9h0M752.6 535.4h0M752.7 535.7h0M752.7 510.8h0M752.8 538.7h0M752.8 542.9h0M752.9 506.8h0M753.2 514.6h0M753.2 507.3h0M753.4 505.7h0M753.7 549.6h0M753.9 538.8h0M753.9 508.5h0M754 540.2h0M754.3 511.3h0M754.3 539h0M754.4 508.7h0M754.5 544.5h0M754.5 545.4h0M754.6 542.4h0M754.7 504.8h0M755 511.9h0M755.1 513.1h0M755.2 544h0M755.3 536.2h0M755.4 507h0M755.6 507.8h0M756.1 536.4h0M756.2 539.1h0M756.3 509.4h0M756.3 513.5h0M756.3 514.5h0M756.5 540.5h0M756.5 550.1h0M756.5 513.2h0M756.7 551.2h0M756.9 510.6h0M756.9 537.8h0M756.9 505.5h0M757.1 504.5h0M757.3 513.1h0M757.3 508.1h0M757.4 510.4h0M757.4 512.3h0M757.5 537.8h0M757.6 536.1h0M757.7 543.5h0M757.9 514.4h0M757.9 507.3h0M758.1 537.6h0M758.6 540.1h0M758.7 512.6h0M758.8 545.4h0M758.9 535.9h0M758.9 546.3h0M758.9 510.4h0M759.1 539.8h0M759.4 509h0M759.4 512.2h0M759.4 544.1h0M759.5 536h0M759.6 509h0M759.8 510.1h0M759.9 538.9h0M760.1 509.1h0M760.3 535.8h0M760.4 540.6h0M760.4 543h0M760.4 539.1h0M760.5 505.4h0M760.6 542.2h0M760.8 536h0M760.8 514.1h0M760.8 538.2h0M761 511.9h0M761.1 544.9h0M761.1 515.3h0M761.1 501.3h0M761.2 507.2h0M761.2 515.2h0M761.2 539.2h0M761.3 539.4h0M761.5 511.9h0M761.5 543.1h0M761.6 507.1h0M761.6 505.9h0M761.8 538h0M761.8 513.2h0M761.8 515.3h0M761.9 515h0M761.9 536.3h0M762.1 504.2h0M762.1 509h0M762.1 511.2h0M762.3 551.4h0M762.3 540.4h0M762.4 510.3h0M762.5 514.3h0M762.6 515h0M762.8 515h0M763 549.1h0M763.2 541.3h0M763.3 547.4h0M763.3 509h0M763.5 549.4h0M763.9 507.1h0M764 509.3h0M764 511.4h0M764 547.7h0M764.1 514.4h0M764.2 507.5h0M764.2 539.6h0M764.4 510.3h0M764.6 515.3h0M764.7 513.9h0M764.8 505.1h0M764.8 539.9h0M764.8 540.7h0M764.9 504.6h0M764.9 545.6h0M764.9 507.2h0M765 507h0M765 544.1h0M765.2 540.8h0M765.3 515.1h0M765.3 514.2h0M765.4 500.8h0M765.6 543.7h0M765.7 514.7h0M765.9 504.4h0M765.9 498.7h0M766 509.2h0M766 510h0M766 542.7h0M766.2 512.8h0M766.4 508.6h0M766.6 499h0M766.6 513.1h0M766.6 511.6h0M766.9 515h0M767.1 511.7h0M767.1 506.6h0M767.4 538h0M767.5 539.5h0M768.2 538.2h0M768.7 535.8h0M768.9 543.9h0M769 537.4h0M769 509.5h0M769 504.6h0M769.4 542.3h0M769.7 537.4h0M769.7 509.2h0M769.8 497.1h0M769.8 537.3h0M769.8 509.3h0M769.9 544h0M770 540.7h0M770.5 506.2h0M770.8 538.9h0M771.3 536.6h0M771.3 536.7h0M771.3 508.6h0M771.5 513.2h0M771.5 511.7h0M771.5 535.7h0M771.7 514h0M771.8 538.3h0M771.8 548.7h0M771.9 536h0M771.9 512.5h0M772.2 535.4h0M772.5 538.2h0M772.6 514.4h0M772.8 536.2h0M772.9 536.3h0M773.4 514.1h0M773.5 510.3h0M773.5 508.2h0M773.5 505.6h0M773.7 538.1h0M773.8 513.2h0M773.9 515.1h0M773.9 513.6h0M774.2 536.5h0M774.2 512.8h0M774.3 545.5h0M774.7 512.6h0M774.8 508.1h0M775 541.9h0M775 507.8h0M775.1 514.3h0M775.1 498.8h0M775.7 538.1h0M776 541.6h0M776.1 513.9h0M776.3 513.5h0M776.3 542.1h0M776.3 546.3h0M776.4 548.1h0M776.9 541h0M776.9 505.7h0M777 512.3h0M777.1 514.5h0M777.2 514.6h0M777.4 537.4h0M777.5 543.6h0M777.6 538.2h0M777.7 545.3h0M778 511h0M778 514.1h0M778 536.3h0M778.1 504.9h0M778.7 497.3h0M778.9 507.4h0M779 511.5h0M779.1 515h0M779.2 538.3h0M779.2 506.8h0M779.4 544.7h0M779.7 514.6h0M779.8 502.1h0M779.8 511.3h0M779.8 507.9h0M779.9 546.6h0M779.9 536.3h0M779.9 544h0M780 535.4h0M780 514.7h0M780.3 536.1h0M780.3 506.6h0M780.3 537.6h0M780.8 506.4h0M780.9 536h0M780.9 511.5h0M780.9 538h0M781.1 514.1h0M781.1 510.9h0M781.2 505.9h0M781.5 542.2h0M781.5 514.9h0M781.6 538.7h0M781.7 515.1h0M781.7 515.4h0M781.8 550.4h0M781.8 545.3h0M781.9 537.8h0M781.9 512h0M782 535.6h0M782 538.2h0M782.1 537.2h0M782.1 536.7h0M782.2 537h0M782.3 515.3h0M782.3 513.1h0M782.4 507.1h0M782.5 511.5h0M782.7 542.3h0M782.8 542.6h0M782.8 538h0M782.9 508.6h0M782.9 507.6h0M783 510.4h0M783.3 511.5h0M783.4 513.4h0M783.6 506h0M783.6 537.1h0M783.7 511.1h0M783.8 513.3h0M784.4 536.5h0M784.7 552.4h0M784.9 536.3h0M785.1 542.6h0M785.2 543.2h0M785.3 513.4h0M785.3 511h0M785.4 498.4h0M785.7 536.5h0M785.8 514.1h0M785.8 540.5h0M785.9 546.7h0M786 514.4h0M786 512.2h0M786.1 513.8h0M786.2 538.7h0M786.4 535.9h0M786.4 511.5h0M786.4 545.5h0M786.5 513.2h0M786.5 542.6h0M786.5 507.2h0M786.8 543.6h0M786.8 512.5h0M787 511.1h0M787.1 540.9h0M787.2 510h0M787.3 514.1h0M787.3 541.2h0M787.4 535.9h0M787.4 542.5h0M787.6 536.9h0M787.7 512.8h0M787.7 515.1h0M787.9 500.4h0M788 536h0M788 535.6h0M788.1 506.7h0M788.3 513.3h0M788.3 541.8h0M788.3 546.3h0M788.4 537h0M788.4 547.4h0M788.5 539.7h0M788.5 508.4h0M788.5 540.5h0M788.6 538.8h0M788.8 540.2h0M788.9 536.4h0M788.9 538.7h0M789.2 507.5h0M789.2 514.8h0M789.4 513.7h0M789.4 537.9h0M789.5 509.9h0M789.6 540.5h0M789.6 535.4h0M789.6 539.2h0M789.8 541.5h0M790 538.5h0M790 544.8h0M790 507.1h0M790.1 537.2h0M790.1 506.6h0M790.1 536.7h0M790.3 513.9h0M790.3 514.1h0M790.5 549.9h0M790.5 539.9h0M790.5 541.6h0M790.8 535.6h0M790.8 538.6h0M791.2 512.4h0M791.5 504.8h0M791.5 504.5h0M791.5 512.7h0M791.6 540.3h0M791.7 540.1h0M791.8 538.7h0M791.9 538h0M792 511.4h0M792.1 514h0M792.2 536.8h0M792.3 536h0M792.3 537.5h0M792.3 538.2h0M792.5 548h0M792.5 536.2h0M792.6 545.4h0M792.7 541.7h0M792.7 535.5h0M792.7 544.4h0M792.8 538.7h0M792.9 541.9h0M793 512.8h0M793.1 538.8h0M793.2 543.1h0M793.3 536.8h0M793.4 512h0M793.5 541.4h0M793.5 541.1h0M793.6 545.5h0M793.6 541.1h0M793.7 542.9h0M793.7 536.1h0M793.8 545.5h0M793.8 537.3h0M793.9 541.5h0M793.9 511.2h0M793.9 514.7h0M794 540.9h0M794.2 514h0M794.3 537h0M794.4 536.4h0M794.5 503.6h0M794.6 511.2h0M794.6 541.9h0M794.6 543.1h0M794.7 538.6h0M795 537.6h0M795 546.3h0M795.5 512.8h0M795.5 541.3h0M795.7 538.2h0M795.9 513.1h0M796.3 515.1h0M796.4 538.4h0M796.6 507.3h0M796.9 538.8h0M796.9 551.7h0M797.1 512.3h0M797.1 550.9h0M797.2 542.3h0M797.4 500.5h0M797.4 502h0M797.6 541.4h0M797.6 538.7h0M797.9 553.5h0M797.9 535.9h0M798.1 506.7h0M798.3 536.2h0M798.5 536.5h0M798.7 537.7h0M798.7 535.8h0M798.8 536.7h0M798.8 542.4h0M798.8 543h0M798.8 511.8h0M798.8 550h0M798.9 546.4h0M799 514.9h0M799.1 542.2h0M799.3 513.4h0M799.8 536.9h0M800.1 514.1h0M800.1 499.4h0M800.2 539.8h0M800.5 538.2h0M800.8 539.5h0M800.9 515h0M801.1 503.4h0M801.2 545.1h0M801.2 513.7h0M801.3 539.6h0M801.4 514.1h0M801.5 514.5h0M801.6 505.3h0M801.6 514h0M801.7 539h0M801.7 545.6h0M801.8 512.9h0M802.4 538.5h0M802.5 513.8h0M802.5 543.7h0M802.6 541.5h0M802.7 539.1h0M802.7 514.6h0M802.7 538h0M802.8 536.8h0M803 514.1h0M803.2 539.1h0M803.7 535.8h0M803.8 537h0M803.9 514.5h0M803.9 510.7h0M804 512.7h0M804.2 543.3h0M804.2 536.3h0M804.2 537.5h0M804.2 511.6h0M804.4 514.5h0M804.6 507.3h0M804.6 541.2h0M804.7 536.4h0M804.7 536.1h0M804.7 548.2h0M804.8 513.8h0M804.9 540.1h0M805 540.9h0M805.1 548.1h0M805.1 538.6h0M805.1 539.2h0M805.1 509.9h0M805.2 536.1h0M805.2 540h0M805.3 537.1h0M805.4 513.6h0M805.5 508.6h0M805.7 542.1h0M806 541h0M806.1 541.8h0M806.2 536.6h0M806.2 513.8h0M806.2 514.8h0M806.3 499.3h0M806.4 506.8h0M806.6 538.2h0M806.7 511.9h0M806.7 537.2h0M806.8 540.5h0M806.9 515h0M807 553h0M807.1 546.8h0M807.1 538.7h0M807.3 539.8h0M807.3 540.2h0M807.3 508.9h0M807.3 536.9h0M807.5 505.6h0M807.5 535.9h0M807.5 537.6h0M807.9 545.1h0M807.9 503.4h0M808 501.7h0M808.2 538.7h0M808.4 509.2h0M808.5 536.1h0M808.6 535.6h0M808.6 511.2h0M808.7 535.4h0M808.7 511.8h0M808.8 541.1h0M808.8 542.5h0M808.8 508.5h0M808.9 513.4h0M809 512.8h0M809.1 538h0M809.1 500.7h0M809.3 537.9h0M809.3 499h0M809.3 508.6h0M809.3 537.8h0M809.5 537.5h0M809.6 506.6h0M809.7 515.3h0M809.9 501.9h0M809.9 512.7h0M810.2 542.2h0M810.3 538.7h0M810.3 514h0M810.3 503.7h0M810.3 497.3h0M810.4 546h0M810.8 540.8h0M810.9 506.9h0M811 508.2h0M811 542.5h0M811.1 505.1h0M811.2 535.8h0M811.2 512.4h0M811.3 513.9h0M811.4 509.1h0M811.5 536.4h0M811.8 511.8h0M812 538.6h0M812.3 512.9h0M812.3 540.3h0M812.4 539.2h0M812.5 552.5h0M812.6 540h0M812.6 540.2h0M812.9 515.3h0M813.1 508.9h0M813.3 511.1h0M813.5 513.8h0M813.5 505.3h0M813.6 499.9h0M814 508.2h0M814.1 514.1h0M814.4 541.5h0M814.6 504.8h0M814.6 515.3h0M814.9 514.1h0M815.4 509h0M815.5 513.8h0M815.5 511.7h0M815.5 536.1h0M815.6 513h0M815.6 512.4h0M815.7 515h0M815.7 508.2h0M815.7 543h0M815.7 505.6h0M815.9 536.9h0M816 507.1h0M816.1 539h0M816.3 514.2h0M816.3 512.8h0M816.5 536.6h0M816.6 512.8h0M816.7 541.8h0M816.8 501.3h0M817.1 504.3h0M817.3 543.6h0M817.5 506.8h0M817.7 539.3h0M817.7 515h0M817.8 503.8h0M817.8 511.5h0M817.9 545.2h0M818.1 499.1h0M818.2 511.9h0M818.2 507.3h0M818.3 501.1h0M818.3 510.8h0M818.5 511.7h0M818.6 512.9h0M818.8 512.2h0M818.9 511.4h0M818.9 507.1h0M819 515.3h0M819 512.9h0M819.2 501.1h0M819.2 505h0M819.3 509.1h0M819.5 536.4h0M819.5 539.5h0M819.6 505.4h0M819.7 514.9h0M819.7 537.5h0M819.8 513.1h0M819.9 514.1h0M820 499.1h0M820.1 543.3h0M820.3 511.7h0M820.5 539h0M820.5 510.3h0M820.7 536.2h0M821 540.4h0M821 510.3h0M821.1 540.9h0M821.1 515.3h0M821.2 512.9h0M821.3 541.2h0M821.4 548.7h0M821.4 510.6h0M821.6 503.7h0M821.8 511.5h0M822 500.1h0M822.3 541.1h0M822.8 505.2h0M822.8 511.6h0M822.9 535.8h0M822.9 507.3h0M822.9 544.9h0M823 510.4h0M823.1 509.6h0M823.2 536h0M823.2 543.7h0M823.3 509.1h0M823.3 508h0M823.4 515.2h0M823.5 537.4h0M823.5 510.5h0M823.5 504.2h0M823.5 497.7h0M823.7 509.2h0M823.7 541.4h0M823.8 508.7h0M823.8 499.6h0M823.8 511.3h0M824 503h0M824 506.2h0M824.2 553.2h0M824.2 538.8h0M824.4 510h0M824.5 537.7h0M824.6 507.2h0M824.6 504.5h0M824.7 514.2h0M824.7 508.2h0M824.8 506.3h0M824.8 503.5h0M824.9 536.3h0M824.9 512.6h0M824.9 514.8h0M824.9 539.5h0M825.1 510.5h0M825.1 512.6h0M825.1 508.7h0M825.3 539.8h0M825.6 541.2h0M825.6 547.3h0M825.8 536.5h0M825.9 536.5h0M826.1 510.7h0M826.2 513.4h0M826.3 513.3h0M826.4 548.6h0M826.5 514.1h0M826.6 542.1h0M826.7 514.8h0M826.8 508.7h0M826.8 541.4h0M826.8 544.4h0M826.9 513.5h0M827.1 542.5h0M827.2 549.6h0M827.2 541h0M827.5 514.1h0M827.6 539.4h0M827.7 498.7h0M827.7 538.4h0M827.7 545.2h0M827.9 512.2h0M828 508.8h0M828 510.9h0M828.1 511.8h0M828.6 540.1h0M828.8 509.5h0M829.1 548.8h0M829.3 543.2h0M829.4 535.5h0M829.4 510.1h0M829.8 514.9h0M829.9 509.7h0M829.9 511.6h0M830.1 504h0M830.1 536.9h0M830.2 497.7h0M830.2 505.5h0M830.4 536.1h0M830.5 538.6h0M830.6 513.9h0M830.7 503.3h0M830.9 506.8h0M831 536.4h0M831 507.7h0M831 544.3h0M831.1 536.1h0M831.2 514.8h0M831.4 511.2h0M831.4 512.8h0M831.5 511.2h0M831.6 513.9h0M831.6 502.1h0M831.8 536.2h0M831.9 503h0M832 508h0M832.1 512.1h0M832.1 513.8h0M832.1 537.9h0M832.2 509.7h0M832.3 507.5h0M832.3 514.3h0M832.5 510.9h0M832.6 512.4h0M833.1 536.7h0M833.3 515h0M833.3 507.2h0M833.6 540.8h0M833.7 536.5h0M833.8 505.5h0M834 538.7h0M834 551.3h0M834.4 513.8h0M834.6 510h0M834.7 537.5h0M834.8 508.9h0M835.1 513.4h0M835.1 502.5h0M835.2 510.9h0M835.6 507.1h0M835.7 544.9h0M835.9 536.1h0M836.1 544.8h0M836.2 512.2h0M836.2 510.9h0M836.3 512.6h0M836.4 514.4h0M836.5 513h0M836.5 536.5h0M836.7 537.6h0M836.7 511.6h0M836.9 509.6h0M836.9 512.5h0M837.1 537.5h0M837.3 540.6h0M837.3 536.6h0M837.5 512.6h0M837.5 514.1h0M837.6 514.1h0M837.7 535.6h0M837.7 536h0M837.8 512.7h0M837.8 543.2h0M837.9 538.2h0M838 537.5h0M838.1 547.4h0M838.2 505.8h0M838.4 540.3h0M838.6 507h0M838.9 515.4h0M839.1 544.3h0M839.3 540.4h0M839.3 539.3h0M839.3 513.9h0M839.4 535.5h0M839.6 550.5h0M839.7 514.6h0M839.7 543.5h0M839.8 535.5h0M840 499.5h0M840 535.9h0M840.1 535.8h0M840.1 536.3h0M840.2 514.3h0M840.3 511.9h0M840.4 504.6h0M840.5 507.6h0M840.6 543.5h0M840.8 511.2h0M840.8 546.3h0M840.9 538.7h0M841 542.6h0M841 547.8h0M841.3 549.3h0M841.3 506.1h0M841.5 538.4h0M841.6 538.8h0M841.7 538.9h0M841.8 541.7h0M841.8 538.2h0M841.9 507.9h0M841.9 543.4h0M842 539.7h0M842 543.3h0M842.2 537.9h0M842.3 544.6h0M842.4 536.8h0M842.5 544.1h0M842.5 508h0M842.5 514.5h0M842.6 536.2h0M842.7 545.2h0M842.8 514.1h0M843.1 510.6h0M843.3 515.4h0M843.5 507.6h0M843.5 515h0M843.6 537.3h0M843.7 542.3h0M843.7 514.7h0M843.8 537.7h0M843.9 498.5h0M844.1 512.7h0M844.3 541.8h0M844.4 539.7h0M844.6 536.1h0M844.6 541.2h0M845.1 542.1h0M845.5 513.8h0M845.7 514.4h0M845.8 513h0M846 544.9h0M846 536.5h0M846.2 545h0M846.3 506.4h0M846.4 552.7h0M846.4 537h0M846.5 537h0M846.5 543.3h0M846.6 541.6h0M846.6 535.6h0M846.6 510.9h0M846.9 512.1h0M846.9 508.8h0M847 513.1h0M847.1 513.3h0M847.2 543.2h0M847.2 512.1h0M847.3 542.1h0M847.4 540h0M847.5 543.3h0M847.7 538.7h0M847.7 514.1h0M847.9 538h0M847.9 539.4h0M848 535.4h0M848.1 538.5h0M848.1 501h0M848.2 537.3h0M848.3 514.5h0M848.5 537.7h0M848.6 539.8h0M848.7 514.4h0M848.7 548.1h0M849 510.3h0M849.3 542h0M849.4 514.9h0M849.6 536.3h0M849.7 551h0M849.8 541.2h0M849.8 539.5h0M849.9 550.7h0M850.1 544.5h0M850.1 509.9h0M850.2 513.9h0M850.2 536.9h0M850.4 512.1h0M850.5 515.3h0M850.7 540.4h0M850.8 501.9h0M850.8 536h0M850.8 510.4h0M850.8 504.4h0M851 505.5h0M851 512.3h0M851.2 548h0M851.2 508.6h0M851.9 542.5h0M852 539.9h0M852 539.2h0M852.1 507h0M852.5 514h0M852.5 544.7h0M852.6 510.6h0M852.6 540.6h0M853 503.8h0M853 508h0M853.2 513.1h0M853.4 512.1h0M853.6 509.5h0M853.7 504.3h0M853.7 503h0M853.8 512.1h0M853.8 516.2h0M853.9 516.5h0M854.1 509.3h0M854.1 504.3h0M854.2 512.3h0M854.2 503.2h0M854.2 514.8h0M854.2 506.7h0M854.5 517.1h0M854.6 540.5h0M854.6 505.9h0M854.6 515.5h0M854.9 546h0M855.3 508.7h0M855.5 500.7h0M855.5 514.6h0M855.5 508.2h0M855.6 501.5h0M855.8 515.8h0M856 513.2h0M856 517.9h0M856.1 512.2h0M856.1 505.2h0M856.2 508.3h0M856.2 517.5h0M856.4 508.5h0M856.5 512.3h0M856.5 540.7h0M856.6 513.3h0M856.6 541.3h0M856.7 518.1h0M856.8 511.7h0M856.9 513.7h0M857.1 513.1h0M857.1 518h0M857.3 514.7h0M857.6 517.9h0M857.6 510.4h0M857.6 510.9h0M857.7 518.1h0M857.7 509.3h0M857.7 516.6h0M857.8 518.1h0M858 542.7h0M858 545.3h0M858.2 547.5h0M858.2 510.4h0M858.3 497.9h0M858.3 515.7h0M858.4 546.5h0M858.5 548.5h0M858.5 517h0M858.7 541.2h0M858.7 549.9h0M858.7 541.7h0M858.9 505.9h0M859.1 545.3h0M859.1 517.7h0M859.1 541.6h0M859.4 506h0M859.5 511.4h0M859.5 512.7h0M859.5 545.5h0M859.6 513.9h0M859.9 552.3h0M859.9 506.4h0M860.1 516.1h0M860.2 552h0M860.6 542.7h0M860.6 516.1h0M860.6 545.5h0M860.7 513.2h0M860.7 546.4h0M860.8 514.3h0M860.9 557.6h0M860.9 546.5h0M860.9 517.4h0M861.3 543.9h0M861.5 542.2h0M861.8 542.6h0M862 540.5h0M862.1 514.6h0M862.2 510.6h0M862.2 541.1h0M862.5 543.1h0M862.5 511.5h0M862.6 510.8h0M862.6 517.7h0M862.7 514.6h0M862.8 548h0M862.8 517.9h0M862.9 516.3h0M862.9 546h0M862.9 546.4h0M863.1 544.8h0M863.3 508.7h0M863.4 509h0M863.6 518h0M863.6 503.7h0M863.7 514.5h0M863.9 515.8h0M863.9 548h0M864 541.3h0M864.1 517.3h0M864.7 507h0M864.9 511.1h0M864.9 517.7h0M864.9 511.1h0M865 512h0M865.1 509.6h0M865.3 504.1h0M865.3 516.5h0M865.3 513.7h0M865.3 500.8h0M865.4 543.4h0M865.4 506h0M865.4 516.4h0M865.5 510.6h0M865.5 506.4h0M866 543.7h0M866.1 547.3h0M866.1 508.8h0M866.1 512.7h0M866.4 510.7h0M866.4 515.7h0M866.5 547.1h0M866.7 512h0M866.8 506.7h0M866.8 513.5h0M867 513.5h0M867.1 514.1h0M867.1 553.8h0M867.2 515.4h0M867.4 543.8h0M867.5 512.3h0M867.5 541.4h0M867.6 499.8h0M867.7 543.2h0M868.4 546.8h0M868.5 506.3h0M868.5 547.4h0M868.5 515.1h0M868.6 547.2h0M868.7 516.4h0M868.9 546.2h0M869.5 510.5h0M869.6 514h0M869.9 516.5h0M869.9 515.3h0M870.6 543h0M870.8 503.8h0M870.8 542.3h0M871.2 549.3h0M871.2 517.5h0M871.2 549.5h0M871.3 549.7h0M871.5 555.3h0M871.8 547.7h0M872 517.8h0M872 542.8h0M872.1 510.3h0M872.3 543h0M872.6 540.3h0M872.9 545.8h0M872.9 515h0M872.9 547.5h0M872.9 500.5h0M873.2 540.5h0M873.4 545.4h0M873.4 540.2h0M873.4 514.8h0M873.5 511.7h0M873.5 516.2h0M873.6 542.4h0M873.6 540.3h0M873.6 543h0M873.6 546.7h0M873.7 510.2h0M873.8 505.2h0M873.8 506.5h0M873.8 553.8h0M874 511.9h0M874.1 515.4h0M874.1 517.3h0M874.2 504.9h0M874.3 514h0M874.3 549.9h0M874.3 549.2h0M874.4 516.7h0M874.4 554.4h0M874.5 545.2h0M874.5 511.7h0M875 541.1h0M875.2 517.4h0M875.6 547.1h0M875.7 543.4h0M875.8 517.3h0M876 540.2h0M876.1 544.5h0M876.2 513h0M876.2 562.6h0M876.2 542.5h0M876.5 543.1h0M876.6 549.4h0M876.6 541.5h0M876.7 540.8h0M876.7 550.1h0M876.8 541.2h0M876.9 542.8h0M877 517.2h0M877 543.5h0M877 545.4h0M877.4 540.9h0M877.5 546.6h0M877.7 542.7h0M878 553.6h0M878 512.2h0M878.2 543.5h0M878.2 516.3h0M878.2 513.2h0M878.6 561.1h0M878.8 508.5h0M878.9 516.9h0M878.9 512h0M879.2 541.9h0M879.2 543.2h0M879.6 540.2h0M879.7 542.6h0M880 549.9h0M880.3 516.3h0M880.5 558.5h0M880.5 510.6h0M880.5 515.5h0M880.8 517.7h0M881 506.5h0M881.2 559.2h0M881.3 516.2h0M881.5 542.3h0M881.7 514.8h0M882.2 540.2h0M882.2 513.1h0M882.4 540.7h0M882.4 517.5h0M882.5 543.3h0M882.6 502.9h0M882.7 514.1h0M882.7 545.7h0M882.8 514.4h0M882.8 504.4h0M882.9 546.2h0M883.3 552.1h0M883.3 544.9h0M883.6 544.9h0M883.6 545.4h0M883.6 550.9h0M883.8 558.8h0M883.9 547.8h0M884.2 552.1h0M884.4 541.9h0M884.5 540.8h0M884.7 551.5h0M884.7 516.3h0M884.8 541.7h0M884.8 540.9h0M884.8 540.9h0M885 553.4h0M885 541.6h0M885.1 551.2h0M885.5 542.3h0M885.5 559.7h0M885.5 559.5h0M885.6 552.7h0M885.7 546h0M885.7 540.3h0M885.7 541.9h0M885.7 547.7h0M885.7 545.8h0M886 543.1h0M886.1 547.5h0M886.1 556.1h0M886.1 550.8h0M886.1 551.2h0M886.3 552h0M886.3 553.5h0M886.4 541.9h0M886.4 555h0M886.6 517.7h0M886.7 543.7h0M886.8 542.6h0M886.9 542h0M887 547.7h0M887.1 545.9h0M887.1 549.9h0M887.3 542.2h0M887.4 545.6h0M887.5 558.3h0M887.5 540.7h0M887.6 516.6h0M887.8 541.6h0M887.8 542.6h0M888 540.9h0M888.1 541.4h0M888.2 546.2h0M888.3 545.1h0M888.4 547.9h0M888.6 552.4h0M888.7 547.2h0M888.8 553.9h0M888.8 556.7h0M888.9 545.4h0M889.1 546h0M889.1 540.9h0M889.1 549.5h0M889.2 551h0M889.3 548.1h0M889.5 543.6h0M889.5 547h0M889.5 549.9h0M890.1 513.7h0M890.1 542.5h0M890.2 542.6h0M890.4 549.5h0M890.5 560.4h0M890.6 545.1h0M890.6 517.2h0M890.7 506.1h0M890.7 547.6h0M891.3 541.9h0M891.4 551h0M891.5 550.2h0M891.6 557.9h0M891.6 542.6h0M891.9 541.9h0M892 541.1h0M892.1 498h0M892.2 551.3h0M892.2 541.9h0M892.5 541.8h0M892.9 546.4h0M893 515h0M893.2 542h0M893.2 551.4h0M893.3 514.7h0M893.3 517.7h0M893.5 513.8h0M893.6 540.3h0M893.7 512.3h0M893.8 506.7h0M893.8 558.1h0M894 543.5h0M894.1 513.4h0M894.1 540.9h0M894.3 516.3h0M894.4 544.7h0M894.7 515.6h0M895 542h0M895.1 515h0M895.2 512.8h0M895.2 506.4h0M895.3 512.9h0M895.3 518.1h0M895.4 514.1h0M895.5 517.7h0M895.5 513.8h0M895.5 510.8h0M895.5 510.4h0M895.7 541.1h0M895.7 504.9h0M895.9 549.3h0M895.9 540.6h0M895.9 540.7h0M896 543.6h0M896 516.5h0M896 517.7h0M896.1 543.9h0M896.1 547.9h0M896.3 551.1h0M896.4 552h0M896.5 551.6h0M896.5 517h0M896.7 515.3h0M896.7 542.9h0M896.8 547.6h0M896.8 544.8h0M897.1 544.5h0M897.2 515.1h0M897.2 549.4h0M897.3 542.1h0M897.5 517.4h0M897.7 540.2h0M897.8 516.5h0M898.5 540.7h0M898.5 514.9h0M898.6 505.9h0M898.7 540.8h0M898.9 550h0M899.1 545.2h0M899.1 546h0M899.2 542.5h0M899.7 517.5h0M899.9 544.4h0M900.2 558.2h0M900.2 515.3h0M900.3 540.5h0M900.4 514.4h0M900.5 508.8h0M900.6 515.5h0M900.7 512h0M901.1 508.5h0M901.2 540.3h0M901.6 512.5h0M901.6 541.6h0M901.9 515.9h0M901.9 517.7h0M902 507.5h0M902.4 507.7h0M902.4 515.4h0M902.4 512.4h0M902.6 516.1h0M902.7 506.7h0M902.9 510.2h0M903.1 515.5h0M903.1 547.4h0M903.2 505.1h0M903.3 544.2h0M903.3 513.8h0M903.6 515.8h0M903.7 499.3h0M903.8 506.6h0M904.1 508.1h0M904.2 514.4h0M904.2 509.4h0M904.3 514h0M904.5 507.7h0M904.7 511.4h0M904.7 540.9h0M904.7 541.3h0M904.8 516.3h0M905 513.4h0M905 507.8h0M905 517.2h0M905.1 541.1h0M905.3 508.6h0M905.4 516.3h0M905.7 509.8h0M905.8 506.6h0M905.8 514.9h0M905.9 504.1h0M905.9 516h0M905.9 509.4h0M905.9 501.8h0M906 517.4h0M906.1 515.8h0M906.3 516h0M906.4 510.8h0M906.5 508.3h0M906.6 509.3h0M906.8 509.5h0M906.9 509.5h0M907 511.8h0M907.3 505.8h0M907.4 541.5h0M907.4 516.5h0M907.5 545.1h0M907.6 514.4h0M907.7 514.8h0M907.9 542.1h0M908 516.1h0M908.1 514.9h0M908.3 503.7h0M908.4 517.7h0M908.4 511.8h0M908.4 518h0M908.5 510.2h0M908.5 500.1h0M908.6 512.6h0M908.7 508.8h0M908.7 514.6h0M908.9 550.6h0M908.9 542.3h0M909.4 542.6h0M909.4 512.8h0M909.5 515.4h0M909.5 502.5h0M909.6 516.7h0M909.6 502.7h0M909.6 506.8h0M909.7 511.9h0M909.7 515.7h0M909.7 513.1h0M909.9 517.2h0M910 554.1h0M910.1 509.4h0M910.1 540.6h0M910.3 508.4h0M910.4 513h0M910.4 515.3h0M910.5 512h0M910.5 518.1h0M910.6 515.8h0M910.6 511.3h0M910.7 506.1h0M910.7 516.4h0M910.7 516.9h0M910.8 509.6h0M910.8 517.2h0M910.9 512.8h0M910.9 540.4h0M910.9 514.3h0M911 504.9h0M911.1 542.8h0M911.2 509.9h0M911.2 516.4h0M911.6 509.5h0M911.6 515.4h0M911.6 545.1h0M911.6 505.8h0M911.7 516.9h0M912 517.1h0M912 515.3h0M912 517.2h0M912.1 516.2h0M912.2 509.9h0M912.3 512.6h0M912.5 516.8h0M912.5 509.8h0M912.6 555.1h0M912.6 516.1h0M912.8 514.8h0M912.8 511.5h0M912.9 515.1h0M913 517.9h0M913.1 515.7h0M913.3 513.4h0M913.4 517.7h0M913.4 505.9h0M913.5 508.8h0M913.6 512h0M913.6 514.2h0M913.6 543.2h0M913.9 509.3h0M914 508h0M914.1 518.1h0M914.2 515.4h0M914.2 548.6h0M914.3 515.1h0M914.4 515h0M914.9 516.8h0M914.9 541.8h0M915.2 510h0M915.4 506.5h0M915.5 517.6h0M915.7 540.9h0M915.7 542.1h0M915.7 552.4h0M915.8 546.9h0M915.9 543.7h0M916.1 541.2h0M916.1 511.9h0M916.2 501.8h0M916.2 562h0M916.2 511.5h0M916.2 543.3h0M916.6 545.1h0M916.6 517.4h0M916.8 544.2h0M916.9 542h0M917 514.8h0M917.1 548.9h0M917.1 517.9h0M917.2 541.3h0M917.4 550.4h0M917.5 551.4h0M917.6 553.2h0M917.7 541.5h0M917.8 556.5h0M917.8 517.8h0M917.9 542.5h0M918.2 561.7h0M918.3 556.5h0M918.3 548h0M918.3 550.8h0M918.3 541.5h0M918.4 550.1h0M918.4 559.1h0M918.5 541h0M918.6 545h0M918.6 541h0M918.6 544.6h0M918.7 555.5h0M918.8 551.6h0M918.8 540.1h0M918.8 543.1h0M918.8 514.5h0M918.9 512.1h0M919 541.1h0M919.2 541.4h0M919.2 547.4h0M919.2 554.9h0M919.3 542.9h0M919.3 558.5h0M919.4 555.7h0M919.5 558.9h0M919.5 551.2h0M919.5 542.8h0M919.6 544.3h0M919.7 553.4h0M919.7 544.9h0M919.7 549.6h0M919.8 547.1h0M920 551.6h0M920 514.8h0M920.1 542.3h0M920.1 541.2h0M920.4 546.7h0M920.4 548.2h0M920.5 549.9h0M920.6 559.8h0M920.6 551h0M920.8 552.4h0M921 542.4h0M921 544.5h0M921 546.3h0M921.3 557.9h0M921.4 552h0M921.6 542.9h0M921.6 540.7h0M921.6 550.8h0M921.6 555.2h0M921.7 541.5h0M921.7 541.4h0M921.9 546.9h0M922 542.9h0M922.2 542.8h0M922.2 557.8h0M922.2 558.4h0M922.2 514h0M922.3 556h0M922.4 515.1h0M922.5 544.4h0M922.8 562.6h0M922.9 514.7h0M923 555h0M923.5 513.8h0M923.5 550.9h0M923.6 545.3h0M923.6 540.9h0M923.6 540.4h0M923.6 516.4h0M923.7 554.6h0M923.9 544.7h0M923.9 553.9h0M923.9 550.1h0M924 556.7h0M924.1 552.9h0M924.2 542.1h0M924.2 554h0M924.2 550.7h0M924.3 542.1h0M924.3 543.9h0M924.6 549h0M924.7 551h0M925 549.8h0M925.3 516.2h0M925.4 551.3h0M925.4 548.6h0M925.5 550.7h0M925.7 506.5h0M925.9 547.3h0M926.2 555.3h0M926.5 543.9h0M926.7 558.7h0M926.7 542.5h0M926.8 560h0M926.8 547.3h0M926.8 518.1h0M926.9 546h0M927 561.4h0M927.1 516.6h0M927.1 545h0M927.1 546.8h0M927.1 543.4h0M927.1 548.9h0M927.2 542.3h0M927.3 543.5h0M927.3 552.6h0M927.3 546.2h0M927.3 555.6h0M927.5 541.7h0M927.5 541.1h0M927.6 550.2h0M927.7 554.8h0M927.7 544.6h0M927.8 551.3h0M927.9 550.7h0M928 547.8h0M928.1 542.5h0M928.1 541.7h0M928.2 513.7h0M928.2 552.6h0M928.4 543.2h0M928.5 548.1h0M928.6 544.5h0M928.6 546h0M928.7 543.2h0M928.7 540.6h0M928.8 514.4h0M928.8 545.7h0M928.9 517.6h0M928.9 541.7h0M928.9 547.2h0M928.9 556.4h0M928.9 546.9h0M929 549.2h0M929.1 515.4h0M929.3 549h0M929.4 516.5h0M929.4 552.6h0M929.4 541h0M929.4 551.9h0M929.5 552h0M929.5 540.8h0M929.6 510.2h0M929.7 543h0M929.7 540.2h0M929.7 549.6h0M929.8 542.1h0M930 555.7h0M930.2 540.8h0M930.2 511.8h0M930.6 547.1h0M930.7 540.2h0M930.7 541.7h0M930.8 514.9h0M930.9 545.8h0M931 543.7h0M931 515.1h0M931.2 541.2h0M931.4 502.8h0M931.6 509h0M931.7 517.2h0M931.9 543.9h0M932 514.7h0M932.2 511.1h0M932.3 543.5h0M932.3 506.7h0M932.4 515.1h0M932.4 517.7h0M932.4 515.2h0M932.5 516.2h0M932.7 544.8h0M932.7 507.6h0M932.8 512h0M932.8 513h0M932.9 502.4h0M932.9 510.1h0M932.9 516.8h0M932.9 543.3h0M933.1 509h0M933.1 505.4h0M933.2 513.9h0M933.2 509.4h0M933.2 509.1h0M933.2 500.2h0M933.3 515h0M933.4 511.9h0M933.4 511.8h0M933.4 505.7h0M933.6 540.1h0M933.6 517h0M933.8 517.1h0M933.9 509.3h0M933.9 510.1h0M934.1 516.7h0M934.2 510.5h0M934.3 509.7h0M934.5 512h0M934.6 515.6h0M934.8 513.1h0M935.3 511h0M935.3 504.7h0M935.4 501.1h0M935.4 509.3h0M935.4 509.7h0M935.5 516.8h0M935.5 516.8h0M935.5 514.1h0M935.6 507.4h0M935.7 509.6h0M935.8 516.4h0M935.9 515.8h0M935.9 513.6h0M936.1 508.4h0M936.4 540.2h0M936.4 512.5h0M936.4 510.3h0M936.4 505.2h0M936.5 542.4h0M936.6 541.5h0M936.7 509.9h0M936.7 508.7h0M936.8 510.8h0M936.9 509.2h0M936.9 517.8h0M937.2 516h0M937.2 502.5h0M937.3 511.4h0M937.3 510.9h0M937.3 516.7h0M937.7 516.8h0M937.7 517.8h0M937.8 499.3h0M937.8 504.6h0M937.8 505.2h0M937.9 512.4h0M937.9 514.2h0M938 550.9h0M938 513.3h0M938.1 507.1h0M938.1 514.5h0M938.1 517.4h0M938.2 503.3h0M938.7 509.5h0M938.8 541.1h0M938.8 547.6h0M938.9 506.7h0M939 517.6h0M939.1 513.4h0M939.2 517.9h0M939.2 505.3h0M939.2 549.8h0M939.2 511.5h0M939.3 513.9h0M939.3 548.8h0M939.3 509.1h0M939.4 510.8h0M939.4 516.8h0M939.5 512.2h0M939.5 513.8h0M939.7 514.5h0M939.9 503h0M940 515.9h0M940.1 514.3h0M940.1 544.2h0M940.1 505.5h0M940.3 515.3h0M940.3 503.3h0M940.4 498.7h0M940.6 515.4h0M940.7 512.1h0M940.8 510.8h0M940.9 542.5h0M940.9 515h0M941 541.5h0M941.1 514.9h0M941.3 514.6h0M941.3 508.5h0M941.4 514.2h0M941.4 509h0M941.5 515.4h0M941.6 540.8h0M941.6 512.5h0M941.9 512.1h0M942.1 518h0M942.2 510.3h0M942.4 504.2h0M942.4 511.4h0M942.5 517.2h0M942.6 512.7h0M942.6 517.1h0M942.9 540.3h0M943.2 541.2h0M943.3 514.9h0M943.5 546.2h0M943.6 511.9h0M943.8 510.8h0M943.9 540.2h0M944 518h0M944.1 510.5h0M944.3 510.3h0M944.6 545.7h0M944.7 511.4h0M944.7 550.4h0M944.8 514.8h0M944.9 548.2h0M945 543.9h0M945.2 541.2h0M945.5 547.6h0M945.6 549.8h0M945.6 552.9h0M945.7 540.1h0M945.9 544h0M945.9 543.3h0M946 517.3h0M946.2 549.2h0M946.2 546.7h0M946.3 541.9h0M946.4 544.3h0M946.4 549.2h0M946.6 549.2h0M946.7 551.4h0M946.7 555.9h0M947.3 550h0M947.6 549.1h0M947.6 542.5h0M947.6 541.3h0M947.7 555.2h0M947.8 540.9h0M947.9 540.7h0M948 547.9h0M948.1 512h0M948.2 550.8h0M948.2 540.4h0M948.3 540.8h0M948.5 540.2h0M948.5 544h0M948.5 513.5h0M948.6 546.3h0M948.6 506h0M948.6 542.2h0M948.7 517.6h0M948.7 560.8h0M948.8 511.5h0M948.8 548.4h0M948.9 546.4h0M948.9 545.3h0M949 517h0M949 543.1h0M949.2 547.3h0M949.2 561.6h0M949.2 560.6h0M949.7 512.1h0M949.7 516.6h0M950.1 516h0M950.1 553.6h0M950.2 517.6h0M950.2 557.8h0M950.3 541.4h0M950.3 551.3h0M950.4 543.5h0M950.7 507.2h0M950.8 550.1h0M950.9 506.9h0M951 544.7h0M951.2 543.6h0M951.2 506.6h0M951.4 545.3h0M951.4 500.2h0M951.4 540.3h0M951.6 506.4h0M951.6 545.6h0M951.6 548.2h0M951.7 518h0M952.1 548.3h0M952.2 513.1h0M952.3 517.8h0M952.8 516.2h0M952.9 504.7h0M953 542.8h0M953.3 513.9h0M953.4 542.5h0M953.4 515.3h0M953.5 513.2h0M953.6 545.2h0M953.6 503.7h0M954 513.9h0M954 544.9h0M954 517.4h0M954.1 516.4h0M954.1 516.4h0M954.2 542.5h0M954.2 546.5h0M954.3 542h0M954.3 501.3h0M954.3 541.4h0M954.4 516.1h0M954.5 507.6h0M954.5 505.4h0M954.5 518h0M954.6 555.2h0M954.6 512h0M954.7 545.1h0M954.8 548.5h0M955.2 544.7h0M955.6 515h0M955.8 508.1h0M955.9 516.9h0M955.9 512.4h0M956 507.6h0M956 510.7h0M956.3 540.6h0M956.7 540.2h0M956.8 546.9h0M956.9 549.5h0M956.9 516.4h0M957.1 505.9h0M957.2 504.7h0M957.2 540.4h0M957.4 540.5h0M957.6 542.1h0M957.6 548.7h0M957.6 507.4h0M957.8 515.9h0M957.8 543.3h0M958 504.4h0M958.1 544.8h0M958.2 544.2h0M958.2 548.4h0M958.4 541h0M958.5 516.8h0M958.6 552.8h0M959 543.8h0M959.2 513.9h0M959.3 545.9h0M959.3 548.6h0M959.6 540.8h0M959.7 516.6h0M959.8 512.3h0M959.9 516.1h0M960.3 517.7h0M960.3 510.2h0M960.3 517.7h0M960.3 505.3h0M960.4 540.4h0M960.7 548.2h0M960.7 543.1h0M961 543.7h0M961.2 517h0M961.2 541.3h0M961.2 540.2h0M961.2 508h0M961.3 514.1h0M961.5 542.3h0M961.6 511.4h0M961.6 543.4h0M961.7 551.2h0M962.3 516.1h0M962.5 514.9h0M962.6 515.2h0M962.6 517.2h0M962.7 544.5h0M962.8 516.1h0M962.8 546.3h0M962.9 516.8h0M963 507.3h0M963 514.4h0M963 541.8h0M963 508.2h0M963.1 510.1h0M963.1 513.4h0M963.2 506.7h0M963.4 507.1h0M963.5 541.6h0M963.6 511.1h0M963.7 509.4h0M963.8 504.5h0M963.8 501.1h0M964 515.3h0M964 515.8h0M964.1 543.6h0M964.2 514h0M964.4 509h0M964.5 518.1h0M964.5 514.1h0M964.6 544.5h0M964.6 516.4h0M964.7 549.6h0M964.8 517.9h0M965 547.5h0M965.1 543.9h0M965.2 544.1h0M965.3 543.1h0M965.3 550.4h0M965.4 541h0M965.6 543.8h0M965.6 543.5h0M965.6 544.4h0M965.8 506.3h0M966 517.8h0M966.4 551.5h0M966.4 552.3h0M966.6 553.1h0M966.8 545.7h0M966.8 547.1h0M966.8 544.2h0M967 541.2h0M967.1 544.7h0M967.1 541.8h0M967.1 545h0M967.2 543.2h0M967.3 542.3h0M967.3 562.1h0M967.3 516h0M967.4 510.9h0M967.5 541.3h0M967.5 552.8h0M967.6 509h0M967.6 552.6h0M967.7 544.7h0M967.7 546.6h0M967.8 513.5h0M967.8 546.3h0M967.8 558.6h0M967.9 544h0M967.9 542.3h0M967.9 549.3h0M968.1 550.3h0M968.1 546.7h0M968.2 545.3h0M968.3 550.5h0M968.4 542.2h0M968.5 547.6h0M968.5 548h0M968.6 542.2h0M968.6 541.9h0M968.6 552.4h0M968.7 541.5h0M968.9 541h0M969 552h0M969 558.1h0M969.6 543.4h0M969.6 544.7h0M969.7 547.8h0M970 555.9h0M970.1 517.1h0M970.1 543h0M970.3 552.8h0M970.3 546.1h0M970.4 547.9h0M970.5 547h0M970.6 555.6h0M970.6 545.2h0M970.6 552.6h0M970.8 554.9h0M970.8 552.3h0M970.9 555.8h0M970.9 547.5h0M970.9 547.8h0M971 540.6h0M971.1 540.3h0M971.4 549.4h0M971.5 545.3h0M971.6 546.9h0M971.6 546.6h0M971.7 542.7h0M971.9 549.6h0M971.9 545.5h0M972 544.9h0M972.1 546h0M972.2 543.1h0M972.2 543.8h0M972.4 515.1h0M972.6 542.9h0M972.6 543.3h0M972.8 504.5h0M972.8 507.3h0M972.8 549.4h0M972.9 549.4h0M973 546.7h0M973 540.9h0M973 556.3h0M973.1 549.5h0M973.3 547.1h0M973.4 551.1h0M973.8 503.6h0M974 515.1h0M974.3 552.9h0M974.4 509.1h0M974.5 546.9h0M974.5 544.9h0M974.7 545.5h0M974.8 517.9h0M974.9 545h0M975 517.1h0M975.6 540.9h0M975.7 514.1h0M975.7 541.9h0M975.8 543.9h0M975.8 541.5h0M975.9 547.1h0M976 507.2h0M976.4 541.2h0M976.5 544.9h0M976.5 515.9h0M976.6 542.5h0M976.7 517.5h0M976.7 509.6h0M976.8 512.1h0M976.9 513.8h0M977 548.8h0M977.3 516.3h0M977.4 513h0M977.4 504.5h0M977.5 555.5h0M977.6 513.7h0M977.7 545.8h0M977.8 544.1h0M977.8 545.3h0M977.9 542h0M977.9 517.4h0M977.9 513.9h0M978.1 503.3h0M978.1 541.9h0M978.3 500.9h0M978.3 548h0M978.3 515.3h0M978.3 545.5h0M978.4 512.1h0M978.7 508.1h0M978.7 510.2h0M978.8 511.6h0M978.8 517.5h0M979.1 540.7h0M979.2 546.6h0M979.2 546.1h0M979.2 517.7h0M979.4 510h0M979.5 516.7h0M979.5 508.7h0M979.5 512.6h0M979.6 507h0M979.6 510.2h0M979.8 505.1h0M979.8 517.4h0M979.9 514.4h0M979.9 505h0M979.9 508.3h0M979.9 513.9h0M979.9 516.6h0M980.5 514.5h0M980.5 546.2h0M980.6 511.9h0M980.8 511.8h0M981 556.5h0M981.1 498.4h0M981.1 517.3h0M981.1 515h0M981.1 508.4h0M981.1 503.7h0M981.2 516.6h0M981.3 516.1h0M981.3 549.5h0M981.4 507.8h0M981.4 504.7h0M981.7 517.3h0M981.8 514h0M981.9 514.3h0M981.9 542.4h0M982 510.5h0M982.1 510.7h0M982.1 514.4h0M982.3 541.3h0M982.3 541.3h0M982.5 508.8h0M982.5 502.3h0M982.6 511h0M982.6 502.1h0M982.7 544.3h0M982.8 511.8h0M982.9 516.8h0M982.9 507.3h0M983.1 513.4h0M983.3 506.2h0M983.4 514.1h0M983.4 562.2h0M983.4 544.3h0M983.4 515.7h0M983.6 513.8h0M983.6 541.1h0M983.6 508.8h0M983.6 500.9h0M983.9 508h0M984 553.5h0M984.1 513.5h0M984.2 516.8h0M984.3 512.7h0M984.3 515.2h0M984.4 546h0M984.5 512h0M984.6 508.8h0M984.9 501.4h0M984.9 508.6h0M985 512.2h0M985 506h0M985.2 546.4h0M985.2 515.4h0M985.3 507.5h0M985.3 517.7h0M985.5 513.5h0M985.5 517.2h0M985.7 517.1h0M985.8 501.6h0M986 510.9h0M986.1 511.6h0M986.3 515.4h0M986.4 504.6h0M986.4 551.6h0M986.5 511.4h0M986.6 509.4h0M986.7 506.8h0M987 511.5h0M987.1 551.2h0M987.3 514h0M987.3 517.3h0M987.3 517.4h0M987.3 549.8h0M987.5 513.8h0M987.7 517.9h0M987.7 511.8h0M988 512.7h0M988 507.7h0M988.3 518.1h0M988.4 514.7h0M988.5 511.2h0M988.5 510.8h0M988.6 516.5h0M988.6 542.8h0M988.6 500.8h0M988.7 541.6h0M988.7 515.1h0M989 544.7h0M989.1 517.6h0M989.1 516.1h0M989.1 542.6h0M989.2 510.5h0M989.2 499.3h0M989.2 515.7h0M989.3 507.7h0M989.4 505.5h0M989.5 513.2h0M989.6 517.9h0M989.6 503.3h0M989.7 513.9h0M989.7 511.1h0M989.8 516.7h0M989.8 514.1h0M989.8 509.5h0M989.9 511.5h0M989.9 515.4h0M989.9 517.2h0M990 517.8h0M990 551.7h0M990.2 546.6h0M990.2 549.1h0M990.2 545.1h0M990.4 505.4h0M990.5 508.1h0M990.5 509.2h0M990.5 547.3h0M990.8 510.5h0M990.9 511.8h0M991 511.9h0M991.2 540.3h0M991.2 546.2h0M991.2 504.2h0M991.2 511.9h0M991.3 515.4h0M991.3 543.5h0M991.5 512.2h0M991.5 517.6h0M991.6 518h0M991.6 517.8h0M991.6 543.2h0M991.7 513.7h0M991.7 509.8h0M991.7 517.4h0M992 553.2h0M992.1 509.3h0M992.3 553.1h0M992.4 514.1h0M992.4 515.4h0M992.5 517.8h0M992.7 510.7h0M992.7 552.9h0M992.7 548.6h0M993.2 511.3h0M993.2 555.6h0M993.5 515.4h0M993.5 547.1h0M993.7 544.2h0M993.8 540.7h0M993.9 549.3h0M993.9 553.4h0M994 517.7h0M994.1 540.2h0M994.2 541h0M994.3 553.2h0M994.4 552.5h0M994.4 517h0M994.4 541.3h0M994.5 546h0M994.5 549.7h0M994.6 545.8h0M994.8 547.1h0M994.8 542.8h0M994.8 544.5h0M994.9 545.3h0M995 550.2h0M995.1 540.3h0M995.2 545.6h0M995.2 548.7h0M995.2 543.4h0M995.2 552.8h0M995.4 540.4h0M995.4 548.9h0M995.4 549h0M995.5 543.7h0M995.6 560.2h0M995.6 547.3h0M995.6 548.9h0M995.7 554.2h0M995.7 544.7h0M995.7 557.5h0M995.7 543h0M995.8 542.2h0M995.8 543.8h0M995.8 544.5h0M995.8 546.4h0M995.9 544h0M996 517.7h0M996.2 543.3h0M996.2 541.2h0M996.5 550.8h0M996.5 548.1h0M996.6 550.3h0M996.8 513.8h0M996.8 541.6h0M996.9 543.3h0M996.9 541.4h0M997 540.8h0M997.1 558.2h0M997.1 545.5h0M997.2 550.4h0M997.3 544.6h0M997.4 546.3h0M997.4 542h0M997.5 562.7h0M997.6 544.8h0M997.7 545.8h0M997.8 541.6h0M997.8 514.4h0M997.8 548.9h0M997.9 548.2h0M998 554h0M998.1 541.8h0M998.2 552.8h0M998.5 544.6h0M998.5 546.3h0M998.6 553.5h0M998.7 545.6h0M998.7 540.4h0M998.8 543.2h0M998.9 550.1h0M998.9 541.1h0M999.1 549.8h0M999.1 549.2h0M999.2 543.9h0M999.4 546.1h0M999.7 516.8h0M999.8 540.4h0M999.8 547.3h0M999.9 549.7h0M999.9 547.3h0M1000 544.6h0M1000.1 540.3h0M1000.1 554.5h0M1000.1 549.1h0M1000.2 552h0M1000.3 549.4h0M1000.5 541.3h0M1000.5 517.7h0M1000.8 544.5h0M1000.9 544.6h0M1001.1 546.7h0M1001.3 517.1h0M1001.4 549.7h0M1001.5 540.7h0M1001.6 540.3h0M1001.7 540.6h0M1001.8 509.4h0M1001.9 551.6h0M1002.1 515.1h0M1002.2 540.3h0M1002.3 550.3h0M1002.4 505.8h0M1002.7 562.1h0M1002.7 517.5h0M1002.9 517h0M1003.3 541.3h0M1003.6 511h0M1003.9 553h0M1003.9 512.1h0M1003.9 515.4h0M1004 542.3h0M1004.4 549.5h0M1004.6 541h0M1004.7 545.4h0M1004.7 544.7h0M1004.8 546.7h0M1004.9 540.7h0M1005 550.4h0M1005 556.7h0M1005.1 545.4h0M1005.3 545h0M1005.3 551.3h0M1005.7 541.7h0M1005.9 550.4h0M1006.1 550.1h0M1006.1 550h0M1006.1 543.6h0M1006.3 541.6h0M1006.4 544h0M1006.4 552.4h0M1006.4 558.1h0M1006.6 545h0M1006.6 547.3h0M1006.6 543h0M1006.6 555.7h0M1006.7 541.2h0M1006.7 540.7h0M1006.8 546.8h0M1006.9 516.5h0M1007.1 559.6h0M1007.1 555.4h0M1007.1 547.5h0M1007.3 557.7h0M1007.3 553h0M1007.4 504.7h0M1007.8 547.2h0M1007.9 549h0M1008 518.3h0M1008.1 509.7h0M1008.2 549.9h0M1008.2 547.5h0M1008.3 557.3h0M1008.3 557.4h0M1008.7 555.4h0M1008.8 551.1h0M1008.8 545.3h0M1008.9 544.8h0M1009.3 564.9h0M1009.5 545.1h0M1009.6 545.5h0M1009.7 550h0M1010.1 547.5h0M1010.1 518.4h0M1010.3 549h0M1010.6 545.6h0M1010.6 555h0M1010.7 554.1h0M1010.7 554.2h0M1010.7 547.8h0M1010.7 552.1h0M1011 510h0M1011.1 517.2h0M1011.2 518.3h0M1011.2 552.7h0M1011.3 512.5h0M1011.4 514.1h0M1011.6 514.9h0M1011.7 509.6h0M1011.7 519h0M1012 504.4h0M1012.1 514.8h0M1012.1 506.3h0M1012.1 519h0M1012.1 516.3h0M1012.1 517.1h0M1012.1 546.5h0M1012.2 516.9h0M1012.2 548.3h0M1012.4 544.5h0M1012.5 505.7h0M1012.6 515.5h0M1012.6 551.6h0M1012.9 510.9h0M1013 512.4h0M1013 505.5h0M1013.2 554.9h0M1013.2 558.3h0M1013.3 511.7h0M1013.3 553.8h0M1013.4 513.5h0M1013.6 517.1h0M1013.6 510.2h0M1013.7 505.8h0M1013.9 507.3h0M1013.9 510.8h0M1014 505.9h0M1014.2 512.7h0M1014.3 512.8h0M1014.4 511.2h0M1014.7 515.6h0M1014.7 512.2h0M1014.7 517.9h0M1014.8 517.2h0M1014.8 513.5h0M1014.9 515.7h0M1014.9 549.1h0M1015 515.8h0M1015.1 506.8h0M1015.2 548.1h0M1015.5 509.9h0M1015.7 512.8h0M1015.7 513.4h0M1015.7 509.7h0M1015.9 547h0M1015.9 550.7h0M1016.1 512h0M1016.2 563.4h0M1016.4 561.1h0M1016.5 547.3h0M1016.5 518h0M1016.5 551.8h0M1016.6 558.7h0M1016.8 549.7h0M1017 557.7h0M1017.1 512.3h0M1017.2 515h0M1017.2 518.8h0M1017.4 547.7h0M1017.6 512.9h0M1017.6 544.5h0M1017.8 558.8h0M1017.8 551.8h0M1018 518.3h0M1018.1 550.9h0M1018.2 551.3h0M1018.3 553h0M1018.3 557.8h0M1018.3 554.4h0M1018.4 545.3h0M1018.6 550.7h0M1018.7 544.4h0M1019 550.3h0M1019.4 515.4h0M1019.4 544.6h0M1019.7 513.7h0M1019.9 516.1h0M1019.9 506.6h0M1020 503.9h0M1020.2 551.7h0M1020.3 561.2h0M1020.3 500.6h0M1020.3 508h0M1020.6 562.6h0M1020.7 518.2h0M1020.7 544.3h0M1020.8 515.6h0M1020.9 500.8h0M1020.9 513h0M1020.9 511.6h0M1021.1 544.7h0M1021.1 512.9h0M1021.3 517.7h0M1021.3 512.5h0M1021.5 502.5h0M1021.6 506.5h0M1021.6 545.1h0M1021.8 515.2h0M1022 546.4h0M1022 517.3h0M1022.1 514h0M1022.1 509h0M1022.2 509.7h0M1022.2 512.8h0M1022.4 512.9h0M1022.4 511.5h0M1022.5 546.4h0M1022.6 512.8h0M1022.8 501.5h0M1022.8 514.3h0M1022.9 548.3h0M1023 518.2h0M1023.1 515.5h0M1023.3 547.3h0M1023.4 504.4h0M1023.4 549.8h0M1023.4 512.9h0M1023.9 515.2h0M1023.9 499.6h0M1023.9 548.5h0M1023.9 516.4h0M1024 500.4h0M1024.2 554.4h0M1024.3 507.8h0M1024.4 561h0M1024.5 509.4h0M1024.5 546.1h0M1024.6 513.1h0M1024.7 506.9h0M1024.8 511.8h0M1024.8 546.5h0M1024.9 515.4h0M1025 518.5h0M1025.3 518.7h0M1025.5 552.5h0M1025.7 548h0M1025.9 545.8h0M1026 515.8h0M1026.2 552.3h0M1026.4 544.2h0M1026.4 549.8h0M1026.5 552.4h0M1026.6 515.3h0M1026.7 556.5h0M1026.7 549.2h0M1026.8 545.3h0M1026.8 557.1h0M1026.9 555.2h0M1026.9 550.1h0M1027 555.5h0M1027.1 555.5h0M1027.2 545.8h0M1027.3 518.3h0M1027.6 548.1h0M1027.8 559.1h0M1027.8 548.9h0M1027.9 550.2h0M1028 550.1h0M1028.2 561.4h0M1028.3 545.2h0M1028.3 545.6h0M1028.5 548.4h0M1028.7 552.3h0M1028.8 546.5h0M1028.9 510.8h0M1029 554.7h0M1029.1 560.9h0M1029.3 557.1h0M1029.3 547.7h0M1029.4 509.6h0M1029.5 546.8h0M1029.6 510.7h0M1029.7 551.3h0M1030 549.6h0M1030.1 517.3h0M1030.2 545h0M1030.2 551.8h0M1030.2 517h0M1030.2 516.8h0M1030.2 545h0M1030.5 544.7h0M1030.6 516.6h0M1030.6 546.9h0M1030.6 516.8h0M1030.7 548.8h0M1030.8 500.9h0M1030.8 545.1h0M1030.8 510.9h0M1030.9 545.7h0M1031 515.5h0M1031 554.3h0M1031.1 552.4h0M1031.2 508.2h0M1031.5 546.7h0M1031.6 548.8h0M1031.9 504.8h0M1031.9 511.9h0M1032.1 517.8h0M1032.2 511.3h0M1032.3 515.3h0M1032.4 510.2h0M1032.4 552.6h0M1032.4 515h0M1032.6 518.2h0M1032.8 510.8h0M1033 553h0M1033.2 501.8h0M1033.7 508.9h0M1033.7 516.3h0M1034 559.9h0M1034.2 552.3h0M1034.2 547.1h0M1034.4 548.7h0M1034.4 516.4h0M1034.4 549.8h0M1034.9 544.2h0M1035 553.1h0M1035.1 517h0M1035.2 509.9h0M1035.3 516.1h0M1035.4 545.8h0M1035.5 517.1h0M1035.7 553h0M1035.9 547.1h0M1036 553.4h0M1036 519.1h0M1036.1 509.9h0M1036.2 549.4h0M1036.2 518.6h0M1036.4 545.2h0M1036.5 544.7h0M1036.5 553h0M1036.6 556.7h0M1036.6 563.8h0M1036.7 517.7h0M1036.8 519.1h0M1036.9 567h0M1037.4 546h0M1037.5 549.5h0M1037.5 547.3h0M1037.5 554h0M1037.6 555h0M1037.6 558.2h0M1037.7 553h0M1037.7 544.2h0M1038 566h0M1038.1 514.3h0M1038.2 548.2h0M1038.3 552.6h0M1038.4 558.6h0M1038.5 548.7h0M1038.5 546.5h0M1038.5 518.1h0M1038.6 506.7h0M1038.6 515.4h0M1038.7 516.5h0M1038.7 517.7h0M1038.8 516.5h0M1039.1 548.3h0M1039.1 511.4h0M1039.2 517.7h0M1039.3 518.7h0M1039.4 544.9h0M1039.4 514.6h0M1039.6 510.4h0M1039.7 553.9h0M1039.7 518.5h0M1039.8 518.2h0M1040 515.3h0M1040.2 514.2h0M1040.4 547.8h0M1040.6 546.5h0M1040.7 510h0M1041 511.6h0M1041.2 511.7h0M1041.5 545.1h0M1041.7 517h0M1041.8 545.5h0M1041.9 502.8h0M1042.4 515.4h0M1042.4 511.6h0M1042.5 505.4h0M1042.5 555.9h0M1042.5 515h0M1042.6 549.1h0M1042.7 514.6h0M1042.9 550.2h0M1042.9 503.2h0M1042.9 511.9h0M1043 549.3h0M1043 517h0M1043.1 556.2h0M1043.2 554.9h0M1043.2 544.6h0M1043.3 554.4h0M1043.3 515.7h0M1043.4 518.8h0M1043.5 550.8h0M1043.9 518.8h0M1044 510h0M1044 559.8h0M1044 507.2h0M1044.1 547.5h0M1044.3 509.7h0M1044.4 502.3h0M1044.5 545.4h0M1044.6 557.4h0M1044.7 513h0M1044.9 551.6h0M1044.9 516.7h0M1045 558.4h0M1045.4 512h0M1045.6 547.6h0M1045.6 547.7h0M1045.7 558h0M1045.8 549.7h0M1046.3 519h0M1046.5 511.6h0M1046.5 518.4h0M1046.6 508.6h0M1046.7 556.4h0M1046.8 517.7h0M1046.8 557.8h0M1046.9 545.3h0M1046.9 516.5h0M1046.9 549.3h0M1047 517.6h0M1047 546.6h0M1047.1 516.3h0M1047.2 510h0M1047.2 516h0M1047.2 549.8h0M1047.2 544.2h0M1047.2 516.2h0M1047.5 560.8h0M1047.6 546.7h0M1047.6 557.2h0M1047.6 548.7h0M1047.7 517.5h0M1047.8 545.9h0M1047.8 511.5h0M1047.9 555.2h0M1047.9 544.1h0M1048 550.7h0M1048.1 548.9h0M1048.2 506.1h0M1048.2 547.8h0M1048.5 511.9h0M1048.5 511.5h0M1048.5 511.2h0M1048.6 544.9h0M1048.6 511.7h0M1048.6 517h0M1048.6 505.3h0M1048.8 516.5h0M1048.9 505.2h0M1048.9 554.7h0M1049.3 549.3h0M1049.3 508.1h0M1049.4 554.8h0M1049.4 509.7h0M1049.5 513.7h0M1049.6 511.6h0M1049.9 504.8h0M1049.9 502.2h0M1050 516.3h0M1050 496.6h0M1050.2 547.4h0M1050.2 544.4h0M1050.2 547.5h0M1050.5 548.2h0M1050.6 551.7h0M1051.1 502.7h0M1051.1 514.3h0M1051.1 549.3h0M1051.2 511h0M1051.5 556.5h0M1051.5 514.6h0M1051.6 512.8h0M1051.7 511.3h0M1051.8 551.9h0M1051.9 550.8h0M1051.9 550.7h0M1052 500.7h0M1052.1 503.6h0M1052.2 513.8h0M1052.2 546.3h0M1052.3 516.1h0M1052.4 555.5h0M1052.6 552.1h0M1052.6 551.7h0M1052.6 518.1h0M1052.7 544.2h0M1052.9 546.8h0M1052.9 560.5h0M1052.9 554.1h0M1052.9 509.1h0M1053 545.6h0M1053.1 548.3h0M1053.3 518.3h0M1053.5 554.3h0M1053.5 514.7h0M1053.8 554.6h0M1053.9 547.5h0M1053.9 518.3h0M1053.9 545.1h0M1053.9 546.2h0M1054 515.7h0M1054 565.6h0M1054 514h0M1054.1 545.2h0M1054.3 517.9h0M1054.4 515.7h0M1054.6 546.5h0M1054.6 549.6h0M1054.7 550.6h0M1054.7 549.4h0M1055 515.4h0M1055 510h0M1055.1 565.8h0M1055.1 564.6h0M1055.2 553.3h0M1055.5 545.6h0M1055.6 516.3h0M1055.6 514.8h0M1055.6 545.9h0M1055.6 563.1h0M1055.9 516h0M1055.9 547.3h0M1055.9 551.1h0M1056 547h0M1056.1 549.5h0M1056.2 549.7h0M1056.2 517.6h0M1056.4 511.8h0M1056.6 554.9h0M1057 518.8h0M1057 556.8h0M1057.1 513.6h0M1057.4 512.2h0M1057.5 516.7h0M1057.5 517.1h0M1057.6 517.2h0M1057.7 551h0M1057.9 509.8h0M1058.1 516.6h0M1058.6 544.6h0M1058.7 550.5h0M1058.9 517.8h0M1058.9 549.3h0M1058.9 511h0M1058.9 544.9h0M1059.1 518.7h0M1059.1 514.7h0M1059.3 502.9h0M1059.4 507.2h0M1059.7 558.2h0M1059.7 504.6h0M1059.8 549.3h0M1059.8 517.2h0M1060.1 550h0M1060.3 518.9h0M1060.4 545.1h0M1060.4 566.6h0M1060.5 544.9h0M1060.8 549.9h0M1061.1 548.7h0M1061.2 548.7h0M1061.3 547.8h0M1061.5 551.6h0M1061.6 512.8h0M1061.6 558.5h0M1061.7 549.9h0M1061.7 545.2h0M1061.8 550.6h0M1061.8 553.1h0M1061.9 552.2h0M1061.9 545.6h0M1061.9 549.5h0M1062 509.5h0M1062 554.3h0M1062 553.9h0M1062.3 519.1h0M1062.5 512.7h0M1062.6 549.6h0M1062.7 553.6h0M1062.8 550.7h0M1062.8 562.4h0M1062.8 517.1h0M1063 546.9h0M1063 517.8h0M1063 549.4h0M1063.2 505.3h0M1063.3 516.5h0M1063.5 555.9h0M1063.5 518.6h0M1063.6 556.6h0M1063.6 544.3h0M1063.6 507h0M1063.6 548.1h0M1063.8 551.5h0M1063.9 549.6h0M1063.9 549.2h0M1064 557.9h0M1064 550.2h0M1064 550.1h0M1064 548.7h0M1064 510.2h0M1064.1 560.5h0M1064.2 545.5h0M1064.3 510.7h0M1064.4 561.7h0M1064.4 516h0M1064.6 548.1h0M1064.7 551.2h0M1064.7 550h0M1064.8 549.3h0M1065 555.7h0M1065 517.1h0M1065.1 517h0M1065.1 554h0M1065.1 551h0M1065.3 506h0M1065.4 513.2h0M1065.5 545.3h0M1065.6 505.6h0M1065.7 512.7h0M1065.8 560.4h0M1066.1 552.7h0M1066.2 504h0M1066.2 552.2h0M1066.3 511.6h0M1066.4 545.9h0M1066.7 511.8h0M1067.3 515.5h0M1067.3 547.5h0M1067.4 518.2h0M1067.7 546.7h0M1067.8 565.5h0M1067.9 544.2h0M1068 556.6h0M1068 551.6h0M1068.2 561.6h0M1068.4 516.6h0M1068.5 548.7h0M1068.6 561.5h0M1068.6 558.3h0M1068.8 515.2h0M1068.9 549.7h0M1069.6 515.3h0M1069.7 547.5h0M1069.7 556.4h0M1069.8 558.5h0M1070 545.6h0M1070.1 550.5h0M1070.4 515.3h0M1070.6 549.2h0M1070.7 549.2h0M1070.7 550.8h0M1070.7 560h0M1070.9 515.8h0M1071.1 509h0M1071.1 516.1h0M1071.1 517.2h0M1071.1 549.7h0M1071.2 553.2h0M1071.2 513.1h0M1071.2 546.1h0M1071.3 548.9h0M1071.3 546.4h0M1071.5 549.7h0M1071.5 501.7h0M1071.6 511.6h0M1071.6 510h0M1071.8 505.4h0M1071.9 546h0M1071.9 518.3h0M1072 545.9h0M1072 551.6h0M1072 549.3h0M1072.2 505.9h0M1072.2 518.5h0M1072.3 547h0M1072.3 511.6h0M1072.4 516.3h0M1072.5 545.1h0M1072.5 555.9h0M1072.5 517.5h0M1072.5 511.3h0M1072.5 512.9h0M1072.6 510.5h0M1072.6 551.3h0M1072.7 518h0M1073.2 509.3h0M1073.3 556.2h0M1073.5 513.7h0M1073.7 513.4h0M1073.7 515.7h0M1073.8 515.2h0M1074 557.2h0M1074.3 554.8h0M1074.5 510.5h0M1074.6 545.5h0M1074.6 510.1h0M1074.7 509.1h0M1075 547.3h0M1075.3 513.1h0M1075.3 519h0M1075.3 519h0M1075.3 504.1h0M1075.4 517.6h0M1075.4 512.7h0M1075.8 548.6h0M1075.9 554.3h0M1075.9 519.1h0M1076 512.6h0M1076 499.9h0M1076 511.6h0M1076 518.2h0M1076.1 502h0M1076.2 552.1h0M1076.3 511.4h0M1076.3 516.2h0M1076.6 505.9h0M1076.9 514.2h0M1077 513.8h0M1077 511.5h0M1077 559h0M1077.1 516.7h0M1077.2 515.3h0M1077.2 549.5h0M1077.2 518.7h0M1077.3 546.7h0M1077.3 554.9h0M1077.4 551.3h0M1077.4 504.7h0M1077.6 514.9h0M1077.7 517.5h0M1077.8 512.6h0M1077.9 554.3h0M1077.9 515.1h0M1077.9 518.3h0M1078.2 518.4h0M1078.3 506.7h0M1078.4 510.6h0M1078.4 548.3h0M1078.4 518.5h0M1078.6 549.3h0M1078.6 509.7h0M1078.6 517.4h0M1078.9 545.2h0M1079 515.6h0M1079 513.6h0M1079 505.1h0M1079.4 515.4h0M1079.5 517.8h0M1079.7 507.9h0M1079.8 515.3h0M1079.9 512.4h0M1079.9 514.3h0M1080 518.3h0M1080.1 518.8h0M1080.1 516.4h0M1080.4 517.1h0M1080.4 517.4h0M1080.6 509.8h0M1080.9 512.5h0M1080.9 549.5h0M1080.9 517.5h0M1081 508.2h0M1081 517.6h0M1081.2 551h0M1081.3 518.7h0M1081.5 514.5h0M1081.6 555.5h0M1081.6 507.8h0M1081.7 509h0M1081.9 553.1h0M1082 504.8h0M1082.1 559.3h0M1082.2 504.5h0M1082.2 547.7h0M1082.2 515.8h0M1082.3 516.8h0M1082.4 497.7h0M1082.4 514.4h0M1082.5 512.3h0M1082.5 518.9h0M1082.5 544.3h0M1082.5 513.4h0M1082.6 513.1h0M1082.7 512.7h0M1082.8 513.6h0M1083 503.8h0M1083.2 513.9h0M1083.2 509.4h0M1083.4 515.8h0M1083.4 508.2h0M1083.7 517.9h0M1083.9 516.2h0M1083.9 514.6h0M1084 505.7h0M1084.2 509.8h0M1084.2 552.2h0M1084.2 561.1h0M1084.2 510.1h0M1084.3 514.5h0M1084.3 556.7h0M1084.5 549.4h0M1084.6 507.9h0M1085 554.1h0M1085 544.6h0M1085.1 551.4h0M1085.3 554h0M1085.5 544.8h0M1085.5 553.1h0M1085.6 562.4h0M1085.9 512.6h0M1085.9 553.9h0M1086.3 562.1h0M1086.3 564h0M1086.3 557h0M1086.6 557.5h0M1086.6 551.7h0M1086.6 545.6h0M1086.8 548.7h0M1086.8 556.3h0M1086.9 551.8h0M1087 544.8h0M1087 547.6h0M1087.1 545.3h0M1087.2 554.6h0M1087.2 545.1h0M1087.2 517.8h0M1087.3 548.8h0M1087.3 562.4h0M1087.4 544.4h0M1087.5 547.4h0M1087.7 544.3h0M1087.8 562h0M1087.8 551.9h0M1087.9 554.4h0M1088 545.8h0M1088.1 564.3h0M1088.1 513h0M1088.2 514.1h0M1088.3 565.8h0M1088.3 515.9h0M1088.3 545.9h0M1088.4 553.3h0M1088.5 548.7h0M1088.7 551.5h0M1088.8 548.7h0M1088.9 548.4h0M1089 555.7h0M1089.2 545h0M1089.2 518.2h0M1089.4 544.7h0M1089.5 544.8h0M1090 555.5h0M1090.2 561.2h0M1090.3 561.5h0M1090.3 512.6h0M1090.7 563.5h0M1091.7 547.2h0M1091.7 547.9h0M1091.7 507.2h0M1091.8 515.7h0M1091.8 517.4h0M1092.1 519h0M1092.2 554h0M1092.4 513.2h0M1092.5 553.6h0M1092.5 551.5h0M1092.9 510.4h0M1092.9 559.4h0M1093.4 548h0M1093.4 504.8h0M1093.6 516.2h0M1093.7 509.2h0M1093.9 555.8h0M1093.9 552.3h0M1093.9 518.7h0M1094 519.1h0M1094.1 549.9h0M1094.1 560.9h0M1094.2 514.7h0M1094.4 545.5h0M1094.4 546.5h0M1094.6 552.9h0M1094.7 544.9h0M1094.9 502.9h0M1095 563h0M1095.4 563.6h0M1095.5 546.9h0M1095.7 545.4h0M1095.7 554.7h0M1096 546.4h0M1096.2 516h0M1096.7 547.9h0M1096.7 553.5h0M1096.7 548.9h0M1096.9 510.6h0M1096.9 561.6h0M1097.1 545.9h0M1097.1 517.5h0M1097.2 545.3h0M1097.3 551.3h0M1097.5 552.4h0M1097.6 545.8h0M1097.6 546h0M1097.6 544.5h0M1097.7 544.4h0M1097.8 512.9h0M1097.8 551.3h0M1098 557.1h0M1098.2 554h0M1098.2 558.2h0M1098.4 565.1h0M1098.4 555.5h0M1098.4 546.3h0M1098.6 556h0M1098.6 516.7h0M1098.7 519h0M1098.7 512.1h0M1098.7 544.9h0M1098.8 518.9h0M1098.9 518h0M1098.9 547.9h0M1099 552.6h0M1099.2 519h0M1099.4 506.4h0M1099.5 547h0M1099.7 564.7h0M1099.9 510.8h0M1100 549.2h0M1100.1 517.3h0M1100.1 557.6h0M1100.3 513.7h0M1100.4 514.4h0M1100.4 560.8h0M1100.6 517.6h0M1100.9 511.7h0M1101 548.9h0M1101.1 502.7h0M1101.2 512.8h0M1101.4 554.8h0M1101.5 518.3h0M1101.6 511.2h0M1101.6 505.8h0M1101.6 517.6h0M1101.7 499.6h0M1101.7 549h0M1102 518.4h0M1102 515.2h0M1102 515.6h0M1102 511.8h0M1102 511.3h0M1102.1 512.3h0M1102.1 514.5h0M1102.2 509.1h0M1102.3 545.8h0M1102.3 517h0M1102.4 517.4h0M1102.5 512.2h0M1102.6 501.9h0M1102.6 546.7h0M1102.7 506h0M1102.7 519.1h0M1102.9 545.1h0M1103 517.7h0M1103.1 503.2h0M1103.1 505.3h0M1103.2 501.2h0M1103.3 514.4h0M1103.5 518.2h0M1103.6 511.3h0M1103.6 507.4h0M1103.7 513.4h0M1103.7 515.7h0M1103.8 509.6h0M1103.8 513.1h0M1103.8 511.4h0M1104 514.9h0M1104.3 515.9h0M1104.4 512.5h0M1104.4 518.8h0M1104.4 499.4h0M1104.4 517.3h0M1104.5 515h0M1104.6 513.5h0M1104.7 497.2h0M1104.7 516h0M1104.8 509h0M1104.8 518.8h0M1104.8 505.7h0M1104.8 507.8h0M1104.9 513h0M1105 547.4h0M1105 503.2h0M1105 516.4h0M1105 517.1h0M1105.1 501.3h0M1105.1 510.7h0M1105.4 548.8h0M1105.7 556.3h0M1105.7 503.3h0M1105.8 552.4h0M1105.9 516.3h0M1106 514h0M1106.1 512.3h0M1106.2 506.7h0M1106.5 516h0M1106.7 545.6h0M1106.7 517h0M1106.7 511.3h0M1106.7 547h0M1106.8 518h0M1106.8 518.5h0M1106.9 517.5h0M1106.9 517h0M1107.1 517.2h0M1107.1 508.3h0M1107.1 516.7h0M1107.3 518.1h0M1107.3 511.8h0M1107.4 518.8h0M1107.6 507.4h0M1107.6 552.5h0M1107.6 563.6h0M1107.9 514.5h0M1107.9 503.1h0M1108 517.1h0M1108 509.7h0M1108.1 552.6h0M1108.3 515.2h0M1108.3 511.2h0M1108.4 544.1h0M1108.5 518.2h0M1108.6 517.6h0M1108.7 510.5h0M1108.7 517.6h0M1108.8 516.6h0M1108.9 553h0M1108.9 512.5h0M1109.1 511.2h0M1109.2 508.5h0M1109.3 517.1h0M1109.4 516.1h0M1109.5 511h0M1109.5 506.8h0M1109.6 518.5h0M1109.7 512.5h0M1109.7 519h0M1109.8 547.8h0M1109.9 509.6h0M1110 514.5h0M1110.1 512.9h0M1110.2 496.8h0M1110.3 517h0M1110.3 506.9h0M1110.4 560.1h0M1110.4 504.9h0M1110.5 518.9h0M1110.6 510.6h0M1110.6 517.8h0M1110.8 515.4h0M1111 547.8h0M1111 559.5h0M1111.2 551.4h0M1111.4 518.7h0M1111.6 506.6h0M1111.7 517.8h0M1111.8 517.2h0M1112.3 511.3h0M1112.3 552h0M1112.3 554h0M1112.3 546.6h0M1112.3 551.7h0M1112.4 519h0M1112.4 558.9h0M1112.6 553.9h0M1112.7 500.8h0M1112.9 547.3h0M1112.9 547.4h0M1113.2 518h0M1113.2 515h0M1113.5 545.6h0M1113.6 563.3h0M1113.7 554.5h0M1113.7 515.6h0M1113.7 547.3h0M1113.8 545.6h0M1113.9 552.6h0M1113.9 518.2h0M1114 548.1h0M1114.2 510.7h0M1114.3 552.8h0M1114.3 517.2h0M1114.3 547.6h0M1114.3 561.7h0M1114.7 546.4h0M1114.7 545.1h0M1114.9 557.4h0M1114.9 551.6h0M1115 548h0M1115 545.9h0M1115.3 545.4h0M1115.6 556.5h0M1115.6 545.1h0M1115.7 552.6h0M1115.7 559.2h0M1115.8 548.4h0M1116.1 546.5h0M1116.1 553.6h0M1116.2 550.8h0M1116.2 547.8h0M1116.3 548.1h0M1116.3 511.4h0M1116.3 547.4h0M1116.4 548h0M1116.4 566.1h0M1116.5 544.7h0M1116.6 553.3h0M1116.6 552.1h0M1116.8 544.7h0M1116.9 558.4h0M1117 567.9h0M1117 517.8h0M1117 547.5h0M1117.4 549.1h0M1117.6 548.8h0M1117.8 518.7h0M1118.1 549.3h0M1118.2 545.2h0M1118.2 558.1h0M1118.2 558.9h0M1118.3 545.7h0M1118.4 557.4h0M1118.5 514.9h0M1118.5 545.5h0M1118.6 545.5h0M1118.6 549.3h0M1118.8 546h0M1118.9 545.7h0M1119 547.3h0M1119.1 547.1h0M1119.2 544.2h0M1119.3 554.8h0M1119.4 556.9h0M1119.6 555.4h0M1119.7 549.6h0M1119.7 546.2h0M1119.8 545.1h0M1119.8 558h0M1120.1 507.8h0M1120.1 545.1h0M1120.2 548.3h0M1120.2 544.4h0M1120.2 556.7h0M1120.3 549.8h0M1120.3 546.7h0M1120.4 550.3h0M1120.4 556.3h0M1120.4 545.5h0M1120.6 508.1h0M1121 550.4h0M1121 553.1h0M1121.1 544.4h0M1121.3 517.6h0M1121.4 556.4h0M1121.5 548.6h0M1121.6 505.8h0M1121.9 563.8h0M1122 515.8h0M1122.2 518.6h0M1122.4 544.9h0M1122.4 567.3h0M1122.5 558.1h0M1122.5 550.5h0M1122.6 544.2h0M1122.7 552.9h0M1123.1 549.6h0M1123.2 518.3h0M1123.5 559.6h0M1123.7 545h0M1123.7 561.8h0M1123.9 544.7h0M1124 548.9h0M1124 553.5h0M1124.1 557h0M1124.1 544.9h0M1124.1 501.8h0M1124.1 547.9h0M1124.2 554.7h0M1124.3 566.3h0M1124.4 551.2h0M1124.6 516.9h0M1124.9 553.5h0M1125 516.1h0M1125.1 544.9h0M1125.1 507.3h0M1125.1 518.2h0M1125.3 512.2h0M1125.4 516.1h0M1125.4 546.4h0M1125.6 548.4h0M1125.7 549.5h0M1125.8 506.5h0M1125.8 515.1h0M1125.9 566.2h0M1125.9 518.3h0M1126 515.3h0M1126 511.2h0M1126.5 517h0M1126.7 552.9h0M1126.7 516.1h0M1127.3 518.7h0M1127.3 503h0M1127.3 515.1h0M1127.4 516.9h0M1127.4 508.1h0M1127.4 516.6h0M1127.5 508.9h0M1127.7 502.3h0M1127.9 512.2h0M1128 517h0M1128.1 545.6h0M1128.3 502h0M1128.3 545h0M1128.5 499.4h0M1128.6 544.8h0M1128.8 515.2h0M1128.8 514h0M1129 510.6h0M1129.3 508.3h0M1129.3 507.7h0M1129.5 506.2h0M1129.5 511.4h0M1129.5 545.8h0M1129.5 514.7h0M1129.6 504.1h0M1129.6 515.8h0M1129.7 513h0M1129.8 565.2h0M1130 551.7h0M1130.1 506.9h0M1130.1 500.4h0M1130.2 505.4h0M1130.5 519h0M1130.5 544.2h0M1130.6 555.8h0M1130.7 544.7h0M1130.8 500.5h0M1130.9 515.2h0M1131 510.2h0M1131.1 514.1h0M1131.3 509h0M1131.3 549.8h0M1131.3 518.2h0M1131.4 506.3h0M1131.5 511.8h0M1131.5 515.1h0M1131.6 508h0M1131.8 516.6h0M1132 513.4h0M1132.1 503.7h0M1132.1 513.5h0M1132.1 511.9h0M1132.2 514.7h0M1132.2 516.8h0M1132.2 518.2h0M1132.3 515.5h0M1132.3 547.2h0M1132.4 513.9h0M1132.4 515.2h0M1132.6 514.2h0M1132.8 517.2h0M1132.8 504.3h0M1133 557h0M1133 565.1h0M1133 509.3h0M1133.1 516.9h0M1133.4 516.1h0M1133.4 517.9h0M1133.5 500.7h0M1133.5 518h0M1133.7 517.9h0M1133.7 545.5h0M1133.9 560.5h0M1134.1 547.4h0M1134.2 547.3h0M1134.2 518.3h0M1134.4 505.4h0M1134.5 547.4h0M1134.7 506h0M1134.7 548.1h0M1134.7 512.2h0M1134.7 554.9h0M1135 505h0M1135.2 552.9h0M1135.2 517.1h0M1135.4 563.4h0M1135.4 565.4h0M1135.4 544.2h0M1135.6 517.7h0M1135.6 558h0M1136.3 558.5h0M1136.3 518.9h0M1136.5 548.1h0M1136.6 501.3h0M1136.7 509.7h0M1136.7 515.1h0M1136.8 549.9h0M1136.8 518.6h0M1136.8 511.3h0M1136.8 547.7h0M1136.9 511.7h0M1137 510.8h0M1137.2 553.9h0M1137.4 546.1h0M1137.5 557h0M1137.5 509.2h0M1137.6 546h0M1137.7 545.5h0M1137.7 513.7h0M1137.9 566.5h0M1137.9 547.1h0M1138 548h0M1138 555.8h0M1138.2 516.7h0M1138.4 499.2h0M1138.6 550.9h0M1138.6 514.9h0M1139 553h0M1139 514.6h0M1139 518.7h0M1139.4 546.8h0M1139.5 518.6h0M1139.6 546.6h0M1139.7 546.6h0M1139.8 516.7h0M1139.8 545.6h0M1139.9 545.7h0M1140 513.5h0M1140.3 507h0M1140.4 515.3h0M1140.4 518.7h0M1140.5 554.7h0M1140.6 548.6h0M1140.7 510h0M1140.8 517.4h0M1141 550.5h0M1141.1 564.9h0M1141.1 545.4h0M1141.1 513.5h0M1141.2 511.1h0M1141.6 544.7h0M1141.7 516.8h0M1141.7 503.8h0M1141.8 516.6h0M1141.8 518.6h0M1141.9 566.5h0M1141.9 517.8h0M1141.9 518.3h0M1142 503.7h0M1142.2 509.6h0M1142.2 549h0M1142.3 517h0M1142.4 516.3h0M1142.6 544.9h0M1142.6 513.3h0M1142.7 547.1h0M1142.7 553.2h0M1142.8 549.8h0M1142.8 547.6h0M1143 550.5h0M1143.1 561.3h0M1143.1 562.9h0M1143.2 544.2h0M1143.2 547.6h0M1143.2 548.1h0M1143.2 517.1h0M1143.3 544.8h0M1143.4 550.7h0M1143.4 555.3h0M1143.6 550.1h0M1143.6 557.8h0M1143.7 512.7h0M1143.8 513h0M1143.8 547.7h0M1143.8 545.5h0M1144 545.4h0M1144 554.9h0M1144 550.9h0M1144.2 552.1h0M1144.2 553.3h0M1144.3 513.6h0M1144.4 545.5h0M1144.5 518.4h0M1144.6 550.3h0M1144.6 550h0M1144.8 546.3h0M1145 548.4h0M1145.3 559h0M1145.4 559.1h0M1145.4 559.1h0M1145.6 550h0M1145.6 545.6h0M1145.7 544.4h0M1145.7 545.6h0M1145.8 545.1h0M1145.8 547.4h0M1145.8 548h0M1145.9 547.7h0M1146.1 555.4h0M1146.1 545.6h0M1146.2 550.6h0M1146.3 558.6h0M1146.4 547.7h0M1146.5 546.8h0M1146.5 568.7h0M1146.8 552.7h0M1146.8 514.8h0M1146.8 505.7h0M1146.9 561.3h0M1147 514.1h0M1147.1 544.9h0M1147.1 549.2h0M1147.5 558.4h0M1147.7 545.9h0M1147.8 551.1h0M1147.9 548.8h0M1147.9 544.9h0M1148 554h0M1148 510h0M1148.1 515.7h0M1148.1 557.1h0M1148.2 502.3h0M1148.2 519.1h0M1148.3 557h0M1148.4 548.9h0M1149.1 501.6h0M1149.1 546.1h0M1149.2 544.9h0M1149.4 511h0M1149.5 544.9h0M1149.5 556h0M1149.7 557.9h0M1149.8 509.5h0M1149.9 519h0M1150 548.5h0M1150.1 551.6h0M1150.1 511.7h0M1150.2 511.2h0M1150.3 509.2h0M1150.3 515.2h0M1150.4 505.8h0M1150.5 517.6h0M1150.6 518.4h0M1150.8 506.4h0M1150.9 506.4h0M1151 513.3h0M1151 507.1h0M1151 514.1h0M1151 551.6h0M1151.1 498.3h0M1151.3 517.1h0M1151.3 515.9h0M1151.4 505.3h0M1151.5 518.6h0M1151.7 517.9h0M1151.8 516.5h0M1152 517.1h0M1152.3 518.7h0M1152.3 555.2h0M1152.3 544.3h0M1152.3 545.6h0M1152.4 548.7h0M1152.4 516.6h0M1152.5 545.7h0M1152.6 505.6h0M1153.2 545.5h0M1153.3 514.2h0M1153.4 545h0M1153.5 553.6h0M1153.5 517.6h0M1153.6 547.9h0M1153.7 513h0M1153.9 552.9h0M1154 519h0M1154.1 552.6h0M1154.3 509.4h0M1154.4 514.8h0M1154.4 513.6h0M1154.4 553h0M1154.5 518.1h0M1154.6 553.1h0M1154.6 517.5h0M1154.7 551h0M1154.9 550.8h0M1155.1 545.1h0M1155.1 544.1h0M1155.5 560.3h0M1155.5 544.3h0M1155.5 549.5h0M1155.5 546.2h0M1156 559.2h0M1156.1 550.2h0M1156.2 546.6h0M1156.5 497.1h0M1156.5 551.7h0M1156.6 554.4h0M1156.7 510.8h0M1157 558.1h0M1157.1 515.4h0M1157.3 565.9h0M1157.5 544.1h0M1157.6 545.7h0M1157.7 545.5h0M1157.9 544.2h0M1157.9 546h0M1157.9 547.8h0M1157.9 548.1h0M1158 513.1h0M1158 548h0M1158.2 544.8h0M1158.3 508.9h0M1158.3 546.5h0M1158.4 549.8h0M1158.4 544.8h0M1158.6 503.8h0M1158.6 559.8h0M1158.6 508.9h0M1158.7 547.4h0M1158.7 547.3h0M1158.7 519h0M1158.9 512.1h0M1159.1 508.9h0M1159.1 516.6h0M1159.2 499.1h0M1159.3 548.1h0M1159.5 551.3h0M1159.6 555.5h0M1159.8 511h0M1159.8 509.7h0M1159.9 547.1h0M1160 545.3h0M1160.1 546.2h0M1160.4 518.8h0M1160.5 550.7h0M1160.6 509.9h0M1160.6 554.8h0M1160.8 519.1h0M1160.9 516.2h0M1161.1 552.9h0M1161.2 514.4h0M1161.2 516.8h0M1161.3 509.3h0M1161.5 498h0M1161.6 555h0M1161.8 518.9h0M1161.9 553.3h0M1161.9 516.2h0M1161.9 557.9h0M1162 548.9h0M1162 557.1h0M1162.5 502.2h0M1162.5 514.9h0M1162.7 508.1h0M1162.8 545.6h0M1162.8 513.6h0M1162.8 546.5h0M1163 557.8h0M1163 518.3h0M1163.1 515.3h0M1163.2 547.8h0M1163.2 544.9h0M1163.2 518.1h0M1163.5 511.5h0M1163.6 511.6h0M1163.7 545.1h0M1163.7 545.1h0M1163.8 545.5h0M1163.9 515.3h0M1164 547.3h0M1164 552.7h0M1164.1 553.8h0M1164.3 510.1h0M1164.3 549.4h0M1164.4 545.5h0M1164.4 547.6h0M1164.5 554.3h0M1164.6 551.5h0M1164.7 547.2h0M1164.7 546.3h0M1165.2 563.3h0M1165.2 546.4h0M1165.3 550.8h0M1165.6 551.5h0M1166 554.5h0M1166.1 515.9h0M1166.1 506.3h0M1166.3 562.9h0M1166.5 545.1h0M1166.6 518.6h0M1166.7 518.1h0M1166.7 506.3h0M1166.8 552.7h0M1166.8 506.4h0M1166.9 546.8h0M1167 518.5h0M1167.3 547.9h0M1167.5 549.8h0M1167.6 500.2h0M1167.7 544.8h0M1168 548.8h0M1168.2 504h0M1168.3 516.1h0M1168.6 518.8h0M1168.8 516.9h0M1168.9 498h0M1168.9 544.2h0M1168.9 554.5h0M1169 513.4h0M1169 504.3h0M1169.3 546.4h0M1169.3 518.8h0M1169.3 550.1h0M1169.3 511.6h0M1169.3 545.4h0M1169.5 506.7h0M1169.6 551.7h0M1169.7 518.4h0M1169.8 545.5h0M1169.9 514.1h0M1170.1 519h0M1170.3 518.7h0M1170.3 505.8h0M1170.3 546.9h0M1170.3 497.9h0M1170.4 508.2h0M1170.5 548.9h0M1170.5 557h0M1170.5 518h0M1170.6 549.2h0M1170.6 548.6h0M1170.6 518.2h0M1170.6 512.5h0M1170.7 547.3h0M1171 517.7h0M1171.1 517.6h0M1171.1 517.7h0M1171.3 515.6h0M1171.3 501.9h0M1171.4 512.5h0M1171.7 517.6h0M1171.9 554.4h0M1172 557.9h0M1172 548.9h0M1172.1 513.5h0M1172.2 552.7h0M1172.2 518.7h0M1172.2 551h0M1172.3 513.1h0M1172.5 513h0M1172.5 551.1h0M1172.6 547.4h0M1172.6 516.8h0M1172.6 514.5h0M1172.8 551.1h0M1172.9 552h0M1172.9 544.5h0M1173.3 514.7h0M1173.4 511h0M1173.5 518.7h0M1173.7 506h0M1173.8 505.6h0M1173.9 555.2h0M1173.9 512.5h0M1174.2 513.9h0M1174.3 546.4h0M1174.4 513.5h0M1174.5 559.2h0M1174.7 508.3h0M1174.9 510.9h0M1175 547.1h0M1175 501.8h0M1175.1 500.4h0M1175.3 518h0M1175.6 548.6h0M1175.6 497.3h0M1175.7 515.6h0M1175.9 518.2h0M1175.9 512.4h0M1175.9 501.8h0M1176 510.6h0M1176 518.8h0M1176.2 518.5h0M1176.2 517h0M1176.3 517.5h0M1176.3 517.1h0M1176.5 550h0M1176.6 516.9h0M1176.7 545h0M1176.8 516.2h0M1176.8 517.2h0M1176.9 517.7h0M1176.9 517h0M1176.9 512.9h0M1177 503.6h0M1177 518.1h0M1177.1 517h0M1177.1 513.1h0M1177.2 518.7h0M1177.3 547.8h0M1177.5 510.3h0M1177.6 505.1h0M1177.6 512.8h0M1177.6 551.6h0M1177.9 506.5h0M1178 515.2h0M1178.1 546.1h0M1178.6 511.1h0M1178.6 567.8h0M1178.7 558.8h0M1178.8 513h0M1178.9 509.7h0M1178.9 545.9h0M1179.1 545.1h0M1179.1 550.3h0M1179.1 544.5h0M1179.3 549.4h0M1179.4 563.8h0M1179.4 511h0M1179.5 550.3h0M1179.6 550.3h0M1179.6 547.1h0M1179.6 547.2h0M1179.7 548.6h0M1179.9 514.7h0M1179.9 566.2h0M1180 545.8h0M1180.4 563h0M1180.6 544.5h0M1180.6 514.9h0M1180.8 558.5h0M1180.9 549.2h0M1181 548.3h0M1181 555.1h0M1181 557.7h0M1181.1 546.3h0M1181.2 557.6h0M1181.3 551.3h0M1181.6 515.9h0M1181.6 546.8h0M1181.6 545.8h0M1181.6 553.2h0M1181.8 516.1h0M1181.9 552.2h0M1182.3 551.5h0M1182.3 553.1h0M1182.4 560.1h0M1182.6 558.8h0M1182.7 548.1h0M1182.8 514.8h0M1183 549.2h0M1183 545.9h0M1183.1 546.3h0M1183.1 566.5h0M1183.2 553.5h0M1183.3 556.5h0M1183.3 556.9h0M1183.6 554h0M1183.6 552.3h0M1183.9 547.6h0M1183.9 553.9h0M1184 554.7h0M1184 552.2h0M1184 558.1h0M1184.1 548.4h0M1184.3 545.8h0M1184.6 545.2h0M1184.7 504.1h0M1184.7 553.5h0M1184.7 546.4h0M1184.9 549.6h0M1185.1 544.2h0M1185.2 519.1h0M1185.2 562.1h0M1185.4 567.2h0M1185.4 552.1h0M1185.6 549.5h0M1185.6 514.7h0M1185.9 555h0M1186.1 515.6h0M1186.2 544.8h0M1186.2 511.6h0M1186.4 551.1h0M1186.4 558.1h0M1186.7 560.5h0M1186.9 556.8h0M1187 513.3h0M1187.1 558.5h0M1187.1 516.7h0M1187.2 562.8h0M1187.2 550.8h0M1187.5 551.2h0M1187.5 512.2h0M1187.5 555.2h0M1187.6 517.5h0M1187.6 564.3h0M1187.6 544.6h0M1187.8 518.9h0M1188.2 555.6h0M1188.2 560.3h0M1188.4 551.1h0M1188.4 518.3h0M1188.5 545.6h0M1188.5 547.7h0M1188.6 551.4h0M1188.6 547.8h0M1188.6 553.1h0M1188.7 553.4h0M1188.8 546.3h0M1188.9 548.6h0M1188.9 550.7h0M1189 560.6h0M1189.3 546.2h0M1189.3 545.7h0M1189.6 559.6h0M1189.6 554.9h0M1189.9 551.5h0M1189.9 548.2h0M1190 545.6h0M1190.1 565.5h0M1190.1 549.8h0M1190.7 550.5h0M1190.7 512.1h0M1190.7 546h0M1190.9 510.7h0M1191 564.2h0M1191 549.5h0M1191.2 546.3h0M1191.4 516.4h0M1191.5 512.3h0M1191.6 546h0M1191.6 556.7h0M1191.7 515h0M1191.8 559.6h0M1191.9 505.7h0M1192 545.8h0M1192.1 514.5h0M1192.1 544.7h0M1192.1 545.5h0M1192.3 544.3h0M1192.9 559.3h0M1192.9 518.4h0M1192.9 516.5h0M1192.9 516.1h0M1193 548.2h0M1193 548h0M1193.1 553.2h0M1193.3 557.9h0M1193.4 518.1h0M1193.5 552.3h0M1193.5 509.8h0M1193.6 556.9h0M1193.6 511.2h0M1193.8 514.8h0M1193.9 513.3h0M1194 549.8h0M1194.2 514.3h0M1194.3 517.1h0M1194.5 549.3h0M1194.7 516.3h0M1194.9 516.4h0M1195 556h0M1195 515.6h0M1195.2 497.1h0M1195.2 507.9h0M1195.3 518.1h0M1195.3 518.5h0M1195.6 508.6h0M1195.8 518.6h0M1195.9 511.7h0M1196 516.5h0M1196.1 510.1h0M1196.2 518.3h0M1196.2 518.8h0M1196.3 508.1h0M1196.3 515.5h0M1196.4 544.8h0M1196.4 516.5h0M1196.6 545.1h0M1196.6 551.1h0M1196.6 514.8h0M1196.7 513.6h0M1196.8 515.8h0M1196.9 515.3h0M1197 550.5h0M1197.1 518.9h0M1197.1 546.6h0M1197.3 516.9h0M1197.4 515.1h0M1197.4 513.6h0M1197.4 502.2h0M1197.6 516.7h0M1197.6 517.8h0M1197.7 544.8h0M1197.8 499h0M1198 508.4h0M1198 514.1h0M1198.1 550.4h0M1198.2 514.2h0M1198.2 519.1h0M1198.5 509.4h0M1198.8 518.9h0M1198.8 515.9h0M1198.9 513h0M1198.9 517.8h0M1198.9 514.4h0M1199 517.2h0M1199.1 516.2h0M1199.2 550.1h0M1199.3 513.1h0M1199.4 515.6h0M1199.4 513.6h0M1199.5 516.9h0M1199.7 514h0M1199.7 511.3h0M1199.7 518.1h0M1199.7 545.1h0M1200 509.4h0M1200 550.9h0M1200.1 547.5h0M1200.2 517.9h0M1200.4 503.5h0M1200.4 518h0M1200.4 546.3h0M1200.5 509h0M1200.5 547.1h0M1200.6 505.7h0M1200.7 519h0M1200.8 545.5h0M1201 511.6h0M1201.1 510.9h0M1201.2 515h0M1201.2 504.8h0M1201.2 515.7h0M1201.3 515.2h0M1201.4 510h0M1201.7 516h0M1201.7 512.3h0M1201.8 505.3h0M1201.9 518.8h0M1202.2 519h0M1202.2 513.9h0M1202.2 503h0M1202.3 510.5h0M1202.3 499.2h0M1202.3 509.6h0M1202.4 551.7h0M1202.6 510.5h0M1202.7 510.8h0M1202.8 514.8h0M1202.9 518.8h0M1203.1 510.8h0M1203.1 516.8h0M1203.3 546.4h0M1203.4 513.8h0M1203.5 546.4h0M1203.6 551.8h0M1203.6 546.3h0M1203.8 551.7h0M1203.8 513.6h0M1203.8 518.7h0M1204 546h0M1204.1 516.3h0M1204.1 552.3h0M1204.2 549.4h0M1204.2 508h0M1204.2 511.4h0M1204.2 545h0M1204.3 511.9h0M1204.6 550h0M1204.6 517.7h0M1204.6 514.9h0M1204.7 547.7h0M1204.7 545.3h0M1204.7 551.7h0M1204.8 545.9h0M1205 553.4h0M1205.3 563h0M1205.3 551h0M1205.4 550.1h0M1205.5 544.7h0M1205.6 546.4h0M1205.6 551h0M1205.6 565.6h0M1205.7 548.5h0M1205.9 553.8h0M1206 550.1h0M1206 545.6h0M1206.1 554h0M1206.2 563h0M1206.2 516.3h0M1206.5 544.2h0M1206.7 544.8h0M1206.7 512.7h0M1206.7 544.4h0M1206.8 547.7h0M1206.9 514.1h0M1206.9 517.7h0M1206.9 556.4h0M1207.1 544.8h0M1207.1 566.6h0M1207.2 505.2h0M1207.4 553.2h0M1207.5 551.8h0M1207.5 554.5h0M1207.7 545.3h0M1207.9 549.4h0M1207.9 547.9h0M1208 547.4h0M1208.3 519.1h0M1208.3 558.5h0M1208.4 552.9h0M1208.4 553.6h0M1208.4 555.9h0M1208.5 553.6h0M1208.5 545.2h0M1208.6 562.2h0M1208.6 550.6h0M1208.8 551.7h0M1209 544.7h0M1209 518.8h0M1209.2 550.7h0M1209.2 557.4h0M1209.3 552.5h0M1209.8 551.1h0M1209.8 555.4h0M1209.9 553.9h0M1210 497.4h0M1210.2 514.1h0M1210.3 544.2h0M1210.5 516.5h0M1210.6 517.4h0M1210.7 547.5h0M1210.7 552.9h0M1210.8 545.2h0M1210.8 561.8h0M1210.8 505.8h0M1211.3 548.6h0M1211.3 544.9h0M1211.3 556.3h0M1211.4 517.5h0M1211.4 512.6h0M1211.5 518.3h0M1211.7 545.8h0M1211.8 545.3h0M1211.9 518.7h0M1212 546.5h0M1212.1 518.5h0M1212.2 545.9h0M1212.2 565.9h0M1212.2 518.7h0M1212.3 555.9h0M1212.5 553h0M1212.5 557.8h0M1212.6 555h0M1212.7 548.5h0M1212.7 550.9h0M1212.8 549.5h0M1212.8 551.7h0M1212.8 545.1h0M1212.8 546.1h0M1212.8 550.1h0M1213.1 559.7h0M1213.2 545.9h0M1213.3 550.2h0M1213.4 549.5h0M1213.4 567h0M1213.4 550h0M1213.4 551.4h0M1213.4 547.7h0M1213.5 545.2h0M1213.5 550.2h0M1213.6 557.7h0M1213.6 549.8h0M1213.7 555.5h0M1213.7 550.4h0M1213.7 546.7h0M1213.8 547.2h0M1213.8 547.1h0M1213.9 545.6h0M1213.9 553.5h0M1213.9 554.1h0M1213.9 567.5h0M1214.1 547.4h0M1214.5 553.9h0M1214.7 545.1h0M1215 553.3h0M1215.1 561.5h0M1215.5 515.2h0M1215.5 544.5h0M1215.5 546.8h0M1215.5 558.7h0M1215.6 552.4h0M1215.8 545.3h0M1215.9 549.4h0M1216 556.4h0M1216.3 545.9h0M1216.4 544.6h0M1216.4 550.6h0M1216.5 557.7h0M1216.6 552.7h0M1216.7 508.8h0M1216.7 513.9h0M1216.9 557.5h0M1216.9 545h0M1216.9 544.2h0M1217.1 560.5h0M1217.1 560.5h0M1217.2 551.9h0M1217.4 506.1h0M1217.4 560.3h0M1217.5 544.5h0M1217.6 548.3h0M1217.6 506.4h0M1217.7 518h0M1217.7 514.8h0M1217.7 511.8h0M1217.8 517.6h0M1218 544.4h0M1218.4 518.5h0M1218.6 517.9h0M1218.6 546.7h0M1218.8 517.5h0M1218.9 518h0M1219 512.1h0M1219 507.1h0M1219.1 514.5h0M1219.2 516.5h0M1219.3 505.7h0M1219.5 510.2h0M1219.7 515h0M1219.7 507h0M1219.8 507.7h0M1219.8 497.9h0M1219.9 514.2h0M1219.9 500.4h0M1220.1 497.2h0M1220.1 549.3h0M1220.2 518.1h0M1220.2 511.9h0M1220.2 517.1h0M1220.3 550h0M1220.4 506.6h0M1220.5 509.5h0M1220.5 505h0M1220.6 505.4h0M1220.7 511.9h0M1220.7 499.7h0M1220.9 512.7h0M1220.9 518h0M1221.1 517.2h0M1221.1 518.6h0M1221.2 510h0M1221.2 510.1h0M1221.2 512h0M1221.3 501.8h0M1221.3 503.1h0M1221.3 518.2h0M1221.4 511.4h0M1221.4 518.1h0M1221.5 513.9h0M1221.6 517.9h0M1221.6 509.8h0M1221.6 517.4h0M1221.6 517.7h0M1221.6 518.4h0M1221.6 549.9h0M1221.6 518.9h0M1221.7 544.5h0M1221.8 506.8h0M1221.9 511.1h0M1221.9 518.6h0M1221.9 510.3h0M1222 518.6h0M1222.1 514.8h0M1222.2 509.3h0M1222.2 516.1h0M1222.2 518.2h0M1222.3 517.8h0M1222.4 516.1h0M1222.4 514.2h0M1222.4 550.8h0M1222.5 517h0M1222.5 511.1h0M1222.6 510.4h0M1222.7 515h0M1222.7 517.1h0M1222.7 510.6h0M1222.8 518.8h0M1222.9 502.5h0M1223 505.8h0M1223 548.1h0M1223.1 514.3h0M1223.2 514.6h0M1223.2 517.8h0M1223.3 516.2h0M1223.4 509.4h0M1223.4 517.5h0M1223.4 515.4h0M1223.5 498.6h0M1223.6 517.6h0M1223.7 544.8h0M1223.9 548.6h0M1223.9 510.6h0M1224 517.1h0M1224 509.7h0M1224 513.4h0M1224.3 515.6h0M1224.6 550.9h0M1224.7 513.9h0M1224.8 515.9h0M1224.9 510.9h0M1225.2 515.7h0M1225.4 508.9h0M1225.4 514.6h0M1225.5 516.5h0M1225.5 509.4h0M1225.7 566.3h0M1226 548.9h0M1226.1 514.3h0M1226.2 515.6h0M1226.2 511h0M1226.3 545.4h0M1226.3 514.2h0M1226.3 501.7h0M1226.3 516.7h0M1226.4 545.8h0M1226.4 517.3h0M1226.5 515.9h0M1226.6 545.5h0M1226.6 545.7h0M1226.7 513.5h0M1227 511.3h0M1227 504.3h0M1227.1 518.7h0M1227.2 515.7h0M1227.8 511h0M1227.8 514.3h0M1227.8 508h0M1228 515.1h0M1228 517.8h0M1228 507.5h0M1228.1 518.6h0M1228.2 513.3h0M1228.3 517.8h0M1228.3 512.6h0M1228.4 512.7h0M1228.7 547.2h0M1228.8 510.2h0M1228.8 509.1h0M1228.9 516.1h0M1228.9 496.7h0M1229.1 508.2h0M1229.2 502.3h0M1229.2 513.4h0M1229.3 503.3h0M1229.4 516h0M1229.4 515.8h0M1229.7 511.9h0M1229.7 507.9h0M1229.9 518.1h0M1229.9 510.4h0M1230.1 504h0M1230.1 517.5h0M1230.1 517h0M1230.2 505.8h0M1230.3 511.2h0M1230.4 516.7h0M1230.5 510h0M1230.5 512.8h0M1230.6 550.4h0M1231 499.8h0M1231.4 563.6h0M1231.5 512.6h0M1231.6 517.2h0M1231.7 518.3h0M1232 517.7h0M1232.1 557.8h0M1232.3 548h0M1232.4 545.7h0M1232.6 553.9h0M1232.7 554.5h0M1232.7 516.6h0M1232.9 545.9h0M1233.1 557.9h0M1233.1 558.2h0M1233.1 544.6h0M1233.2 546.3h0M1233.4 548.6h0M1233.5 515.4h0M1233.6 508.2h0M1233.6 546.3h0M1233.6 547.3h0M1233.6 516.5h0M1233.8 556.3h0M1234.2 550.4h0M1234.2 546.1h0M1234.3 548.4h0M1234.4 552.3h0M1234.6 549.6h0M1234.9 548.5h0M1235.2 566.7h0M1235.2 557.2h0M1235.2 555.2h0M1235.2 551.9h0M1235.5 510.5h0M1235.5 517.3h0M1235.5 557.5h0M1235.5 556.5h0M1236 546.8h0M1236.3 553.2h0M1236.3 545.5h0M1236.3 544.4h0M1236.4 547.2h0M1236.4 512.6h0M1236.5 550.4h0M1236.5 515h0M1236.5 517.1h0M1236.5 550.9h0M1236.7 512.5h0M1237.1 509.4h0M1237.3 514.9h0M1237.3 547h0M1237.5 546.4h0M1237.5 545.6h0M1237.6 546h0M1237.7 545.6h0M1237.8 549.6h0M1237.8 549.9h0M1238 552.4h0M1238 512.1h0M1238 516h0M1238.1 552.1h0M1238.3 552.6h0M1238.3 517.5h0M1238.6 546h0M1238.6 549.3h0M1238.6 518h0M1238.8 547h0M1239 515.2h0M1239.1 560.3h0M1239.1 557.4h0M1239.2 558.1h0M1239.3 545.1h0M1239.3 551.8h0M1239.4 546.7h0M1239.4 548.3h0M1239.6 549.1h0M1239.8 556.6h0M1240 553.3h0M1240 558h0M1240.1 566.7h0M1240.1 550.8h0M1240.4 549.8h0M1240.5 559.3h0M1240.5 550.8h0M1240.6 557.8h0M1240.7 555.3h0M1240.7 559h0M1240.7 518.5h0M1240.7 566.5h0M1240.9 559.1h0M1240.9 515.7h0M1240.9 561h0M1240.9 561.8h0M1241 550.9h0M1241.1 544.1h0M1241.2 551h0M1241.2 561.8h0M1241.3 554.9h0M1241.5 547.1h0M1241.5 517.2h0M1241.7 545.5h0M1241.8 553.2h0M1241.8 556.6h0M1241.8 544.5h0M1241.8 545.1h0M1241.9 549.6h0M1241.9 547.8h0M1242 549.2h0M1242 551.1h0M1242.1 549.3h0M1242.2 559h0M1242.3 544.7h0M1242.3 548.3h0M1242.3 550.5h0M1242.3 553.7h0M1242.4 552.3h0M1242.4 549.4h0M1242.5 547.2h0M1242.6 547.5h0M1242.6 557.2h0M1242.6 559.3h0M1242.9 549.9h0M1243.2 510.7h0M1243.3 514.4h0M1243.4 555h0M1243.5 519.1h0M1243.6 566.2h0M1243.6 561.5h0M1243.7 506h0M1243.7 545.8h0M1243.8 547.3h0M1243.8 546.7h0M1244 545.7h0M1244.1 550.9h0M1244.3 552.7h0M1244.5 547.9h0M1244.5 512.6h0M1244.6 545.4h0M1244.7 548.3h0M1244.7 551.4h0M1244.8 506.3h0M1244.8 550.9h0M1244.9 509.9h0M1245 517.9h0M1245.2 518.1h0M1245.2 518.3h0M1245.3 544.3h0M1245.4 518.5h0M1245.4 513.1h0M1245.4 508.6h0M1245.5 546.4h0M1245.7 546.1h0M1245.8 510.3h0M1245.9 508.3h0M1245.9 513.6h0M1246 545h0M1246.1 512.3h0M1246.7 516.6h0M1246.9 554.2h0M1246.9 517.2h0M1247 558.9h0M1247.2 516.5h0M1247.2 516h0M1247.3 517.5h0M1247.3 547.8h0M1247.3 550.9h0M1247.4 504h0M1247.4 512h0M1247.5 515.7h0M1247.6 515.9h0M1247.6 507.6h0M1247.7 515.5h0M1247.9 508.2h0M1248.1 558.6h0M1248.1 505.5h0M1248.2 549.1h0M1248.4 516.6h0M1248.5 515.1h0M1248.5 511.5h0M1248.7 497.7h0M1248.7 516.2h0M1249.1 550.1h0M1249.2 545h0M1249.2 550.9h0M1249.2 544.7h0M1249.2 512.6h0M1249.2 518.1h0M1249.2 549.9h0M1249.3 548.3h0M1249.3 511.6h0M1249.4 548.8h0M1249.5 516.7h0M1249.5 544.5h0M1249.5 510.7h0M1249.7 549.5h0M1249.8 516.1h0M1249.8 512.3h0M1249.8 506.7h0M1250 512.6h0M1250 559.1h0M1250.1 554.1h0M1250.1 557.2h0M1250.2 513h0M1250.3 513.2h0M1250.3 515.1h0M1250.5 510h0M1250.6 513.9h0M1250.6 516.8h0M1250.7 548.1h0M1250.7 514.8h0M1250.7 549.6h0M1250.9 549.5h0M1250.9 548.8h0M1251.1 503.5h0M1251.2 547.1h0M1251.2 559.1h0M1251.3 517.1h0M1251.5 516.9h0M1251.5 505.3h0M1251.6 503.6h0M1251.7 513.7h0M1251.8 514.6h0M1251.8 546.8h0M1251.9 546.8h0M1252.1 549.7h0M1252.1 544.8h0M1252.2 509.7h0M1252.3 549.3h0M1252.3 514.1h0M1252.3 545h0M1252.4 514.6h0M1252.8 516.2h0M1253 559.9h0M1253 506.5h0M1253.1 544.3h0M1253.1 544.6h0M1253.3 550.7h0M1253.3 546.5h0M1253.3 549.1h0M1253.5 517.3h0M1253.8 502.6h0M1253.9 553.8h0M1254 514.9h0M1254.1 508.2h0M1254.2 515.1h0M1254.2 516h0M1254.3 518.8h0M1254.3 516.4h0M1254.4 515.7h0M1254.4 512.2h0M1254.4 512.9h0M1254.5 549.4h0M1254.6 501.5h0M1254.6 500.4h0M1254.6 512.3h0M1254.7 506.5h0M1254.7 502.5h0M1254.7 502.3h0M1254.8 507.2h0M1255.1 517.7h0M1255.1 515.4h0M1255.3 502.9h0M1255.4 517h0M1255.4 509.5h0M1255.5 510h0M1255.5 509.5h0M1255.5 514.2h0M1255.6 518.2h0M1255.7 546.5h0M1255.9 515.3h0M1256.3 519h0M1256.3 509.3h0M1256.4 513.9h0M1256.4 516h0M1256.4 546.9h0M1256.7 517.6h0M1256.8 518.9h0M1256.9 513.2h0M1256.9 505.3h0M1256.9 504.1h0M1256.9 507.2h0M1257 554.4h0M1257 546.2h0M1257.1 505.6h0M1257.1 516.5h0M1257.2 514.5h0M1257.4 515h0M1257.4 518.5h0M1257.5 516.7h0M1257.5 515.4h0M1257.6 518.4h0M1257.7 516.5h0M1257.9 518.6h0M1257.9 515.9h0M1257.9 510.3h0M1258.1 500.3h0M1258.3 503.7h0M1258.3 547.8h0M1258.4 515.1h0M1258.4 510.9h0M1258.4 548.2h0M1258.5 516.9h0M1258.5 548.9h0M1258.5 515.2h0M1258.5 550.8h0M1258.9 508.5h0M1259.1 511.7h0M1259.2 551h0M1259.3 510.1h0M1259.3 556.1h0M1259.3 545.2h0M1259.4 544.6h0M1259.4 546.3h0M1259.6 550.5h0M1259.6 509.6h0M1259.6 513.5h0M1259.9 515.5h0M1260.3 508h0M1260.4 517.6h0M1260.5 558h0M1260.7 505h0M1260.7 548h0M1260.8 517.9h0M1260.8 545.5h0M1260.9 548.8h0M1261.1 516.6h0M1261.3 502.5h0M1261.4 510.9h0M1261.4 550.5h0M1261.4 547.8h0M1261.5 519h0M1261.5 545.6h0M1261.6 552.3h0M1261.7 548h0M1261.9 556.9h0M1261.9 517.7h0M1262.1 546.1h0M1262.2 513h0M1262.3 544.8h0M1262.5 547h0M1262.5 509.5h0M1262.7 545.9h0M1262.8 519h0M1263.1 510.7h0M1263.2 513.9h0M1263.2 544.6h0M1263.3 517.8h0M1263.3 507.9h0M1263.3 553.6h0M1263.3 504.8h0M1263.3 554.1h0M1264.7 433.5h0M1264.7 431.3h0M1264.8 421.9h0M1264.8 423.4h0M1264.8 425h0M1265 428.6h0M1267.9 420.1h0M1268.4 420.2h0M1268.7 428.1h0M1269.4 435.2h0M1269.6 422.6h0M1269.8 428.4h0M1270.3 421.6h0M1270.3 428.8h0M1270.4 420.2h0M1270.5 438.1h0M1270.6 423.2h0M1270.6 440.3h0M1270.7 430.5h0M1270.7 428.7h0M1270.8 422.1h0M1270.8 420.5h0M1270.9 426.8h0M1270.9 421.1h0M1270.9 426.1h0M1270.9 426h0M1271 442.2h0M1271.1 445.4h0M1271.1 430.8h0M1271.1 431.3h0M1271.1 420.2h0M1274.5 427.6h0M1274.9 424.1h0M1275.1 431.8h0M1275.5 430.4h0M1275.7 436.3h0M1275.9 420.9h0M1276 430.2h0M1276 420.9h0M1276.3 431.1h0M1276.3 440.4h0M1276.6 421.4h0M1276.7 429.6h0M1276.8 421h0M1276.8 424.5h0M1276.8 440.3h0M1276.8 427.3h0M1276.9 427h0M1277.2 426.7h0M1277.2 428.8h0M1277.2 427.4h0M1277.2 430.2h0M1277.3 421.8h0M1277.4 420.2h0M1279.8 420.9h0M1281 426.3h0M1281.2 423.9h0M1281.3 425h0M1281.7 421.1h0M1281.9 425.3h0M1281.9 427.7h0M1282.1 423.7h0M1282.1 437.8h0M1282.3 431.4h0M1282.3 433.1h0M1282.4 426.5h0M1282.4 425.7h0M1282.4 440.2h0M1282.4 440.2h0M1282.6 427.6h0M1282.6 426.4h0M1282.7 423.3h0M1282.8 433.8h0M1282.8 422.6h0M1282.8 442.8h0M1282.8 440.5h0M1282.9 443.6h0M1283.2 429.9h0M1283.2 420.2h0M1283.3 424.6h0M1283.3 422.5h0M1283.3 430.1h0M1283.4 447h0M1283.4 422.1h0M1283.5 428.7h0M1283.5 425.1h0M1283.6 425.7h0M1286.7 422.3h0M1286.8 422.1h0M1287.7 433.4h0M1288 422.5h0M1288.3 420.8h0M1288.3 437.7h0M1288.5 431.8h0M1288.6 425h0M1288.7 427.2h0M1288.8 433.2h0M1288.9 442h0M1289 425.6h0M1289 421h0M1289.1 427.1h0M1289.1 421h0M1289.2 422h0M1289.2 433.7h0M1289.2 421.9h0M1289.3 428.7h0M1289.4 440.6h0M1289.4 424.7h0M1289.5 436.3h0M1289.6 431h0M1289.6 427h0M1289.6 433h0M1289.6 425.2h0M1289.6 430.7h0M1289.6 421.2h0M1289.7 434.4h0M1289.7 443.3h0M1289.7 428.4h0M1292.8 417.6h0M1292.8 384.4h0M1292.9 413.6h0M1293 402.7h0M1293 397.9h0M1293 407.8h0M1293.1 432.3h0M1293.1 410.2h0M1293.1 415.1h0M1293.1 406h0M1293.2 404.5h0M1293.2 407.4h0M1293.2 410.3h0M1293.2 422.6h0M1293.2 426.3h0M1293.3 406.6h0M1293.3 401.8h0M1293.4 438.2h0M1293.4 413.9h0M1293.5 418.8h0M1293.5 427.3h0M1293.5 409.5h0M1293.6 400.8h0M1293.6 419.7h0M1293.6 409.9h0M1293.7 388.5h0M1293.7 399.1h0M1293.7 408.3h0M1293.7 435.8h0M1293.8 422.3h0M1293.8 435.8h0M1293.8 418.9h0M1293.9 406h0M1294 392.2h0M1294 411.9h0M1294 422.8h0M1294.1 412.7h0M1294.1 415.7h0M1294.1 404.5h0M1294.2 432.1h0M1294.2 408.5h0M1294.2 424.2h0M1294.3 411.3h0M1294.3 415.9h0M1294.3 413.9h0M1294.4 411.4h0M1294.4 434.7h0M1294.4 422.3h0M1294.4 425.2h0M1294.5 409.5h0M1294.5 423.2h0M1294.7 412.1h0M1294.7 424.8h0M1294.7 417.5h0M1294.7 423.2h0M1294.8 402.2h0M1294.9 404.8h0M1294.9 420.4h0M1294.9 428.6h0M1294.9 416.8h0M1294.9 414.5h0M1294.9 416.6h0M1294.9 403.7h0M1295 403.9h0M1295 422.9h0M1295 408.4h0M1295 412.4h0M1295.1 402.6h0M1295.3 438.1h0M1295.3 416.6h0M1295.4 428.6h0M1295.4 429.7h0M1295.4 418h0M1295.5 412.6h0M1295.5 412h0M1295.6 417.8h0M1295.6 405.8h0M1295.6 418.7h0M1295.6 416.5h0M1295.7 436.9h0M1295.8 408.6h0M1295.8 421.3h0M1295.8 409.5h0M1295.9 411.4h0M1295.9 422.6h0M1295.9 425.4h0M1295.9 420.9h0M1295.9 424h0M1296 429.4h0M1296.1 423.9h0M1296.1 427.3h0M1296.1 412.9h0M1296.3 431.8h0M1296.4 419.7h0M1296.4 421.5h0M1296.4 420.1h0M1296.4 444.4h0M1296.4 428.8h0M1296.4 431.8h0M1296.5 417.2h0M1296.5 407.4h0M1296.5 413.5h0M1296.6 410.9h0M1296.7 437.4h0M1296.9 416.1h0M1296.9 448.6h0M1296.9 412.9h0M1296.9 428.6h0M1297 404.1h0M1297 421.1h0M1297.1 429.1h0M1297.1 444.7h0M1297.1 428.1h0M1297.2 408.1h0M1297.2 417.8h0M1297.2 416.2h0M1297.3 414.3h0M1297.3 429.7h0M1297.3 436.4h0M1297.3 432h0M1297.3 429h0M1297.3 417h0M1297.4 434.1h0M1297.5 411.5h0M1297.5 409.3h0M1297.6 422.1h0M1297.6 417.6h0M1297.7 433.1h0M1297.8 428.8h0M1297.8 429.4h0M1297.9 448.4h0M1297.9 426.4h0M1297.9 414.8h0M1297.9 427.3h0M1297.9 406.3h0M1298 412h0M1298.1 432.7h0M1298.1 434.9h0M1298.1 423.3h0M1298.2 443.3h0M1298.2 422.4h0M1298.2 429.3h0M1298.3 413.9h0M1298.3 413.8h0M1298.4 428.9h0M1298.4 446.5h0M1298.5 445.6h0M1298.6 447.5h0M1298.6 443.8h0M1298.7 430.2h0M1298.7 427h0M1298.8 435.7h0M1298.8 436.3h0M1298.8 429.3h0M1298.8 409.7h0M1298.9 427.2h0M1299 424h0M1299 433.6h0M1299.1 433h0M1299.2 423h0M1299.4 414.8h0M1299.4 455.8h0M1299.5 441.3h0M1299.6 433.2h0M1299.6 427.2h0M1299.6 433.6h0M1299.6 444.1h0M1299.7 435.4h0M1299.7 419.9h0M1299.8 437.9h0M1299.8 428.3h0M1299.8 425.3h0M1299.9 432.9h0M1299.9 435.3h0M1300 428.3h0M1300 457.6h0M1300 441.1h0M1300 436.8h0M1300 421.1h0M1300.1 420.8h0M1300.1 421.8h0M1300.1 454.5h0M1300.1 422.1h0M1300.3 422.3h0M1300.3 415.2h0M1300.3 443h0M1300.3 430.7h0M1300.4 436.2h0M1300.5 424.6h0M1300.5 448.1h0M1300.5 433.5h0M1300.5 434h0M1300.6 429.3h0M1300.6 433.1h0M1300.6 422.8h0M1300.7 440.8h0M1300.7 441.9h0M1300.8 439.2h0M1300.8 448.9h0M1300.9 453.7h0M1300.9 416.4h0M1300.9 434.5h0M1300.9 443.5h0M1300.9 451h0M1300.9 442.3h0M1301 420.5h0M1301 440h0M1301.1 428.1h0M1301.1 430.7h0M1301.1 460.8h0M1301.1 432.4h0M1301.2 441.8h0M1301.2 438.3h0M1301.2 435.9h0M1301.2 414.6h0M1301.2 452.2h0M1301.3 443.6h0M1301.3 442.7h0M1301.3 442.6h0M1301.3 438.8h0M1301.3 433.8h0M1301.3 437.8h0M1301.3 448.2h0M1301.4 422.2h0M1301.4 414.3h0M1301.4 446h0M1301.4 455.5h0M1301.4 451.1h0M1301.5 453h0M1301.6 455h0M1301.6 446.7h0M1301.7 434.8h0M1301.7 433.8h0M1301.7 447.5h0M1301.7 416h0M1301.7 462.5h0M1301.7 441.8h0M1301.8 415.4h0M1301.8 410.5h0M1301.9 444.4h0M1301.9 440h0M1301.9 420.6h0M1301.9 440h0M1302 463h0M1302 427.8h0M1302 443.1h0M1302 450.1h0M1302.1 421.3h0M1302.1 451.8h0M1302.2 419.2h0M1302.2 415.9h0M1302.2 445.5h0M1302.2 435.9h0M1302.3 420.8h0M1302.3 433.5h0M1302.4 434.8h0M1302.5 438.4h0M1302.6 446.7h0M1302.6 429.7h0M1302.6 449h0M1302.7 444.2h0M1302.7 416.5h0M1302.7 433.5h0M1302.7 427h0M1302.7 436.1h0M1302.7 454.9h0M1302.7 420.4h0M1302.8 455.6h0M1302.8 430.9h0M1302.8 420.9h0M1302.8 430.4h0M1302.8 450.2h0M1302.8 413.6h0M1302.9 434.2h0M1302.9 413.8h0M1302.9 466.2h0M1303.1 443.9h0M1303.1 447h0M1303.2 431.1h0M1303.2 419.8h0M1303.2 429.6h0M1303.3 428.3h0M1303.3 441.5h0M1303.3 442.3h0M1303.4 467.4h0M1303.4 441.2h0M1303.4 422.7h0M1303.4 458h0M1303.5 440.7h0M1303.5 433.2h0M1303.6 458.9h0M1303.6 449h0M1303.6 445.1h0M1303.6 452h0M1303.6 434.2h0M1303.7 423.4h0M1303.7 449.3h0M1303.7 443.2h0M1303.8 432.7h0M1303.8 443.5h0" stroke="#000" stroke-width="3.6" stroke-linecap="round" fill="none"/><path d="M352.5 660.7l5.8 0l-2.9 5.6zM439.5 660.7l5.8 0l-2.9 5.6zM555.1 660.7l5.8 0l-2.9 5.6zM555.7 660.7l5.8 0l-2.9 5.6zM590.5 660.7l5.8 0l-2.9 5.6zM627.5 660.7l5.8 0l-2.9 5.6zM801.5 660.7l5.8 0l-2.9 5.6zM876.5 660.7l5.8 0l-2.9 5.6zM1117.5 660.7l5.8 0l-2.9 5.6zM1192.5 660.7l5.8 0l-2.9 5.6zM1278.5 660.7l5.8 0l-2.9 5.6zM1278.5 660.7l5.8 0l-2.9 5.6zM1278.5 660.7l5.8 0l-2.9 5.6zM1282.5 660.7l5.8 0l-2.9 5.6z" fill="#ffa500"/><rect x="105.5" y="499.1" width="1255.5" height="48.6" fill="#f00" fill-opacity="0.1"/><rect x="162.2" y="514" width="690.8" height="22.7" fill="#ffa500" fill-opacity="0.1"/><rect x="853" y="516" width="154" height="24.6" fill="#ffa500" fill-opacity="0.1"/><rect x="1007" y="517" width="256.2" height="30" fill="#ffa500" fill-opacity="0.1"/><rect x="1263.2" y="385.2" width="29.4" height="36.6" fill="#ffa500" fill-opacity="0.1"/><rect x="1292.6" y="413" width="10" height="29" fill="#ffa500" fill-opacity="0.1"/><path d="M162.2 525.5H853V528.5H1007V531.5H1263.2M1263.2 403.5H1292.6M1292.6 427.5H1302.6" stroke="#ffa500" stroke-width="3" fill="none"/><path d="M105.5 523H1361" stroke="#f00" stroke-width="2" fill="none"/>
<path d="M162 665.96V380.3" stroke="#800080" stroke-width="2" stroke-dasharray="2.083 3.4375" fill="none"/><path d="M853 665.96V380.3" stroke="#800080" stroke-width="2" stroke-dasharray="2.083 3.4375" fill="none"/><path d="M1007 665.96V380.3" stroke="#800080" stroke-width="2" stroke-dasharray="2.083 3.4375" fill="none"/><path d="M1263 665.96V380.3" stroke="#800080" stroke-width="2" stroke-dasharray="2.083 3.4375" fill="none"/><path d="M1292 665.96V380.3" stroke="#800080" stroke-width="2" stroke-dasharray="2.083 3.4375" fill="none"/><path d="M1303 665.96V380.3" stroke="#800080" stroke-width="2" stroke-dasharray="2.083 3.4375" fill="none"/>
</g>
<rect x="105.5" y="380.5" width="1380.0" height="285.0" fill="none" stroke="#000" stroke-width="1"/>
<path d="M162.5 665.5V671.4" stroke="#000" stroke-width="1"/><text x="161.8" y="686.4" font-size="13.89" text-anchor="middle">0</text><path d="M338.5 665.5V671.4" stroke="#000" stroke-width="1"/><text x="337.5" y="686.4" font-size="13.89" text-anchor="middle">5000</text><path d="M514.5 665.5V671.4" stroke="#000" stroke-width="1"/><text x="513.3" y="686.4" font-size="13.89" text-anchor="middle">10000</text><path d="M689.5 665.5V671.4" stroke="#000" stroke-width="1"/><text x="689.1" y="686.4" font-size="13.89" text-anchor="middle">15000</text><path d="M865.5 665.5V671.4" stroke="#000" stroke-width="1"/><text x="864.9" y="686.4" font-size="13.89" text-anchor="middle">20000</text><path d="M1041.5 665.5V671.4" stroke="#000" stroke-width="1"/><text x="1040.7" y="686.4" font-size="13.89" text-anchor="middle">25000</text><path d="M1217.5 665.5V671.4" stroke="#000" stroke-width="1"/><text x="1216.5" y="686.4" font-size="13.89" text-anchor="middle">30000</text><path d="M1392.5 665.5V671.4" stroke="#000" stroke-width="1"/><text x="1392.3" y="686.4" font-size="13.89" text-anchor="middle">35000</text>
<path d="M105.5 657.5H100.2" stroke="#000" stroke-width="1"/><text x="95.6" y="662.8" font-size="13.89" text-anchor="end">8.12</text><path d="M105.5 615.5H100.2" stroke="#000" stroke-width="1"/><text x="95.6" y="620.8" font-size="13.89" text-anchor="end">8.14</text><path d="M105.5 574.5H100.2" stroke="#000" stroke-width="1"/><text x="95.6" y="579.8" font-size="13.89" text-anchor="end">8.16</text><path d="M105.5 532.5H100.2" stroke="#000" stroke-width="1"/><text x="95.6" y="537.8" font-size="13.89" text-anchor="end">8.18</text><path d="M105.5 491.5H100.2" stroke="#000" stroke-width="1"/><text x="95.6" y="496.8" font-size="13.89" text-anchor="end">8.20</text><path d="M105.5 449.5H100.2" stroke="#000" stroke-width="1"/><text x="95.6" y="454.8" font-size="13.89" text-anchor="end">8.22</text><path d="M105.5 408.5H100.2" stroke="#000" stroke-width="1"/><text x="95.6" y="413.8" font-size="13.89" text-anchor="end">8.24</text>
<text x="794.8" y="372" font-size="16.67" text-anchor="middle">Magnitude Estimates</text>
<text x="507" y="657" font-size="13.89" text-anchor="middle">3576</text>
<text x="929.5" y="637" font-size="13.89" text-anchor="middle">57486</text>
<text x="1134.5" y="617" font-size="13.89" text-anchor="middle">16972</text>
<text x="1297.5" y="637" font-size="13.89" text-anchor="middle">42309</text>
<text x="1277.5" y="657" font-size="13.89" text-anchor="middle">42569</text>
<rect x="1365.4" y="387.5" width="113.3" height="48.1" rx="2.8" fill="#fff" fill-opacity="0.8" stroke="#ccc" stroke-opacity="0.8" stroke-width="1.1"/>
<path d="M1370.4 399.5h27.8" stroke="#ffa500" stroke-width="2.8" stroke-linecap="square"/>
<path d="M1370.1 421.9h27.8" stroke="#f00" stroke-width="2.1" stroke-linecap="square"/>
<text x="1409.65" y="403.8" font-size="13.89">mag<tspan font-size="9.72" font-style="italic" dy="2.1" dx="-0.3" letter-spacing="0.1">OBSID</tspan></text>
<text x="1408.8" y="426.7" font-size="13.89" text-anchor="start">mag</text>
<rect x="1348.3" y="613.7" width="130.4" height="45.6" rx="2.8" fill="#fff" fill-opacity="0.8" stroke="#ccc" stroke-opacity="0.8" stroke-width="1.1"/>
<circle cx="1367.4" cy="626.5" r="1.9" fill="#ffa500"/>
<text x="1392.7" y="629.9" font-size="13.89" text-anchor="start">Highlighted</text>
<circle cx="1367.4" cy="647.3" r="1.9" fill="#000"/>
<text x="1392.7" y="650.7" font-size="13.89" text-anchor="start">OK</text>
<g clip-path="url(#c3)">
<path d="M105.5 763.5H1485.5" stroke="#b0b0b0" stroke-width="1" stroke-dasharray="1.111 1.833" fill="none"/>
<path d="M105.5 801.5H1485.5" stroke="#b0b0b0" stroke-width="1" stroke-dasharray="1.111 1.833" fill="none"/>
<path d="M105.5 840.5H1485.5" stroke="#b0b0b0" stroke-width="1" stroke-dasharray="1.111 1.833" fill="none"/>
<path d="M105.5 878.5H1485.5" stroke="#b0b0b0" stroke-width="1" stroke-dasharray="1.111 1.833" fill="none"/>
<path d="M105.5 916.5H1485.5" stroke="#b0b0b0" stroke-width="1" stroke-dasharray="1.111 1.833" fill="none"/>
<path d="M105.5 1009.5H1485.5" stroke="#b0b0b0" stroke-width="1" stroke-dasharray="1.111 1.833" fill="none"/>
<path d="M105.5 983.5H1485.5" stroke="#b0b0b0" stroke-width="1" stroke-dasharray="1.111 1.833" fill="none"/>
<path d="M105.5 957.5H1485.5" stroke="#b0b0b0" stroke-width="1" stroke-dasharray="1.111 1.833" fill="none"/>
<path d="M162 954.4V725.3" stroke="#800080" stroke-width="2" stroke-dasharray="2.083 3.4375" fill="none"/><path d="M853 954.4V725.3" stroke="#800080" stroke-width="2" stroke-dasharray="2.083 3.4375" fill="none"/><path d="M1007 954.4V725.3" stroke="#800080" stroke-width="2" stroke-dasharray="2.083 3.4375" fill="none"/><path d="M1263 954.4V725.3" stroke="#800080" stroke-width="2" stroke-dasharray="2.083 3.4375" fill="none"/><path d="M1292 954.4V725.3" stroke="#800080" stroke-width="2" stroke-dasharray="2.083 3.4375" fill="none"/><path d="M1303 954.4V725.3" stroke="#800080" stroke-width="2" stroke-dasharray="2.083 3.4375" fill="none"/>
<circle cx="355.5" cy="840.5" r="0.9" fill="none" stroke="#000" stroke-width="1.2"/><circle cx="355.5" cy="878.5" r="0.9" fill="none" stroke="#000" stroke-width="1.2"/><circle cx="442.5" cy="840.5" r="0.9" fill="none" stroke="#000" stroke-width="1.2"/><circle cx="442.5" cy="878.5" r="0.9" fill="none" stroke="#000" stroke-width="1.2"/><circle cx="558.5" cy="840.5" r="0.9" fill="none" stroke="#000" stroke-width="1.2"/><circle cx="558.5" cy="878.5" r="0.9" fill="none" stroke="#000" stroke-width="1.2"/><circle cx="559.5" cy="840.5" r="0.9" fill="none" stroke="#000" stroke-width="1.2"/><circle cx="559.5" cy="878.5" r="0.9" fill="none" stroke="#000" stroke-width="1.2"/><circle cx="593.5" cy="840.5" r="0.9" fill="none" stroke="#000" stroke-width="1.2"/><circle cx="593.5" cy="878.5" r="0.9" fill="none" stroke="#000" stroke-width="1.2"/><circle cx="630.5" cy="840.5" r="0.9" fill="none" stroke="#000" stroke-width="1.2"/><circle cx="630.5" cy="878.5" r="0.9" fill="none" stroke="#000" stroke-width="1.2"/><circle cx="805.5" cy="840.5" r="0.9" fill="none" stroke="#000" stroke-width="1.2"/><circle cx="805.5" cy="878.5" r="0.9" fill="none" stroke="#000" stroke-width="1.2"/><circle cx="886.5" cy="840.5" r="0.9" fill="none" stroke="#000" stroke-width="1.2"/><circle cx="886.5" cy="878.5" r="0.9" fill="none" stroke="#000" stroke-width="1.2"/><circle cx="888.5" cy="840.5" r="0.9" fill="none" stroke="#000" stroke-width="1.2"/><circle cx="888.5" cy="878.5" r="0.9" fill="none" stroke="#000" stroke-width="1.2"/><circle cx="963.5" cy="840.5" r="0.9" fill="none" stroke="#000" stroke-width="1.2"/><circle cx="963.5" cy="878.5" r="0.9" fill="none" stroke="#000" stroke-width="1.2"/><circle cx="1119.5" cy="840.5" r="0.9" fill="none" stroke="#000" stroke-width="1.2"/><circle cx="1119.5" cy="878.5" r="0.9" fill="none" stroke="#000" stroke-width="1.2"/><circle cx="1121.5" cy="840.5" r="0.9" fill="none" stroke="#000" stroke-width="1.2"/><circle cx="1121.5" cy="878.5" r="0.9" fill="none" stroke="#000" stroke-width="1.2"/><circle cx="1167.5" cy="840.5" r="0.9" fill="none" stroke="#000" stroke-width="1.2"/><circle cx="1167.5" cy="878.5" r="0.9" fill="none" stroke="#000" stroke-width="1.2"/><circle cx="1195.5" cy="840.5" r="0.9" fill="none" stroke="#000" stroke-width="1.2"/><circle cx="1195.5" cy="878.5" r="0.9" fill="none" stroke="#000" stroke-width="1.2"/><circle cx="1272.5" cy="840.5" r="0.9" fill="none" stroke="#000" stroke-width="1.2"/><circle cx="1272.5" cy="878.5" r="0.9" fill="none" stroke="#000" stroke-width="1.2"/><circle cx="1281.5" cy="840.5" r="0.9" fill="none" stroke="#000" stroke-width="1.2"/><circle cx="1281.5" cy="878.5" r="0.9" fill="none" stroke="#000" stroke-width="1.2"/><circle cx="1283.5" cy="840.5" r="0.9" fill="none" stroke="#000" stroke-width="1.2"/><circle cx="1283.5" cy="878.5" r="0.9" fill="none" stroke="#000" stroke-width="1.2"/><circle cx="162.5" cy="763.5" r="0.9" fill="none" stroke="#000" stroke-width="1.2"/><circle cx="163.5" cy="763.5" r="0.9" fill="none" stroke="#000" stroke-width="1.2"/><circle cx="164.5" cy="763.5" r="0.9" fill="none" stroke="#000" stroke-width="1.2"/><circle cx="853.5" cy="763.5" r="0.9" fill="none" stroke="#000" stroke-width="1.2"/><circle cx="854.5" cy="763.5" r="0.9" fill="none" stroke="#000" stroke-width="1.2"/><circle cx="855.5" cy="763.5" r="0.9" fill="none" stroke="#000" stroke-width="1.2"/><circle cx="1008.5" cy="763.5" r="0.9" fill="none" stroke="#000" stroke-width="1.2"/><circle cx="1008.5" cy="763.5" r="0.9" fill="none" stroke="#000" stroke-width="1.2"/><circle cx="1009.5" cy="763.5" r="0.9" fill="none" stroke="#000" stroke-width="1.2"/><circle cx="1264.5" cy="763.5" r="0.9" fill="none" stroke="#000" stroke-width="1.2"/><circle cx="1265.5" cy="763.5" r="0.9" fill="none" stroke="#000" stroke-width="1.2"/><circle cx="1266.5" cy="763.5" r="0.9" fill="none" stroke="#000" stroke-width="1.2"/><circle cx="1293.5" cy="763.5" r="0.9" fill="none" stroke="#000" stroke-width="1.2"/><circle cx="1293.5" cy="763.5" r="0.9" fill="none" stroke="#000" stroke-width="1.2"/>
<path d="M164 1011.2 L164 1006.4 165.5 1006.3 167 1006.3 168.5 1006.1 170 1006.2 171.5 1006.1 173 1006.4 174.5 1005.1 176 1006.2 177.5 1006.2 179 1006.2 180.5 1006.3 182 1006.4 183.5 1006.1 185 1005.6 186.5 1006.2 188 1005.9 189.5 1006.2 191 1005.7 192.5 1005.9 194 1005.8 195.5 1006.3 197 1006 198.5 1006.3 200 1006.3 201.5 1006.3 203 1005.5 204.5 1006.2 206 1006.4 207.5 1006.4 209 1005.9 210.5 1006.2 212 1006.1 213.5 1006.1 215 1006 216.5 1006.1 218 1006.4 219.5 1006.1 221 1006.2 222.5 1006.4 224 1006.4 225.5 1006.4 227 1005.4 228.5 1006.4 230 1005.9 231.5 1005.9 233 1006.1 234.5 1006.4 236 1006.2 237.5 1005.7 239 1006.1 240.5 1006 242 1006.4 243.5 1006.2 245 1006.3 246.5 1006.2 248 1006.4 249.5 1006.2 251 1005.9 252.5 1006.2 254 1006.3 255.5 1006.2 257 1006.4 258.5 1006 260 1006.2 261.5 1006.3 263 1006.1 264.5 1006 266 1005.9 267.5 1006.1 269 1006.2 270.5 1005.7 272 1006.2 273.5 1006.4 275 1006 276.5 1006.2 278 1006.3 279.5 1006.3 281 1006.3 282.5 1005.9 284 1006.3 285.5 1006.3 287 1006.3 288.5 1006.4 290 1006.3 291.5 1006 293 1006.4 294.5 1006.2 296 1006 297.5 1006.2 299 1006.4 300.5 1005.5 302 1006.3 303.5 1006 305 1006.4 306.5 1006.2 308 1005.9 309.5 1006.3 311 1005.8 312.5 1005.7 314 1006.3 315.5 1006.1 317 1006.3 318.5 1005.6 320 1006.1 321.5 1006.2 323 1006.3 324.5 1006.2 326 1006.3 327.5 1006.3 329 1005.4 330.5 1006.2 332 1006 333.5 1006.4 335 1006.4 336.5 1006 338 1004.8 339.5 1004.8 341 1006.1 342.5 1006.3 344 1006.4 345.5 1006.2 347 1006.4 348.5 1005.1 350 1006 351.5 1006.3 353 1005.7 354.5 1006.1 356 1004.9 357.5 1006.1 359 1006.1 360.5 1006.1 362 1006.4 363.5 1005.9 365 1006 366.5 1004.9 368 1006.4 369.5 1005 371 1006.3 372.5 1006.1 374 1006 375.5 1006.2 377 1006.4 378.5 1006.1 380 1006.2 381.5 1006 383 1006 384.5 1006.3 386 1006.1 387.5 1006.4 389 1006.2 390.5 1006.3 392 1006.2 393.5 1006.4 395 1006.3 396.5 1006.3 398 1005.9 399.5 1005.3 401 1005.8 402.5 1006.2 404 1006 405.5 1006.3 407 1005.9 408.5 1005.9 410 1006.3 411.5 1006.2 413 1004.5 414.5 1006.1 416 1006.4 417.5 1006.4 419 1006.1 420.5 1006.2 422 1006.2 423.5 1006.3 425 1004.9 426.5 1006 428 1005.9 429.5 1006.2 431 1006.3 432.5 1006.4 434 1006.2 435.5 1006.2 437 1006.2 438.5 1006.3 440 1006.3 441.5 1006.4 443 1005.2 444.5 1006.2 446 1006.3 447.5 1005.6 449 1005.9 450.5 1006.1 452 1006.1 453.5 1006.4 455 1006.2 456.5 1006.1 458 1006.1 459.5 1006.1 461 1006.2 462.5 1005.9 464 1006 465.5 1006.1 467 1006.2 468.5 1006.1 470 1004.8 471.5 1005.9 473 1006 474.5 1005.8 476 1006.1 477.5 1006 479 1004.8 480.5 1006.1 482 1005.8 483.5 1004.7 485 1006.3 486.5 1005.7 488 1006.3 489.5 1006.4 491 1006.1 492.5 1005.9 494 1006.3 495.5 1006.1 497 1005.8 498.5 1006.2 500 1006.4 501.5 1006.3 503 1006.1 504.5 1006.2 506 1006.1 507.5 1006.1 509 1006.3 510.5 1006.1 512 1006.3 513.5 1006.3 515 1004.7 516.5 1005.9 518 1006.1 519.5 1006.4 521 1006.4 522.5 1005.9 524 1006.2 525.5 1006.1 527 1006.4 528.5 1006.4 530 1006.3 531.5 1006 533 1006.4 534.5 1005.6 536 1006.2 537.5 1005.7 539 1005.3 540.5 1006.2 542 1005.9 543.5 1006.4 545 1006 546.5 1006.1 548 1006 549.5 1006.3 551 1006.4 552.5 1006.4 554 1006.4 555.5 1006.1 557 1006.2 558.5 1005.7 560 1006 561.5 1006.2 563 1006.2 564.5 1006 566 1006 567.5 1006.4 569 1006.4 570.5 1005.9 572 1005.8 573.5 1005.9 575 1006.2 576.5 1006.1 578 1006.3 579.5 1005.5 581 1006.3 582.5 1006.4 584 1006.4 585.5 1006 587 1006.3 588.5 1006.3 590 1006 591.5 1006.3 593 1006.4 594.5 1005 596 1006.2 597.5 1006.3 599 1004.6 600.5 1005.9 602 1006.1 603.5 1006.1 605 1006.2 606.5 1006.4 608 1006.3 609.5 1006.3 611 1006.3 612.5 1006.4 614 1005.9 615.5 1006.2 617 1006.4 618.5 1006.2 620 1006.2 621.5 1005.8 623 1006.2 624.5 1006.4 626 1006.3 627.5 1006 629 1006.4 630.5 1006.1 632 1006.3 633.5 1006.3 635 1006.3 636.5 1006.4 638 1005.8 639.5 1006.3 641 1006.1 642.5 1006.1 644 1006.1 645.5 1006.2 647 1005.9 648.5 1006.3 650 1006.2 651.5 1006.3 653 1006.4 654.5 1006.1 656 1006.2 657.5 1005.7 659 1006.3 660.5 1006.3 662 1004.5 663.5 1006.3 665 1006 666.5 1006 668 1006 669.5 1004.7 671 1006 672.5 1005.9 674 1006.3 675.5 1006.2 677 1005.7 678.5 1006.3 680 1006.2 681.5 1005.9 683 1006.4 684.5 1005.1 686 1006.1 687.5 1006.1 689 1006.1 690.5 1006.2 692 1006.3 693.5 1006.3 695 1006.3 696.5 1006.3 698 1006.3 699.5 1006.4 701 1006.3 702.5 1006.4 704 1006.2 705.5 1005.7 707 1006.2 708.5 1006.4 710 1005.8 711.5 1006.3 713 1005.7 714.5 1005 716 1006.1 717.5 1006.2 719 1006.3 720.5 1005.8 722 1006.3 723.5 1006.2 725 1006.2 726.5 1005.6 728 1006.3 729.5 1006.1 731 1004.5 732.5 1006.4 734 1006.3 735.5 1006 737 1006.4 738.5 1006 740 1006 741.5 1006 743 1005.5 744.5 1006.2 746 1006.2 747.5 1006.4 749 1006.3 750.5 1006.3 752 1005.9 753.5 1005.9 755 1006.1 756.5 1006.3 758 1006.3 759.5 1006 761 1005.8 762.5 1005.5 764 1006.3 765.5 1006.3 767 1006.3 768.5 1006 770 1006.3 771.5 1006 773 1006.1 774.5 1006.1 776 1006.2 777.5 1005.7 779 1005.9 780.5 1006.2 782 1005.9 783.5 1006.3 785 1006.3 786.5 1006 788 1005.5 789.5 1006.3 791 1005.8 792.5 1006.2 794 1006.3 795.5 1005.8 797 1006.3 798.5 1006.1 800 1006 801.5 1006 803 1006.3 804.5 1006 806 1006.2 807.5 1006.2 809 1006.4 810.5 1006.2 812 1006.1 813.5 1006.3 815 1006 816.5 1005.9 818 1006.4 819.5 1006.1 821 1005.9 822.5 1006.4 824 1006.2 825.5 1006.1 827 1006.1 828.5 1006.2 830 1005.9 831.5 1006.1 833 1006.3 834.5 1006.3 836 1006.1 837.5 1006.2 839 1006.3 840.5 1006.2 842 1006.4 843.5 1006 845 1006.4 846.5 1006.4 848 1006.1 849.5 1006.1 851 1005 852.5 1005.8 854 1006.2 855.5 1006 857 1005.1 858.5 1006.4 860 1006 861.5 1005.9 863 1006 864.5 1006.1 866 1006 867.5 1006.3 869 1006.1 870.5 1006.1 872 1006.2 873.5 1006.1 875 1006.2 876.5 1006.1 878 1006 879.5 1005.8 881 1005.7 882.5 1006.3 884 1006.3 885.5 1006.4 887 1006.3 888.5 1006.4 890 1005.7 891.5 1006 893 1004.6 894.5 1006 896 1005.9 897.5 1006.1 899 1006.1 900.5 1004.6 902 1005.9 903.5 1006.3 905 1005.1 906.5 1005.4 908 1006.2 909.5 1006 911 1006 912.5 1004.7 914 1006.3 915.5 1005.9 917 1006.1 918.5 1005.9 920 1005.4 921.5 1006.3 923 1006.1 924.5 1005.7 926 1006.3 927.5 1006.4 929 1006.4 930.5 1006.4 932 1006 933.5 1006.4 935 1006.4 936.5 1005.9 938 1005.2 939.5 1006.4 941 1006.1 942.5 1006.4 944 1006.2 945.5 1006.1 947 1006.4 948.5 1006 950 1006.2 951.5 1006.4 953 1006.3 954.5 1006.3 956 1006.1 957.5 1006.1 959 1006.3 960.5 1006.2 962 1006.3 963.5 1006.4 965 1005.9 966.5 1006.4 968 1005.9 969.5 1006.2 971 1006.3 972.5 1005.7 974 1006.4 975.5 1006.3 977 1006.3 978.5 1006.3 980 1006.3 981.5 1006.1 983 1006.3 984.5 1006.2 986 1006.4 987.5 1006 989 1006.3 990.5 1006.3 992 1006.4 993.5 1006.2 995 1006.2 996.5 1005.8 998 1006.2 999.5 1006.3 1001 1006.3 1002.5 1006.3 1004 1006.2 1005.5 1006.3 1007 1006.2 1008.5 1006.2 1010 1006.3 1011.5 1005.9 1013 1006.2 1014.5 1006 1016 1006 1017.5 1006.3 1019 1005.9 1020.5 1006.1 1022 1006.3 1023.5 1005.5 1025 1006.3 1026.5 1005.9 1028 1005.9 1029.5 1006.2 1031 1004.7 1032.5 1006.3 1034 1006.3 1035.5 1005.8 1037 1005.8 1038.5 1006.4 1040 1006.3 1041.5 1006 1043 1006.2 1044.5 1006.3 1046 1006.3 1047.5 1006.4 1049 1006.1 1050.5 1006.1 1052 1006.4 1053.5 1006.1 1055 1006.2 1056.5 1005.1 1058 1006.3 1059.5 1006.3 1061 1006.3 1062.5 1006 1064 1005.8 1065.5 1006.2 1067 1006.4 1068.5 1006.3 1070 1005.8 1071.5 1006.3 1073 1006.2 1074.5 1006.1 1076 1005.6 1077.5 1006.3 1079 1006.1 1080.5 1006.3 1082 1006.2 1083.5 1006.4 1085 1006.1 1086.5 1005.4 1088 1006.4 1089.5 1006.2 1091 1006.2 1092.5 1005.8 1094 1006 1095.5 1006.3 1097 1006.3 1098.5 1006.1 1100 1006.2 1101.5 1006.4 1103 1006.1 1104.5 1005.7 1106 1006.3 1107.5 1006.4 1109 1006.3 1110.5 1005.9 1112 1006.4 1113.5 1005.9 1115 1006.1 1116.5 1006.3 1118 1006.3 1119.5 1006.1 1121 1005 1122.5 1005.9 1124 1006.1 1125.5 1006.3 1127 1006.2 1128.5 1005.9 1130 1006 1131.5 1006.2 1133 1006.2 1134.5 1006.2 1136 1006 1137.5 1006.3 1139 1006 1140.5 1006.1 1142 1006.1 1143.5 1006.3 1145 1006.2 1146.5 1006.2 1148 1006.3 1149.5 1006.1 1151 1006.4 1152.5 1006.3 1154 1006.1 1155.5 1006.2 1157 1006.2 1158.5 1006 1160 1005.6 1161.5 1005.7 1163 1006.4 1164.5 1006.3 1166 1005.9 1167.5 1006.4 1169 1006.1 1170.5 1006.4 1172 1006.2 1173.5 1006.1 1175 1005.8 1176.5 1005.9 1178 1006.2 1179.5 1006.1 1181 1006.4 1182.5 1006.3 1184 1006.2 1185.5 1006.3 1187 1006.2 1188.5 1006.1 1190 1006.3 1191.5 1006 1193 1006 1194.5 1006.4 1196 1006.1 1197.5 1006.3 1199 1006.3 1200.5 1006.2 1202 1005.8 1203.5 1006 1205 1006.3 1206.5 1005.5 1208 1006.1 1209.5 1006.4 1211 1006.2 1212.5 1005.7 1214 1006.3 1215.5 1006.3 1217 1006 1218.5 1006.2 1220 1006.2 1221.5 1006.2 1223 1005.7 1224.5 1005.8 1226 1006.2 1227.5 1006.2 1229 1005.7 1230.5 1006.2 1232 1006.3 1233.5 1006.2 1235 1005.4 1236.5 1006.3 1238 1005.8 1239.5 1006.3 1241 1006.1 1242.5 1006.3 1244 1006.2 1245.5 1005.4 1247 1005.6 1248.5 1006 1250 1006.3 1251.5 1006 1253 1005.7 1254.5 1006.4 1256 1005.8 1257.5 1006.1 1259 1006 1260.5 1006.2 1262 1006.4 1263.5 1005.7 L1263.6 1011.2z" fill="#000"/><path d="M1263.6 1011.2 L1263.6 1003.2 1264.6 1001.2 1265.6 1000.3 1266.6 1001 1267.6 999.7 1268.6 998.6 1269.6 999.2 1270.6 1001.1 1271.6 999.6 1272.6 1000.1 1273.6 1000.1 1274.6 1000.3 1275.6 997.9 1276.6 1001.1 1277.6 1000.9 1278.6 998.8 1279.6 998.5 1280.6 1000.4 1281.6 1001.6 1282.6 999.5 1283.6 999.8 1284.6 998.9 1285.6 1001.1 1286.6 1000.9 1287.6 1001.9 1288.6 998.4 1289.6 998.2 1290.6 999.9 1291.6 998.9 1292.6 999.8 1293.6 998.9 1294.6 1005.3 1295.6 1004 1296.6 1003.2 1297.6 998.1 1298.6 998.6 1299.6 998.8 1300.6 1002.9 1301.6 1002.7 1302.6 1005.5 1303.6 1007.5 L1304.5 1011.2z" fill="#000"/><path d="M168.3 1009.1h0M168.6 1009.4h0M170.1 1009.6h0M176.2 1009.1h0M177.6 1009.7h0M180.9 1009.2h0M184.2 1009.4h0M185.7 1009.5h0M186.9 1009.5h0M187.1 1009h0M187.6 1009.8h0M188.4 1009.5h0M188.6 1009.3h0M191.7 1009.1h0M193.4 1009h0M196 1009.1h0M199.1 1009.5h0M200.2 1009.3h0M202 1009.1h0M206 1009.3h0M207.9 1009.8h0M213.4 1009.3h0M214.2 1009.3h0M216.2 1009.7h0M219.8 1009.5h0M221.7 1009.4h0M226.1 1009.2h0M229.3 1009h0M230.9 1009.1h0M232 1009.3h0M234.5 1009.3h0M236 1009.5h0M238.4 1009.5h0M238.4 1009.5h0M239.2 1009.5h0M242.6 1009.1h0M243.6 1008.9h0M245.1 1009.3h0M246.9 1009.2h0M247.5 1009.2h0M249.3 1009.3h0M252.1 1009.1h0M255.4 1009.1h0M256.3 1009.4h0M258 1009.4h0M260.1 1009.2h0M265.1 1009.5h0M265.1 1009.3h0M268.5 1009.1h0M270.7 1009.4h0M272.8 1009.9h0M275.3 1009.2h0M276.2 1009.7h0M280 1009.7h0M282.1 1009.8h0M287.1 1009.2h0M287.8 1009.9h0M288 1009.4h0M289.6 1009.3h0M297 1009.3h0M298.5 1009.6h0M299.6 1009.4h0M301.7 1009.4h0M308.7 1009.7h0M313.7 1009.2h0M315.3 1009.1h0M315.5 1009.6h0M317.3 1009.6h0M321.5 1009.7h0M331.9 1009.1h0M332.3 1009.7h0M333.5 1009.5h0M334 1009.8h0M341.3 1009.1h0M342.3 1009.5h0M343.1 1009.3h0M352.3 1009h0M355.7 1009.2h0M357 1009.7h0M357.6 1009.3h0M359.4 1009.2h0M359.9 1009.6h0M361.7 1009.6h0M364.6 1009.6h0M365.3 1009.2h0M365.5 1009.4h0M368.6 1009.7h0M374 1009.2h0M374.8 1009.2h0M376.1 1009.6h0M376.5 1009.8h0M377 1009.1h0M379.3 1008.8h0M379.4 1009h0M380.6 1009.1h0M383.2 1009.4h0M386 1009.6h0M386.1 1009.4h0M394.3 1009.2h0M398.1 1009.4h0M398.7 1009.2h0M400 1009.4h0M402.3 1009.2h0M404 1010.1h0M404.4 1009.6h0M406.5 1009.2h0M406.8 1009.2h0M408.5 1009.3h0M408.5 1009h0M409.8 1009.2h0M409.9 1009.2h0M410.7 1009.6h0M411 1009.3h0M416.7 1009.2h0M422.1 1009.1h0M423.2 1009.1h0M424.2 1009.4h0M424.8 1009.3h0M425.8 1009.7h0M429.4 1009.2h0M432.7 1009.7h0M433.3 1009.5h0M435.9 1009.4h0M436 1008.9h0M436.3 1009.1h0M437.2 1009.6h0M441.3 1009.7h0M442.4 1009.5h0M444 1009.6h0M446.8 1009.3h0M449.2 1009.3h0M451 1009.2h0M451 1009.6h0M451.3 1009.5h0M453.5 1009.3h0M453.6 1009.3h0M453.9 1009.5h0M454.5 1009.5h0M455.9 1009.2h0M458.1 1009.8h0M458.2 1009.5h0M458.6 1009.4h0M459.1 1009.8h0M459.3 1009.7h0M460.9 1009.4h0M461 1009.5h0M464.2 1009.1h0M465.8 1009.2h0M469.9 1008.8h0M471.3 1009.7h0M477.8 1008.9h0M479.6 1009.6h0M480.9 1009.2h0M485.4 1009.2h0M489.8 1009.4h0M490.1 1009.5h0M490.1 1009.6h0M491.6 1009.8h0M495.3 1009.5h0M496.4 1009.6h0M499 1009.3h0M505.4 1009.6h0M509.9 1009.4h0M510.7 1009.3h0M514.7 1009.4h0M518.4 1009.4h0M519.3 1009.4h0M521.2 1009.5h0M525.9 1009.3h0M526.1 1009.2h0M528.5 1009.6h0M530.4 1009h0M532.1 1009.2h0M534.6 1009.8h0M534.9 1008.7h0M536.2 1009.2h0M536.2 1009.6h0M539.4 1009h0M540.9 1010h0M541.6 1008.8h0M554.3 1009.8h0M555.7 1009.8h0M568.4 1009.6h0M571.7 1009.3h0M573.8 1009.5h0M578.1 1009.2h0M578.4 1009.6h0M581.5 1009.1h0M582.4 1009.3h0M582.5 1009.6h0M584 1009.1h0M585.5 1009.3h0M587 1009.4h0M592.2 1009.1h0M593.4 1009.7h0M594.8 1009.5h0M597.4 1009h0M600.6 1009.4h0M601.4 1009.2h0M606.8 1009.2h0M610.4 1009.4h0M610.7 1009.2h0M614.5 1009.6h0M615.9 1009.2h0M616.7 1009.6h0M617 1009.4h0M620.1 1009.6h0M621 1009.3h0M625.3 1009.3h0M627.2 1009.1h0M627.9 1009.5h0M629.4 1009.6h0M630.6 1009.9h0M630.9 1009.7h0M634.7 1009.5h0M636.7 1009.3h0M638.7 1009.5h0M638.8 1009.4h0M647.5 1009.8h0M648.2 1009.6h0M651.6 1009.2h0M652.6 1009.2h0M652.8 1009.7h0M653.9 1009.5h0M656.1 1009.3h0M656.9 1009.7h0M657.7 1009.3h0M659.5 1009.3h0M666.7 1009.3h0M669.3 1008.9h0M669.4 1009.6h0M672.3 1009.1h0M673.9 1009.3h0M675 1009.2h0M675.7 1009.6h0M677.8 1009.4h0M678.1 1009.4h0M680.2 1009h0M683.1 1009.4h0M683.3 1009h0M685.7 1009.5h0M685.7 1009.5h0M688.1 1009.4h0M691.1 1009.9h0M691.9 1009.5h0M702.7 1009.5h0M702.7 1009.4h0M704.7 1009.4h0M705.2 1009.6h0M705.5 1009.7h0M707.4 1009.1h0M712.2 1009.7h0M722.2 1009.5h0M722.4 1009.6h0M723.1 1009.5h0M728.2 1009.1h0M728.8 1009.1h0M731 1009.9h0M732.4 1009.5h0M734.2 1009h0M734.7 1009.5h0M735 1009.3h0M741.5 1008.9h0M744.9 1008.8h0M747.7 1009h0M748.6 1009.5h0M750.2 1009.4h0M750.7 1009.3h0M756 1009.5h0M757.7 1009.6h0M767 1008.9h0M768.6 1009.3h0M769.1 1009.2h0M769.2 1009.1h0M770.3 1009.3h0M771.6 1009.4h0M779.2 1009.3h0M779.7 1009h0M782.1 1009.3h0M783.2 1009.9h0M783.6 1009.1h0M786.9 1009h0M788.3 1009.5h0M789 1009.5h0M805.5 1009.5h0M807.8 1009.1h0M808.6 1009.6h0M817.3 1009.2h0M817.8 1009.1h0M819.4 1009.2h0M819.7 1009.4h0M823.1 1009.6h0M829.7 1009.6h0M829.8 1009.4h0M830 1009.6h0M831.3 1009.4h0M831.9 1009.6h0M834.1 1009h0M836.5 1009h0M838.7 1009.6h0M838.8 1009.1h0M839.4 1009.3h0M840.9 1009.4h0M842 1009.3h0M844.9 1009.3h0M847.8 1009.7h0M852.7 1008.8h0M852.8 1009.6h0M854.5 1010h0M855.2 1009.4h0M855.7 1009.4h0M857.4 1009.6h0M858 1009.9h0M861 1009.1h0M863.3 1009.4h0M868.4 1009.4h0M869.4 1009.5h0M870.2 1009.4h0M871.3 1009.6h0M878.9 1009.3h0M880.3 1009.4h0M882.9 1009.2h0M883.6 1009.2h0M885.3 1009.4h0M886.1 1009.4h0M886.6 1009.1h0M888.1 1009.8h0M890.1 1009.4h0M892.6 1009.1h0M893.7 1009.7h0M894.2 1009.2h0M894.6 1009.5h0M896.3 1009.4h0M897.7 1009.5h0M898.9 1009.4h0M901 1009.3h0M903.1 1009.4h0M903.4 1009.9h0M909.3 1008.8h0M911.5 1009.4h0M912 1009.5h0M913.5 1009.1h0M914.8 1009.1h0M918.9 1009.9h0M921.9 1009.3h0M924.9 1009.9h0M926.8 1009.5h0M926.9 1009.4h0M928.8 1009.5h0M930.2 1009.6h0M933.1 1009.7h0M936.8 1009.5h0M938 1009.4h0M938.6 1009.4h0M938.7 1009.7h0M940.1 1009.6h0M940.7 1009.1h0M940.8 1009.2h0M944.2 1009.5h0M944.2 1009.2h0M944.6 1009.3h0M945.8 1009.2h0M948.6 1009.3h0M949.4 1009.5h0M950.2 1009.6h0M950.2 1009.4h0M955 1009.9h0M955.3 1009.4h0M957 1010.2h0M961.7 1009.7h0M970.5 1009.5h0M971 1009.3h0M971.1 1008.7h0M976.7 1009.4h0M978.5 1009.4h0M978.6 1009.9h0M982.2 1009.1h0M982.5 1009.9h0M985.7 1009.3h0M986 1009.6h0M986.2 1008.8h0M995.2 1009.4h0M998.3 1009.3h0M999.2 1009.6h0M1000.3 1009.4h0M1001.5 1009.1h0M1001.9 1009.6h0M1003.5 1009.6h0M1004 1009.5h0M1006.1 1009.7h0M1013 1009.7h0M1014.3 1009.4h0M1016.5 1009.1h0M1020.8 1009.1h0M1021.3 1009.7h0M1021.3 1009.6h0M1022.4 1009.4h0M1022.9 1009.3h0M1026.4 1009.4h0M1029.7 1009.4h0M1031 1009.3h0M1033 1009.2h0M1040 1009.9h0M1047.4 1009.5h0M1048.3 1009.2h0M1049.2 1009.1h0M1050 1009.2h0M1051 1009.6h0M1051.3 1009.6h0M1054 1009.3h0M1054.5 1009.4h0M1055.7 1009.3h0M1060.3 1009.1h0M1061.2 1009.7h0M1061.3 1009.5h0M1061.8 1010h0M1066 1009.2h0M1072 1009.4h0M1073.5 1009.6h0M1078.7 1009.3h0M1079.2 1009.1h0M1079.8 1009.2h0M1080.3 1009.4h0M1080.4 1009.5h0M1081.5 1009.4h0M1086.7 1009.7h0M1087.3 1009.6h0M1089.3 1009.5h0M1091.2 1009.4h0M1092 1009.3h0M1094 1009.5h0M1097.9 1009.6h0M1099.1 1009.4h0M1099.3 1009.5h0M1102.8 1009.3h0M1103.4 1009h0M1104.4 1009.1h0M1105.6 1009.6h0M1108.1 1009.5h0M1108.9 1009.8h0M1109.1 1009.4h0M1109.2 1009.6h0M1113.8 1009.7h0M1117.4 1009.6h0M1118.7 1009.2h0M1120.2 1009.4h0M1120.2 1009.4h0M1123.3 1009.2h0M1124.5 1009.5h0M1127.4 1009.7h0M1127.5 1009.3h0M1128.7 1009.9h0M1130.4 1009.3h0M1131.9 1009.3h0M1132.2 1009.3h0M1135.2 1009.2h0M1135.9 1009.5h0M1137.2 1009.4h0M1142.5 1009.8h0M1142.8 1009.6h0M1143.2 1009.5h0M1144.2 1009.3h0M1147.4 1009h0M1148.9 1009.4h0M1151.3 1009.2h0M1151.6 1009.6h0M1151.7 1009.4h0M1152.3 1009.8h0M1157.7 1009.6h0M1163 1009.6h0M1163.8 1009.5h0M1163.9 1009.5h0M1165.4 1009.6h0M1166.5 1009.6h0M1171 1009.2h0M1173.7 1009.5h0M1173.9 1010.1h0M1174 1009.4h0M1175.8 1009.3h0M1176.2 1009.2h0M1182.1 1009h0M1182.3 1009.7h0M1187.5 1009.4h0M1189.1 1009.5h0M1191 1009.9h0M1191 1010h0M1191.5 1009.2h0M1192.1 1009.7h0M1192.2 1009.6h0M1192.5 1009.5h0M1198.9 1009.5h0M1199.7 1009.4h0M1202.8 1009.8h0M1203.5 1009.6h0M1204.8 1009.5h0M1206.8 1009.7h0M1208.1 1009.6h0M1211.3 1009.5h0M1213.5 1009.5h0M1215.4 1009.8h0M1219.8 1009.5h0M1220.4 1009.4h0M1221.3 1009.2h0M1224.4 1009.3h0M1226.1 1009.1h0M1226.3 1009.4h0M1227.1 1009.5h0M1227.7 1008.9h0M1234 1009.4h0M1240.7 1009.6h0M1241.4 1009.4h0M1242.6 1009.2h0M1244.9 1009.7h0M1245.7 1009.2h0M1247 1009.1h0M1251.2 1009.1h0M1252.3 1009.4h0M1258.7 1009.6h0M1258.9 1009.7h0M1259.5 1009.5h0" stroke="#fff" stroke-width="1.0" stroke-linecap="round" fill="none" stroke-opacity="0.85"/><path d="M355.3 1001.3h0M579.5 1004.3h0M593.5 1000.5h0M630.5 1004.3h0M804.5 1005h0M857.3 1003.5h0M879.2 1004.5h0M883.5 1005.3h0M1120.5 1004.5h0M1195.5 998.4h0M442.4 1005h0M1272.5 997.1h0" stroke="#000" stroke-width="2.8" stroke-linecap="round" fill="none"/><path d="M160.8 958.5l1.7 0l-0.8 -2zM162.2 958.5l1.7 0l-0.8 -2zM163.8 958.5l1.7 0l-0.8 -2zM354.4 958.5l1.7 0l-0.8 -2zM441.5 958.5l1.7 0l-0.8 -2zM557.1 958.5l1.7 0l-0.8 -2zM558.5 958.5l1.7 0l-0.8 -2zM592.5 958.5l1.7 0l-0.8 -2zM629.5 958.5l1.7 0l-0.8 -2zM804.4 958.5l1.7 0l-0.8 -2zM851.8 958.5l1.7 0l-0.8 -2zM853.4 958.5l1.7 0l-0.8 -2zM854.9 958.5l1.7 0l-0.8 -2zM887.1 958.5l1.7 0l-0.8 -2zM962.6 958.5l1.7 0l-0.8 -2zM1006.5 958.5l1.7 0l-0.8 -2zM1008.1 958.5l1.7 0l-0.8 -2zM1009.8 958.5l1.7 0l-0.8 -2zM1119 958.5l1.7 0l-0.8 -2zM1120.5 958.5l1.7 0l-0.8 -2zM1166.7 958.5l1.7 0l-0.8 -2zM1194.7 958.5l1.7 0l-0.8 -2zM1262.2 958.5l1.7 0l-0.8 -2zM1263.8 958.5l1.7 0l-0.8 -2zM1265.4 958.5l1.7 0l-0.8 -2zM1271.7 958.5l1.7 0l-0.8 -2zM1280.8 958.5l1.7 0l-0.8 -2zM1282.4 958.5l1.7 0l-0.8 -2zM1291 958.5l1.7 0l-0.8 -2zM1292.6 958.5l1.7 0l-0.8 -2zM1294 958.5l1.7 0l-0.8 -2z" fill="none" stroke="#f00" stroke-width="1.05" stroke-linejoin="miter"/><path d="M886.4 977.3h0M889.3 989.3h0M1272.5 978h0M1272.5 979.6h0M1272.5 984.6h0M1272.5 986.2h0M1272.5 989.3h0" stroke="#f00" stroke-width="2.8" stroke-linecap="round" fill="none"/>
<path d="M162 1011.0V954.4" stroke="#800080" stroke-width="2" stroke-dasharray="2.083 3.4375" fill="none"/><path d="M853 1011.0V954.4" stroke="#800080" stroke-width="2" stroke-dasharray="2.083 3.4375" fill="none"/><path d="M1007 1011.0V954.4" stroke="#800080" stroke-width="2" stroke-dasharray="2.083 3.4375" fill="none"/><path d="M1263 1011.0V954.4" stroke="#800080" stroke-width="2" stroke-dasharray="2.083 3.4375" fill="none"/><path d="M1292 1011.0V954.4" stroke="#800080" stroke-width="2" stroke-dasharray="2.083 3.4375" fill="none"/><path d="M1303 1011.0V954.4" stroke="#800080" stroke-width="2" stroke-dasharray="2.083 3.4375" fill="none"/>
</g>
<path d="M105.5 954.5H1485.5" stroke="#000" stroke-width="1"/>
<rect x="105.5" y="725.5" width="1380.0" height="286.0" fill="none" stroke="#000" stroke-width="1"/>
<path d="M162.5 1011.5V1016.4" stroke="#000" stroke-width="1"/><text x="161.8" y="1031.5" font-size="13.89" text-anchor="middle">0</text><path d="M338.5 1011.5V1016.4" stroke="#000" stroke-width="1"/><text x="337.5" y="1031.5" font-size="13.89" text-anchor="middle">5000</text><path d="M514.5 1011.5V1016.4" stroke="#000" stroke-width="1"/><text x="513.3" y="1031.5" font-size="13.89" text-anchor="middle">10000</text><path d="M689.5 1011.5V1016.4" stroke="#000" stroke-width="1"/><text x="689.1" y="1031.5" font-size="13.89" text-anchor="middle">15000</text><path d="M865.5 1011.5V1016.4" stroke="#000" stroke-width="1"/><text x="864.9" y="1031.5" font-size="13.89" text-anchor="middle">20000</text><path d="M1041.5 1011.5V1016.4" stroke="#000" stroke-width="1"/><text x="1040.7" y="1031.5" font-size="13.89" text-anchor="middle">25000</text><path d="M1217.5 1011.5V1016.4" stroke="#000" stroke-width="1"/><text x="1216.5" y="1031.5" font-size="13.89" text-anchor="middle">30000</text><path d="M1392.5 1011.5V1016.4" stroke="#000" stroke-width="1"/><text x="1392.3" y="1031.5" font-size="13.89" text-anchor="middle">35000</text>
<path d="M105.5 763.5H100.2" stroke="#000" stroke-width="1"/><text x="95.6" y="768" font-size="13.89" text-anchor="end">not Kalman</text><path d="M105.5 801.5H100.2" stroke="#000" stroke-width="1"/><text x="95.6" y="806" font-size="13.89" text-anchor="end">not track</text><path d="M105.5 840.5H100.2" stroke="#000" stroke-width="1"/><text x="95.6" y="845" font-size="13.89" text-anchor="end">Ion. rad.</text><path d="M105.5 878.5H100.2" stroke="#000" stroke-width="1"/><text x="95.6" y="883" font-size="13.89" text-anchor="end">dr &gt; 5</text><path d="M105.5 916.5H100.2" stroke="#000" stroke-width="1"/><text x="95.6" y="921" font-size="13.89" text-anchor="end">OBS not OK</text>
<path d="M105.5 1009.5H100.2" stroke="#000" stroke-width="1"/><text x="95.6" y="1014" font-size="13.89" text-anchor="end">0</text><path d="M105.5 983.5H100.2" stroke="#000" stroke-width="1"/><text x="95.6" y="988" font-size="13.89" text-anchor="end">5</text><path d="M105.5 957.5H100.2" stroke="#000" stroke-width="1"/><text x="95.6" y="962" font-size="13.89" text-anchor="end">10</text>
<path d="M105.5 996.5h-2.8" stroke="#000" stroke-width="0.85"/>
<path d="M105.5 970.5h-2.8" stroke="#000" stroke-width="0.85"/>
<text transform="translate(69.3 984) rotate(-90)" font-size="13.89" text-anchor="middle">dr</text>
</svg>
</body></html>
